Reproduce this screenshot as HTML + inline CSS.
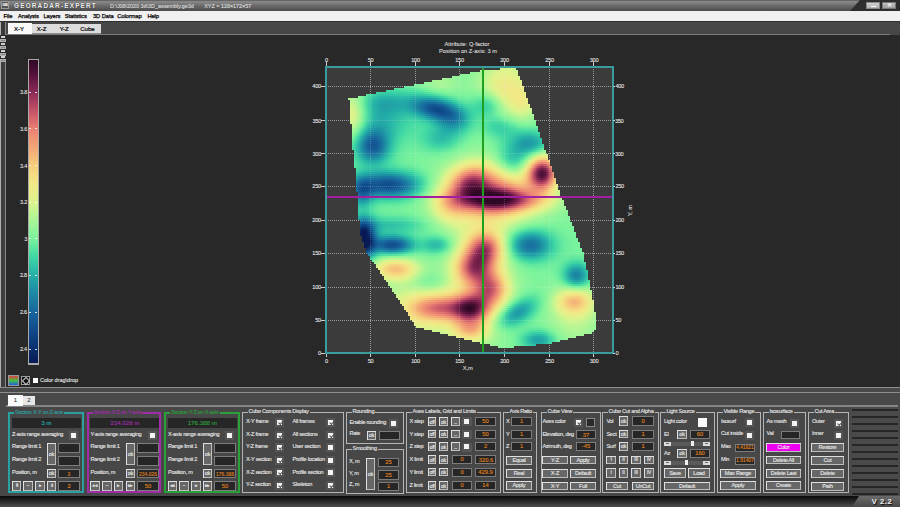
<!DOCTYPE html><html><head><meta charset="utf-8"><style>
html,body{margin:0;padding:0;width:900px;height:507px;overflow:hidden;background:#282828}
body div{position:absolute;box-sizing:content-box}
.t{font-family:"Liberation Sans", sans-serif;white-space:nowrap;-webkit-text-stroke:0.12px currentColor}
</style></head><body>
<div style="left:0px;top:0px;width:900px;height:11px;background:linear-gradient(#555 0,#8a8a8a 15%,#6c6c6c 50%,#4a4a4a)"></div><div style="left:850px;top:0;width:50px;height:11px;background:#2e2e2e;clip-path:polygon(10px 0,50px 0,50px 11px,0 11px)"></div><div style="left:866px;top:2px;width:14px;height:7px;background:linear-gradient(#d8d8d8,#a8a8a8);box-shadow:inset 0 0 0 1px #888"></div><div style="left:871px;top:6px;width:5px;height:1px;background:#fff"></div><div style="left:882px;top:2px;width:14px;height:7px;background:linear-gradient(#c8c8c8,#989898);box-shadow:inset 0 0 0 1px #777"></div><div class="t" style="left:789px;width:200px;text-align:center;top:1.70px;font-size:6px;line-height:7.20px;color:#fff;letter-spacing:0.00px;font-weight:400;">&#x2715;</div><div style="left:1px;top:1px;width:8px;height:8px;background:#555;box-shadow:inset 0 0 0 1px #999"></div><div class="t" style="left:-95px;width:200px;text-align:center;top:2.60px;font-size:4px;line-height:4.80px;color:#fff;letter-spacing:-0.30px;font-weight:700;">GE</div><div class="t" style="left:14px;top:1.76px;font-size:6.4px;line-height:7.68px;color:#f0f0f0;letter-spacing:1.20px;font-weight:700;text-shadow:0 0 1px #222;-webkit-text-stroke:0;">GEORADAR-EXPERT</div><div class="t" style="left:110px;transform-origin:0 50%;top:1.78px;font-size:6.2px;line-height:7.44px;color:#dcdcdc;letter-spacing:0.00px;font-weight:400;transform:scaleX(0.871);">D:\J08\2020 3d\3D_assembly.ge3d&nbsp;&nbsp;&nbsp;&nbsp;&nbsp;&nbsp;&nbsp;XYZ = 128×172×57</div><div style="left:0px;top:11px;width:900px;height:10px;background:#f0f0f0"></div><div class="t" style="left:3.4px;top:12.72px;font-size:5.8px;line-height:6.96px;color:#000;letter-spacing:-0.10px;font-weight:400;-webkit-text-stroke:0.25px #000;">File</div><div class="t" style="left:18px;top:12.72px;font-size:5.8px;line-height:6.96px;color:#000;letter-spacing:-0.10px;font-weight:400;-webkit-text-stroke:0.25px #000;">Analysis</div><div class="t" style="left:43.5px;top:12.72px;font-size:5.8px;line-height:6.96px;color:#000;letter-spacing:-0.10px;font-weight:400;-webkit-text-stroke:0.25px #000;">Layers</div><div class="t" style="left:64.7px;top:12.72px;font-size:5.8px;line-height:6.96px;color:#000;letter-spacing:-0.10px;font-weight:400;-webkit-text-stroke:0.25px #000;">Statistics</div><div class="t" style="left:92.6px;transform-origin:0 50%;top:12.48px;font-size:6.2px;line-height:7.44px;color:#000;letter-spacing:-0.11px;font-weight:400;transform:scaleX(0.935);-webkit-text-stroke:0.25px #000;">3D Data</div><div class="t" style="left:117.2px;top:12.72px;font-size:5.8px;line-height:6.96px;color:#000;letter-spacing:-0.10px;font-weight:400;-webkit-text-stroke:0.25px #000;">Colormap</div><div class="t" style="left:147.4px;top:12.72px;font-size:5.8px;line-height:6.96px;color:#000;letter-spacing:-0.10px;font-weight:400;-webkit-text-stroke:0.25px #000;">Help</div><div style="left:0px;top:21px;width:900px;height:14px;background:#474747;box-shadow:inset 0 1px 0 #303030"></div><div style="left:8px;top:23px;width:24px;height:12px;background:#fafafa"></div><div style="left:32px;top:24px;width:69px;height:9px;background:#dcdcdc"></div><div style="left:32px;top:33px;width:69px;height:2px;background:#8c8c8c"></div><div class="t" style="left:-81px;width:200px;text-align:center;top:25.70px;font-size:6px;line-height:7.20px;color:#000;letter-spacing:0.00px;font-weight:400;-webkit-text-stroke:0.2px #000;">X-Y</div><div class="t" style="left:-58.4px;width:200px;text-align:center;top:25.70px;font-size:6px;line-height:7.20px;color:#000;letter-spacing:0.00px;font-weight:400;-webkit-text-stroke:0.2px #000;">X-Z</div><div class="t" style="left:-35.8px;width:200px;text-align:center;top:25.70px;font-size:6px;line-height:7.20px;color:#000;letter-spacing:0.00px;font-weight:400;-webkit-text-stroke:0.2px #000;">Y-Z</div><div class="t" style="left:-12.599999999999994px;width:200px;text-align:center;top:25.70px;font-size:6px;line-height:7.20px;color:#000;letter-spacing:0.00px;font-weight:400;-webkit-text-stroke:0.2px #000;">Cube</div><div style="left:0px;top:35px;width:900px;height:352px;background:#282828"></div><div style="left:6px;top:34px;width:884px;height:1px;background:#7a7a7a"></div><div style="left:0px;top:22px;width:6px;height:468px;background:#3e3e3e;box-shadow:inset 1px 0 0 #b0b0b0,inset -1px 0 0 #8a8a8a"></div><div style="left:1px;top:22px;width:4px;height:13px;background:#3a3a3a"></div><div style="left:0px;top:35px;width:6px;height:26px;background:#2e2e2e"></div><div style="left:1px;top:36px;width:4px;height:2px;background:#d0d0d0"></div><div style="left:0px;top:39px;width:6px;height:3px;background:#8a8a8a;box-shadow:inset 0 0 0 1px #b0b0b0"></div><div style="left:1px;top:43px;width:4px;height:2px;background:#d0d0d0"></div><div style="left:0px;top:46px;width:6px;height:3px;background:#8a8a8a;box-shadow:inset 0 0 0 1px #b0b0b0"></div><div style="left:1px;top:50px;width:4px;height:2px;background:#d0d0d0"></div><div style="left:0px;top:53px;width:6px;height:3px;background:#8a8a8a;box-shadow:inset 0 0 0 1px #b0b0b0"></div><div style="left:1px;top:56px;width:4px;height:2px;background:#d0d0d0"></div><div style="left:0px;top:59px;width:6px;height:3px;background:#8a8a8a;box-shadow:inset 0 0 0 1px #b0b0b0"></div><div style="left:28px;top:59px;width:11px;height:306px;background:#aaa"></div><div style="left:29px;top:60px;width:9px;height:303px;background:linear-gradient(180deg,#2f0825 0.0%,#430d30 2.5%,#57133b 5.0%,#6e1d47 7.5%,#852753 10.0%,#9d365b 12.5%,#b44763 15.0%,#c95869 17.5%,#d96b6d 20.0%,#e97e72 22.5%,#ee8e74 25.0%,#f29d75 27.5%,#f4ad77 30.0%,#f5be7a 32.5%,#f6cf7c 35.0%,#f4da81 37.5%,#f3e585 40.0%,#eceb88 42.5%,#e4f08a 45.0%,#d8f48d 47.5%,#c3f591 50.0%,#aef696 52.5%,#9af598 55.0%,#86f49b 57.5%,#70ee9e 60.0%,#57e3a1 62.5%,#3fd7a4 65.0%,#34c6a6 67.5%,#28b6a7 70.0%,#22a5a7 72.5%,#1e96a5 75.0%,#1c86a3 77.5%,#1a78a1 80.0%,#186a9e 82.5%,#155e98 85.0%,#125290 87.5%,#0f4787 90.0%,#0c3c7b 92.5%,#0a316f 95.0%,#092662 97.5%,#081a54 100.0%)"></div><div class="t" style="left:-173.2px;width:200px;text-align:right;transform-origin:100% 50%;top:88.28px;font-size:6.2px;line-height:7.44px;color:#e4e4e4;letter-spacing:-0.33px;font-weight:400;transform:scaleX(0.903);-webkit-text-stroke:0.1px currentColor;">3.8</div><div style="left:29px;top:92px;width:2px;height:1px;background:rgba(255,255,255,.8)"></div><div style="left:35px;top:92px;width:2px;height:1px;background:rgba(255,255,255,.8)"></div><div class="t" style="left:-173.2px;width:200px;text-align:right;transform-origin:100% 50%;top:124.98px;font-size:6.2px;line-height:7.44px;color:#e4e4e4;letter-spacing:-0.33px;font-weight:400;transform:scaleX(0.903);-webkit-text-stroke:0.1px currentColor;">3.6</div><div style="left:29px;top:128px;width:2px;height:1px;background:rgba(255,255,255,.8)"></div><div style="left:35px;top:128px;width:2px;height:1px;background:rgba(255,255,255,.8)"></div><div class="t" style="left:-173.2px;width:200px;text-align:right;transform-origin:100% 50%;top:161.68px;font-size:6.2px;line-height:7.44px;color:#e4e4e4;letter-spacing:-0.33px;font-weight:400;transform:scaleX(0.903);-webkit-text-stroke:0.1px currentColor;">3.4</div><div style="left:29px;top:165px;width:2px;height:1px;background:rgba(255,255,255,.8)"></div><div style="left:35px;top:165px;width:2px;height:1px;background:rgba(255,255,255,.8)"></div><div class="t" style="left:-173.2px;width:200px;text-align:right;transform-origin:100% 50%;top:198.38px;font-size:6.2px;line-height:7.44px;color:#e4e4e4;letter-spacing:-0.33px;font-weight:400;transform:scaleX(0.903);-webkit-text-stroke:0.1px currentColor;">3.2</div><div style="left:29px;top:202px;width:2px;height:1px;background:rgba(255,255,255,.8)"></div><div style="left:35px;top:202px;width:2px;height:1px;background:rgba(255,255,255,.8)"></div><div class="t" style="left:-173.2px;width:200px;text-align:right;transform-origin:100% 50%;top:235.08px;font-size:6.2px;line-height:7.44px;color:#e4e4e4;letter-spacing:-0.33px;font-weight:400;transform:scaleX(0.903);-webkit-text-stroke:0.1px currentColor;">3</div><div style="left:29px;top:238px;width:2px;height:1px;background:rgba(255,255,255,.8)"></div><div style="left:35px;top:238px;width:2px;height:1px;background:rgba(255,255,255,.8)"></div><div class="t" style="left:-173.2px;width:200px;text-align:right;top:272.14px;font-size:5.6px;line-height:6.72px;color:#e4e4e4;letter-spacing:-0.30px;font-weight:400;-webkit-text-stroke:0.1px currentColor;">2.8</div><div style="left:29px;top:275px;width:2px;height:1px;background:rgba(255,255,255,.8)"></div><div style="left:35px;top:275px;width:2px;height:1px;background:rgba(255,255,255,.8)"></div><div class="t" style="left:-173.2px;width:200px;text-align:right;top:308.84px;font-size:5.6px;line-height:6.72px;color:#e4e4e4;letter-spacing:-0.30px;font-weight:400;-webkit-text-stroke:0.1px currentColor;">2.6</div><div style="left:29px;top:312px;width:2px;height:1px;background:rgba(255,255,255,.8)"></div><div style="left:35px;top:312px;width:2px;height:1px;background:rgba(255,255,255,.8)"></div><div class="t" style="left:-173.2px;width:200px;text-align:right;top:345.54px;font-size:5.6px;line-height:6.72px;color:#e4e4e4;letter-spacing:-0.30px;font-weight:400;-webkit-text-stroke:0.1px currentColor;">2.4</div><div style="left:29px;top:349px;width:2px;height:1px;background:rgba(255,255,255,.8)"></div><div style="left:35px;top:349px;width:2px;height:1px;background:rgba(255,255,255,.8)"></div><div style="left:9px;top:376px;width:9px;height:9px;background:linear-gradient(#e04040,#40c040 50%,#2060e0);box-shadow:0 0 0 1px #999"></div><div style="left:21px;top:376px;width:9px;height:9px;background:#111;box-shadow:inset 0 0 0 1px #999"></div><div style="left:23px;top:378px;width:4px;height:4px;border:1px solid #ccc;transform:rotate(45deg)"></div><div style="left:33px;top:378px;width:5px;height:5px;background:#fff"></div><div class="t" style="left:40px;top:377.14px;font-size:5.6px;line-height:6.72px;color:#e0e0e0;letter-spacing:-0.05px;font-weight:400;">Color drag\drop</div><div style="left:326px;top:67px;width:287px;height:287px;background:#3b3b3b"></div><div style="left:370px;top:67px;width:0;height:287px;border-left:1px dotted rgba(220,220,220,.45)"></div><div style="left:415px;top:67px;width:0;height:287px;border-left:1px dotted rgba(220,220,220,.45)"></div><div style="left:459px;top:67px;width:0;height:287px;border-left:1px dotted rgba(220,220,220,.45)"></div><div style="left:504px;top:67px;width:0;height:287px;border-left:1px dotted rgba(220,220,220,.45)"></div><div style="left:549px;top:67px;width:0;height:287px;border-left:1px dotted rgba(220,220,220,.45)"></div><div style="left:593px;top:67px;width:0;height:287px;border-left:1px dotted rgba(220,220,220,.45)"></div><div style="left:326px;top:320px;width:287px;height:0;border-top:1px dotted rgba(220,220,220,.45)"></div><div style="left:326px;top:287px;width:287px;height:0;border-top:1px dotted rgba(220,220,220,.45)"></div><div style="left:326px;top:253px;width:287px;height:0;border-top:1px dotted rgba(220,220,220,.45)"></div><div style="left:326px;top:220px;width:287px;height:0;border-top:1px dotted rgba(220,220,220,.45)"></div><div style="left:326px;top:186px;width:287px;height:0;border-top:1px dotted rgba(220,220,220,.45)"></div><div style="left:326px;top:153px;width:287px;height:0;border-top:1px dotted rgba(220,220,220,.45)"></div><div style="left:326px;top:120px;width:287px;height:0;border-top:1px dotted rgba(220,220,220,.45)"></div><div style="left:326px;top:86px;width:287px;height:0;border-top:1px dotted rgba(220,220,220,.45)"></div><div style="left:500px;top:68px;width:16px;height:2px;background:linear-gradient(90deg,#7ff49c 0px,#7ff49c 4px,#7ff49c 8px,#7ff49c 12px,#7ef49c 16px,#7df49c 20px,#7cf49c 24px,#7cf49c 28px,#7cf49c 32px,#7bf49c 36px,#7bf49c 40px,#7bf49c 44px,#7bf49c 48px,#7cf49c 52px,#7cf49c 56px,#7cf49c 60px,#7cf49c 64px,#7df49c 68px,#7ef49c 72px,#7ff49c 76px,#81f49b 80px,#83f49b 84px,#84f49b 88px,#85f49b 92px,#86f49b 96px,#85f49b 100px,#84f49b 104px,#83f49b 108px,#83f49b 112px,#84f49b 116px,#87f49b 120px,#8bf59a 124px,#92f599 128px,#9bf598 132px,#a6f697 136px,#b2f695 140px,#bef592 144px,#caf590 148px,#d3f48e 152px,#d8f48d 156px,#d9f48d 160px,#d5f48e 164px,#cef58f 168px,#c4f591 172px,#b8f694 176px,#abf696 180px,#a0f598 184px,#95f599 188px,#8df59a 192px,#87f49b 196px,#83f49b 200px,#80f49c 204px,#7ef49c 208px,#7df49c 212px,#7df49c 216px,#7cf49c 220px,#7cf49c 224px,#7cf49c 228px,#7cf49c 232px,#7cf49c 236px,#7cf49c 240px,#7cf49c 244px,#7cf49c 248px,#7cf49c 252px) -154px 0/252px 2px no-repeat"></div><div style="left:480px;top:70px;width:38px;height:2px;background:linear-gradient(90deg,#80f49c 0px,#80f49b 4px,#80f49b 8px,#80f49c 12px,#7ff49c 16px,#7df49c 20px,#7df49c 24px,#7cf49c 28px,#7bf49c 32px,#7bf49c 36px,#7bf49c 40px,#7bf49c 44px,#7bf49c 48px,#7bf49c 52px,#7bf49c 56px,#7cf49c 60px,#7cf49c 64px,#7df49c 68px,#7ff49c 72px,#81f49b 76px,#84f49b 80px,#86f49b 84px,#89f59a 88px,#8af59a 92px,#8bf59a 96px,#8af59a 100px,#88f59a 104px,#86f49b 108px,#85f49b 112px,#86f49b 116px,#88f59a 120px,#8df59a 124px,#94f599 128px,#9df598 132px,#a9f696 136px,#b6f694 140px,#c4f591 144px,#d0f58f 148px,#daf48d 152px,#def48c 156px,#dff38c 160px,#ddf48c 164px,#d5f48e 168px,#caf590 172px,#bef592 176px,#b0f695 180px,#a3f697 184px,#98f599 188px,#8ff59a 192px,#88f49b 196px,#83f49b 200px,#80f49b 204px,#7ef49c 208px,#7df49c 212px,#7df49c 216px,#7cf49c 220px,#7cf49c 224px,#7cf49c 228px,#7cf49c 232px,#7cf49c 236px,#7cf49c 240px,#7cf49c 244px,#7cf49c 248px,#7cf49c 252px) -134px 0/252px 2px no-repeat"></div><div style="left:470px;top:72px;width:48px;height:2px;background:linear-gradient(90deg,#81f49b 0px,#82f49b 4px,#82f49b 8px,#81f49b 12px,#7ff49c 16px,#7ef49c 20px,#7df49c 24px,#7bf49c 28px,#7bf39c 32px,#7bf39c 36px,#7af39c 40px,#7af39c 44px,#7bf39c 48px,#7bf39c 52px,#7bf49c 56px,#7cf49c 60px,#7df49c 64px,#7ef49c 68px,#80f49b 72px,#83f49b 76px,#87f49b 80px,#8bf59a 84px,#8ef59a 88px,#91f599 92px,#91f599 96px,#90f59a 100px,#8df59a 104px,#8af59a 108px,#88f59a 112px,#88f49b 116px,#8af59a 120px,#8ef59a 124px,#96f599 128px,#a0f598 132px,#acf696 136px,#baf593 140px,#c9f590 144px,#d6f48e 148px,#dff38c 152px,#e1f28b 156px,#e2f28b 160px,#e0f38b 164px,#dcf48c 168px,#d1f58f 172px,#c4f591 176px,#b6f694 180px,#a7f697 184px,#9bf598 188px,#91f599 192px,#89f59a 196px,#84f49b 200px,#80f49b 204px,#7ef49c 208px,#7df49c 212px,#7df49c 216px,#7cf49c 220px,#7cf49c 224px,#7cf49c 228px,#7cf49c 232px,#7cf49c 236px,#7cf49c 240px,#7cf49c 244px,#7cf49c 248px,#7cf49c 252px) -124px 0/252px 2px no-repeat"></div><div style="left:460px;top:74px;width:58px;height:2px;background:linear-gradient(90deg,#83f49b 0px,#84f49b 4px,#84f49b 8px,#82f49b 12px,#80f49b 16px,#7ef49c 20px,#7cf49c 24px,#7bf39c 28px,#7af39c 32px,#7af39c 36px,#79f39c 40px,#79f39c 44px,#7af39c 48px,#7af39c 52px,#7af39c 56px,#7bf49c 60px,#7df49c 64px,#7ef49c 68px,#81f49b 72px,#86f49b 76px,#8bf59a 80px,#90f599 84px,#95f599 88px,#98f599 92px,#98f598 96px,#96f599 100px,#93f599 104px,#8ff59a 108px,#8bf59a 112px,#8af59a 116px,#8bf59a 120px,#90f59a 124px,#97f599 128px,#a2f697 132px,#aff695 136px,#bef592 140px,#cef58f 144px,#dcf48c 148px,#e1f28b 152px,#e4f08a 156px,#e5f08a 160px,#e3f18a 164px,#e0f38b 168px,#d8f48d 172px,#cbf590 176px,#bbf593 180px,#acf696 184px,#9ef598 188px,#93f599 192px,#8af59a 196px,#84f49b 200px,#81f49b 204px,#7ff49c 208px,#7df49c 212px,#7df49c 216px,#7cf49c 220px,#7cf49c 224px,#7cf49c 228px,#7cf49c 232px,#7cf49c 236px,#7cf49c 240px,#7cf49c 244px,#7cf49c 248px,#7cf49c 252px) -114px 0/252px 2px no-repeat"></div><div style="left:452px;top:76px;width:68px;height:2px;background:linear-gradient(90deg,#85f49b 0px,#86f49b 4px,#86f49b 8px,#84f49b 12px,#81f49b 16px,#7ef49c 20px,#7cf49c 24px,#7af39c 28px,#79f29c 32px,#78f29d 36px,#78f29d 40px,#78f29d 44px,#78f29d 48px,#79f29c 52px,#79f39c 56px,#7af39c 60px,#7cf49c 64px,#7ff49c 68px,#83f49b 72px,#88f49b 76px,#8ef59a 80px,#95f599 84px,#9bf598 88px,#9ff598 92px,#9ff598 96px,#9df598 100px,#98f598 104px,#93f599 108px,#8ff59a 112px,#8cf59a 116px,#8df59a 120px,#91f599 124px,#99f598 128px,#a4f697 132px,#b2f695 136px,#c2f592 140px,#d2f48e 144px,#dff38c 148px,#e4f18a 152px,#e7ef89 156px,#e7ee89 160px,#e6ef8a 164px,#e3f18a 168px,#dff48c 172px,#d2f48e 176px,#c2f592 180px,#b1f695 184px,#a1f697 188px,#95f599 192px,#8bf59a 196px,#85f49b 200px,#81f49b 204px,#7ff49c 208px,#7df49c 212px,#7df49c 216px,#7cf49c 220px,#7cf49c 224px,#7cf49c 228px,#7cf49c 232px,#7cf49c 236px,#7cf49c 240px,#7cf49c 244px,#7cf49c 248px,#7cf49c 252px) -106px 0/252px 2px no-repeat"></div><div style="left:442px;top:78px;width:78px;height:2px;background:linear-gradient(90deg,#87f49b 0px,#89f59a 4px,#89f59a 8px,#86f49b 12px,#82f49b 16px,#7ff49c 20px,#7bf49c 24px,#78f29d 28px,#76f19d 32px,#76f19d 36px,#75f19d 40px,#75f19d 44px,#76f19d 48px,#76f19d 52px,#77f29d 56px,#79f39c 60px,#7bf49c 64px,#7ef49c 68px,#83f49b 72px,#89f59a 76px,#91f599 80px,#99f598 84px,#a0f697 88px,#a5f697 92px,#a6f697 96px,#a3f697 100px,#9df598 104px,#97f599 108px,#91f599 112px,#8ef59a 116px,#8ef59a 120px,#92f599 124px,#9af598 128px,#a5f697 132px,#b4f694 136px,#c4f591 140px,#d5f48e 144px,#e1f28b 148px,#e6ef8a 152px,#e9ed89 156px,#eaed88 160px,#e9ee89 164px,#e6ef8a 168px,#e2f28b 172px,#d9f48d 176px,#c8f590 180px,#b6f694 184px,#a5f697 188px,#97f599 192px,#8cf59a 196px,#86f49b 200px,#81f49b 204px,#7ff49c 208px,#7ef49c 212px,#7df49c 216px,#7cf49c 220px,#7cf49c 224px,#7cf49c 228px,#7cf49c 232px,#7cf49c 236px,#7cf49c 240px,#7cf49c 244px,#7cf49c 248px,#7cf49c 252px) -96px 0/252px 2px no-repeat"></div><div style="left:432px;top:80px;width:90px;height:2px;background:linear-gradient(90deg,#8af59a 0px,#8cf59a 4px,#8bf59a 8px,#88f59a 12px,#83f49b 16px,#7ef49c 20px,#79f39c 24px,#75f19d 28px,#73f09d 32px,#72ef9d 36px,#72ef9d 40px,#72ef9d 44px,#72ef9d 48px,#73f09d 52px,#74f09d 56px,#76f19d 60px,#79f39c 64px,#7df49c 68px,#83f49b 72px,#8af59a 76px,#92f599 80px,#9bf598 84px,#a3f697 88px,#a9f696 92px,#aaf696 96px,#a6f697 100px,#a0f697 104px,#99f598 108px,#93f599 112px,#8ff59a 116px,#8ff59a 120px,#93f599 124px,#9bf598 128px,#a6f697 132px,#b5f694 136px,#c6f591 140px,#d7f48d 144px,#e2f28b 148px,#e7ee89 152px,#ebec88 156px,#ecec88 160px,#ebec88 164px,#e9ee89 168px,#e5f08a 172px,#dff38c 176px,#cff58f 180px,#bcf593 184px,#a9f696 188px,#99f598 192px,#8ef59a 196px,#86f49b 200px,#82f49b 204px,#7ff49c 208px,#7ef49c 212px,#7df49c 216px,#7cf49c 220px,#7cf49c 224px,#7cf49c 228px,#7cf49c 232px,#7cf49c 236px,#7cf49c 240px,#7cf49c 244px,#7cf49c 248px,#7cf49c 252px) -86px 0/252px 2px no-repeat"></div><div style="left:424px;top:82px;width:98px;height:2px;background:linear-gradient(90deg,#8df59a 0px,#8ff59a 4px,#8ff59a 8px,#8bf59a 12px,#84f49b 16px,#7df49c 20px,#76f19d 24px,#71ef9d 28px,#6eee9e 32px,#6ded9e 36px,#6ced9e 40px,#6ced9e 44px,#6ded9e 48px,#6eee9e 52px,#70ee9e 56px,#72ef9d 60px,#76f19d 64px,#7bf39c 68px,#81f49b 72px,#88f59a 76px,#91f599 80px,#9bf598 84px,#a4f697 88px,#a9f696 92px,#aaf696 96px,#a7f697 100px,#a1f697 104px,#9af598 108px,#94f599 112px,#90f59a 116px,#8ff59a 120px,#93f599 124px,#9bf598 128px,#a6f697 132px,#b4f694 136px,#c6f591 140px,#d8f48d 144px,#e2f18b 148px,#e8ee89 152px,#ecec88 156px,#eeeb87 160px,#edeb87 164px,#ebec88 168px,#e7ee89 172px,#e2f18b 176px,#d7f48d 180px,#c2f592 184px,#adf696 188px,#9cf598 192px,#8ff59a 196px,#87f49b 200px,#82f49b 204px,#7ff49c 208px,#7ef49c 212px,#7df49c 216px,#7cf49c 220px,#7cf49c 224px,#7cf49c 228px,#7cf49c 232px,#7cf49c 236px,#7cf49c 240px,#7cf49c 244px,#7cf49c 248px,#7cf49c 252px) -78px 0/252px 2px no-repeat"></div><div style="left:414px;top:84px;width:108px;height:2px;background:linear-gradient(90deg,#90f599 0px,#93f599 4px,#92f599 8px,#8df59a 12px,#84f49b 16px,#7bf49c 20px,#72ef9d 24px,#6bec9e 28px,#67ea9f 32px,#65e99f 36px,#65e99f 40px,#65e99f 44px,#66ea9f 48px,#68ea9f 52px,#6aeb9e 56px,#6ced9e 60px,#70ee9e 64px,#75f19d 68px,#7cf49c 72px,#84f49b 76px,#8ef59a 80px,#98f599 84px,#a0f697 88px,#a6f697 92px,#a8f697 96px,#a5f697 100px,#a0f598 104px,#99f598 108px,#93f599 112px,#8ff59a 116px,#8ff59a 120px,#92f599 124px,#99f598 128px,#a4f697 132px,#b2f695 136px,#c4f591 140px,#d6f48e 144px,#e2f28b 148px,#e8ee89 152px,#edeb88 156px,#efea87 160px,#efea87 164px,#edeb87 168px,#eaed88 172px,#e5f08a 176px,#def48c 180px,#c8f590 184px,#b1f695 188px,#9ef598 192px,#90f599 196px,#87f49b 200px,#82f49b 204px,#7ff49c 208px,#7ef49c 212px,#7df49c 216px,#7cf49c 220px,#7cf49c 224px,#7cf49c 228px,#7cf49c 232px,#7cf49c 236px,#7cf49c 240px,#7cf49c 244px,#7cf49c 248px,#7cf49c 252px) -68px 0/252px 2px no-repeat"></div><div style="left:404px;top:86px;width:120px;height:2px;background:linear-gradient(90deg,#94f599 0px,#98f599 4px,#96f599 8px,#8ff59a 12px,#84f49b 16px,#78f29d 20px,#6ced9e 24px,#64e99f 28px,#5ee6a0 32px,#5ce5a0 36px,#5be5a0 40px,#5be5a0 44px,#5de5a0 48px,#5ee6a0 52px,#61e7a0 56px,#64e99f 60px,#68eb9f 64px,#6ded9e 68px,#74f09d 72px,#7df49c 76px,#86f49b 80px,#90f599 84px,#99f598 88px,#9ff598 92px,#a1f697 96px,#a0f598 100px,#9bf598 104px,#95f599 108px,#90f599 112px,#8df59a 116px,#8df59a 120px,#91f599 124px,#97f599 128px,#a1f697 132px,#aef696 136px,#bff592 140px,#d2f48e 144px,#e1f28b 148px,#e7ee89 152px,#eceb88 156px,#efea87 160px,#f0e987 164px,#efea87 168px,#edeb88 172px,#e8ee89 176px,#e1f28b 180px,#cff58f 184px,#b6f694 188px,#a1f697 192px,#92f599 196px,#88f59a 200px,#82f49b 204px,#7ff49c 208px,#7ef49c 212px,#7df49c 216px,#7cf49c 220px,#7cf49c 224px,#7cf49c 228px,#7cf49c 232px,#7cf49c 236px,#7cf49c 240px,#7cf49c 244px,#7cf49c 248px,#7cf49c 252px) -58px 0/252px 2px no-repeat"></div><div style="left:394px;top:88px;width:130px;height:2px;background:linear-gradient(90deg,#98f598 0px,#9cf598 4px,#9af598 8px,#91f599 12px,#83f49b 16px,#74f09d 20px,#65e99f 24px,#5ae4a1 28px,#53e1a1 32px,#50dfa2 36px,#4edfa2 40px,#4fdfa2 44px,#51e0a2 48px,#53e1a1 52px,#56e2a1 56px,#59e4a1 60px,#5ce5a0 64px,#61e8a0 68px,#68eb9f 72px,#70ef9e 76px,#7bf49c 80px,#85f49b 84px,#8df59a 88px,#94f599 92px,#97f599 96px,#97f599 100px,#94f599 104px,#90f599 108px,#8df59a 112px,#8bf59a 116px,#8bf59a 120px,#8ef59a 124px,#93f599 128px,#9bf598 132px,#a7f697 136px,#b7f694 140px,#caf590 144px,#def48c 148px,#e5f08a 152px,#ebec88 156px,#efea87 160px,#f1e986 164px,#f1e986 168px,#efea87 172px,#ebec88 176px,#e4f08a 180px,#d5f48e 184px,#baf593 188px,#a3f697 192px,#93f599 196px,#89f59a 200px,#83f49b 204px,#7ff49c 208px,#7ef49c 212px,#7df49c 216px,#7cf49c 220px,#7cf49c 224px,#7cf49c 228px,#7cf49c 232px,#7cf49c 236px,#7cf49c 240px,#7cf49c 244px,#7cf49c 248px,#7cf49c 252px) -48px 0/252px 2px no-repeat"></div><div style="left:386px;top:90px;width:138px;height:2px;background:linear-gradient(90deg,#9df598 0px,#a1f697 4px,#9ef598 8px,#92f599 12px,#82f49b 16px,#6eed9e 20px,#5be5a0 24px,#4edfa2 28px,#46dba3 32px,#41d9a4 36px,#40d8a4 40px,#40d8a4 44px,#42d9a4 48px,#45daa3 52px,#48dca3 56px,#4bdda3 60px,#4edfa2 64px,#52e0a2 68px,#57e3a1 72px,#5ee6a0 76px,#68eb9f 80px,#72f09d 84px,#7df49c 88px,#84f49b 92px,#89f59a 96px,#8bf59a 100px,#8bf59a 104px,#8af59a 108px,#88f49b 112px,#87f49b 116px,#88f49b 120px,#8af59a 124px,#8ef59a 128px,#94f599 132px,#9ef598 136px,#acf696 140px,#bff592 144px,#d4f48e 148px,#e2f18b 152px,#e9ed89 156px,#eeeb87 160px,#f1e986 164px,#f2e886 168px,#f1e886 172px,#eeea87 176px,#e7ef89 180px,#dbf48d 184px,#bef592 188px,#a5f697 192px,#94f599 196px,#89f59a 200px,#83f49b 204px,#7ff49c 208px,#7ef49c 212px,#7df49c 216px,#7cf49c 220px,#7cf49c 224px,#7cf49c 228px,#7cf49c 232px,#7cf49c 236px,#7cf49c 240px,#7cf49c 244px,#7cf49c 248px,#7cf49c 252px) -40px 0/252px 2px no-repeat"></div><div style="left:376px;top:92px;width:150px;height:2px;background:linear-gradient(90deg,#a1f697 0px,#a6f697 4px,#a2f697 8px,#94f599 12px,#80f49b 16px,#68ea9f 20px,#51e0a2 24px,#41d8a4 28px,#3cd2a5 32px,#39cea5 36px,#38cda5 40px,#39cda5 44px,#3acfa5 48px,#3bd1a5 52px,#3cd3a5 56px,#3dd4a4 60px,#3ed6a4 64px,#3fd7a4 68px,#42d9a4 72px,#47dba3 76px,#4edfa2 80px,#58e3a1 84px,#63e89f 88px,#6eed9e 92px,#77f29d 96px,#7df49c 100px,#80f49c 104px,#81f49b 108px,#82f49b 112px,#83f49b 116px,#84f49b 120px,#85f49b 124px,#87f49b 128px,#8bf59a 132px,#92f599 136px,#9ff598 140px,#b1f695 144px,#c7f591 148px,#def48c 152px,#e6ef8a 156px,#ecec88 160px,#f0e987 164px,#f2e886 168px,#f2e786 172px,#f0e987 176px,#e9ed89 180px,#dff48c 184px,#c2f592 188px,#a7f697 192px,#95f599 196px,#89f59a 200px,#83f49b 204px,#80f49c 208px,#7ef49c 212px,#7df49c 216px,#7cf49c 220px,#7cf49c 224px,#7cf49c 228px,#7cf49c 232px,#7cf49c 236px,#7cf49c 240px,#7cf49c 244px,#7cf49c 248px,#7cf49c 252px) -30px 0/252px 2px no-repeat"></div><div style="left:366px;top:94px;width:160px;height:2px;background:linear-gradient(90deg,#a7f697 0px,#acf696 4px,#a6f697 8px,#96f599 12px,#7ff49c 16px,#61e7a0 20px,#46dba3 24px,#3acfa5 28px,#34c7a6 32px,#31c3a6 36px,#30c2a6 40px,#31c2a6 44px,#32c4a6 48px,#33c6a6 52px,#35c8a6 56px,#35c9a6 60px,#35c9a6 64px,#35c8a6 68px,#35c8a6 72px,#36c9a5 76px,#38cda5 80px,#3cd2a5 84px,#42d9a4 88px,#4fdfa2 92px,#5be5a0 96px,#66ea9f 100px,#6fee9e 104px,#75f19d 108px,#7af39c 112px,#7df49c 116px,#7ef49c 120px,#7ff49c 124px,#7ff49c 128px,#80f49c 132px,#84f49b 136px,#8ff59a 140px,#a0f697 144px,#b7f694 148px,#d1f58f 152px,#e2f28b 156px,#e9ed89 160px,#eeea87 164px,#f2e886 168px,#f2e685 172px,#f2e886 176px,#ebec88 180px,#e0f38b 184px,#c5f591 188px,#a9f696 192px,#96f599 196px,#8af59a 200px,#83f49b 204px,#80f49c 208px,#7ef49c 212px,#7df49c 216px,#7cf49c 220px,#7cf49c 224px,#7cf49c 228px,#7cf49c 232px,#7cf49c 236px,#7cf49c 240px,#7cf49c 244px,#7cf49c 248px,#7cf49c 252px) -20px 0/252px 2px no-repeat"></div><div style="left:358px;top:96px;width:168px;height:2px;background:linear-gradient(90deg,#acf696 0px,#b2f695 4px,#abf696 8px,#98f598 12px,#7ef49c 16px,#5be4a0 20px,#3ed5a4 24px,#34c7a6 28px,#2dbda7 32px,#2ab8a7 36px,#29b7a7 40px,#29b7a7 44px,#2bb9a7 48px,#2cbba7 52px,#2dbda7 56px,#2dbda7 60px,#2cbba7 64px,#2ab8a7 68px,#28b5a7 72px,#27b4a8 76px,#27b4a8 80px,#2ab8a7 84px,#2fc0a6 88px,#36c9a5 92px,#3dd4a4 96px,#4adda3 100px,#59e3a1 104px,#65e99f 108px,#6eed9e 112px,#74f09d 116px,#77f29d 120px,#77f29d 124px,#74f09d 128px,#72ef9d 132px,#74f09d 136px,#7ef49c 140px,#8ef59a 144px,#a6f697 148px,#c2f592 152px,#dcf48c 156px,#e6ef8a 160px,#eceb88 164px,#f1e986 168px,#f2e685 172px,#f2e886 176px,#ecec88 180px,#e1f28b 184px,#c6f591 188px,#aaf696 192px,#96f599 196px,#8af59a 200px,#83f49b 204px,#7ff49c 208px,#7ef49c 212px,#7df49c 216px,#7cf49c 220px,#7cf49c 224px,#7cf49c 228px,#7cf49c 232px,#7cf49c 236px,#7cf49c 240px,#7cf49c 244px,#7cf49c 248px,#7cf49c 252px) -12px 0/252px 2px no-repeat"></div><div style="left:348px;top:98px;width:180px;height:2px;background:linear-gradient(90deg,#b2f695 0px,#b8f694 4px,#b1f695 8px,#9bf598 12px,#7df49c 16px,#56e2a1 20px,#3ad0a5 24px,#2ebfa7 28px,#27b4a8 32px,#24afa8 36px,#23ada8 40px,#24aea8 44px,#24b0a8 48px,#26b2a8 52px,#26b3a8 56px,#26b2a8 60px,#24afa8 64px,#23a9a7 68px,#21a3a7 72px,#209ea6 76px,#209ba6 80px,#209da6 84px,#21a3a7 88px,#23ada8 92px,#2bbaa7 96px,#35c8a6 100px,#3fd6a4 104px,#50dfa2 108px,#5ee6a0 112px,#69eb9f 116px,#6eed9e 120px,#6ded9e 124px,#69eb9f 128px,#63e89f 132px,#61e7a0 136px,#69eb9f 140px,#7df49c 144px,#96f599 148px,#b3f695 152px,#d0f58f 156px,#e2f28b 160px,#eaed88 164px,#efea87 168px,#f2e786 172px,#f2e886 176px,#eceb88 180px,#e2f28b 184px,#c7f591 188px,#aaf696 192px,#96f599 196px,#8af59a 200px,#83f49b 204px,#7ff49c 208px,#7ef49c 212px,#7df49c 216px,#7cf49c 220px,#7cf49c 224px,#7cf49c 228px,#7cf49c 232px,#7cf49c 236px,#7cf49c 240px,#7cf49c 244px,#7cf49c 248px,#7cf49c 252px) -2px 0/252px 2px no-repeat"></div><div style="left:350px;top:100px;width:178px;height:2px;background:linear-gradient(90deg,#b8f694 0px,#bff592 4px,#b7f694 8px,#9ff598 12px,#7ef49c 16px,#53e1a2 20px,#37cba5 24px,#2ab9a7 28px,#23aea8 32px,#22a8a7 36px,#22a6a7 40px,#22a7a7 44px,#23aaa7 48px,#23aca8 52px,#23aca8 56px,#23aaa7 60px,#22a5a7 64px,#209da6 68px,#1e93a5 72px,#1c89a4 76px,#1b83a3 80px,#1b82a3 84px,#1b85a3 88px,#1d8fa5 92px,#209da6 96px,#24aea8 100px,#2fc0a6 104px,#3bd1a5 108px,#4bdda3 112px,#5ae4a1 116px,#62e89f 120px,#63e89f 124px,#5de6a0 128px,#55e2a1 132px,#51e0a2 136px,#56e2a1 140px,#69eb9f 144px,#86f49b 148px,#a5f697 152px,#c4f591 156px,#def48c 160px,#e7ef89 164px,#edeb87 168px,#f1e886 172px,#f1e886 176px,#ecec88 180px,#e1f28b 184px,#c7f591 188px,#aaf696 192px,#96f599 196px,#89f59a 200px,#83f49b 204px,#7ff49c 208px,#7ef49c 212px,#7df49c 216px,#7cf49c 220px,#7cf49c 224px,#7cf49c 228px,#7cf49c 232px,#7cf49c 236px,#7cf49c 240px,#7cf49c 244px,#7cf49c 248px,#7cf49c 252px) -4px 0/252px 2px no-repeat"></div><div style="left:350px;top:102px;width:178px;height:2px;background:linear-gradient(90deg,#bff592 0px,#c7f591 4px,#bef592 8px,#a4f697 12px,#80f49c 16px,#51e0a2 20px,#35c9a6 24px,#27b5a8 28px,#23a9a7 32px,#21a3a7 36px,#21a2a7 40px,#21a3a7 44px,#22a6a7 48px,#22a8a7 52px,#22a8a7 56px,#22a5a7 60px,#209fa6 64px,#1e94a5 68px,#1c87a3 72px,#1a7aa1 76px,#19709f 80px,#186b9e 84px,#186c9f 88px,#1974a0 92px,#1b81a2 96px,#1e93a5 100px,#22a8a7 104px,#2dbda7 108px,#3ad0a5 112px,#49dca3 116px,#55e2a1 120px,#59e3a1 124px,#53e1a1 128px,#4adda3 132px,#44daa3 136px,#47dba3 140px,#59e4a1 144px,#79f39c 148px,#99f598 152px,#b9f593 156px,#d5f48e 160px,#e3f18a 164px,#eaed88 168px,#efea87 172px,#efea87 176px,#eaed88 180px,#e0f38b 184px,#c5f591 188px,#a9f696 192px,#95f599 196px,#89f59a 200px,#82f49b 204px,#7ff49c 208px,#7ef49c 212px,#7df49c 216px,#7cf49c 220px,#7cf49c 224px,#7cf49c 228px,#7cf49c 232px,#7cf49c 236px,#7cf49c 240px,#7cf49c 244px,#7cf49c 248px,#7cf49c 252px) -4px 0/252px 2px no-repeat"></div><div style="left:350px;top:104px;width:180px;height:2px;background:linear-gradient(90deg,#c5f591 0px,#cef58f 4px,#c5f591 8px,#a9f696 12px,#83f49b 16px,#52e1a2 20px,#35c8a6 24px,#26b3a8 28px,#22a7a7 32px,#21a1a6 36px,#21a0a6 40px,#21a1a6 44px,#22a4a7 48px,#22a7a7 52px,#22a7a7 56px,#22a4a7 60px,#209ca6 64px,#1d90a5 68px,#1b81a2 72px,#1971a0 76px,#17639b 80px,#145c96 84px,#145a95 88px,#155e98 92px,#18689e 96px,#1a7aa1 100px,#1d90a5 104px,#22a7a7 108px,#2ebea7 112px,#3bd1a5 116px,#47dba3 120px,#4edfa2 124px,#4bdda3 128px,#43d9a4 132px,#3ed5a4 136px,#3fd7a4 140px,#4fdfa2 144px,#6eed9e 148px,#8ff59a 152px,#aff695 156px,#cbf590 160px,#e0f38c 164px,#e7ef89 168px,#ecec88 172px,#edeb88 176px,#e8ee89 180px,#dff48c 184px,#c2f592 188px,#a7f697 192px,#94f599 196px,#88f59a 200px,#82f49b 204px,#7ff49c 208px,#7ef49c 212px,#7df49c 216px,#7cf49c 220px,#7cf49c 224px,#7cf49c 228px,#7cf49c 232px,#7cf49c 236px,#7cf49c 240px,#7cf49c 244px,#7cf49c 248px,#7cf49c 252px) -4px 0/252px 2px no-repeat"></div><div style="left:350px;top:106px;width:180px;height:2px;background:linear-gradient(90deg,#cbf590 0px,#d5f48e 4px,#ccf590 8px,#aff695 12px,#87f49b 16px,#55e2a1 20px,#35c8a6 24px,#26b3a8 28px,#22a7a7 32px,#21a1a6 36px,#21a0a6 40px,#21a2a7 44px,#22a5a7 48px,#22a8a7 52px,#23a9a7 56px,#22a6a7 60px,#209fa6 64px,#1e91a5 68px,#1b80a2 72px,#196e9f 76px,#155f98 80px,#125391 84px,#114e8d 88px,#114f8e 92px,#135793 96px,#17659c 100px,#1a7aa1 104px,#1e92a5 108px,#23aca8 112px,#31c2a6 116px,#3cd2a5 120px,#44daa3 124px,#45daa3 128px,#3fd7a4 132px,#3dd3a4 136px,#3dd4a4 140px,#4adda3 144px,#67ea9f 148px,#89f59a 152px,#a6f697 156px,#c2f592 160px,#d8f48d 164px,#e3f18b 168px,#e8ee89 172px,#e9ed89 176px,#e5f08a 180px,#d9f48d 184px,#bdf593 188px,#a4f697 192px,#92f599 196px,#88f49b 200px,#82f49b 204px,#7ff49c 208px,#7df49c 212px,#7df49c 216px,#7cf49c 220px,#7cf49c 224px,#7cf49c 228px,#7cf49c 232px,#7cf49c 236px,#7cf49c 240px,#7cf49c 244px,#7cf49c 248px,#7cf49c 252px) -4px 0/252px 2px no-repeat"></div><div style="left:350px;top:108px;width:182px;height:2px;background:linear-gradient(90deg,#d0f58f 0px,#dbf48d 4px,#d2f48e 8px,#b4f694 12px,#8bf59a 16px,#58e3a1 20px,#36caa5 24px,#27b4a8 28px,#22a8a7 32px,#21a3a7 36px,#21a2a7 40px,#21a4a7 44px,#22a8a7 48px,#23aba8 52px,#23ada8 56px,#23aba8 60px,#22a4a7 64px,#1f98a5 68px,#1c86a3 72px,#1973a0 76px,#166199 80px,#125390 84px,#104a8a 88px,#0f4888 92px,#104d8c 96px,#135894 100px,#18689e 104px,#1b80a2 108px,#1f9aa6 112px,#27b4a8 116px,#35c8a6 120px,#3dd4a4 124px,#41d8a4 128px,#3fd7a4 132px,#3dd4a4 136px,#3ed5a4 140px,#4adda3 144px,#64e99f 148px,#84f49b 152px,#9ff598 156px,#b8f694 160px,#cdf58f 164px,#def48c 168px,#e3f18a 172px,#e5f08a 176px,#e1f28b 180px,#d1f58f 184px,#b8f694 188px,#a1f697 192px,#91f599 196px,#87f49b 200px,#81f49b 204px,#7ff49c 208px,#7df49c 212px,#7df49c 216px,#7cf49c 220px,#7cf49c 224px,#7cf49c 228px,#7cf49c 232px,#7cf49c 236px,#7cf49c 240px,#7cf49c 244px,#7cf49c 248px,#7cf49c 252px) -4px 0/252px 2px no-repeat"></div><div style="left:350px;top:110px;width:182px;height:2px;background:linear-gradient(90deg,#d4f48e 0px,#dff48c 4px,#d7f48d 8px,#b9f593 12px,#8ef59a 16px,#5ce5a0 20px,#37cca5 24px,#28b6a7 28px,#23aaa7 32px,#22a5a7 36px,#22a5a7 40px,#22a7a7 44px,#23aca8 48px,#24b0a8 52px,#26b3a8 56px,#25b2a8 60px,#23ada8 64px,#21a1a6 68px,#1d91a5 72px,#1b7da2 76px,#18699e 80px,#145a95 84px,#114e8d 88px,#0f4888 92px,#0f4989 96px,#11508f 100px,#155e98 104px,#1972a0 108px,#1c8ca4 112px,#22a7a7 116px,#2ebfa7 120px,#3acfa5 124px,#3fd7a4 128px,#40d8a4 132px,#3fd7a4 136px,#41d9a4 140px,#4ddea2 144px,#64e99f 148px,#80f49c 152px,#98f598 156px,#aef696 160px,#c2f592 164px,#d2f48e 168px,#def48c 172px,#dff38c 176px,#daf48d 180px,#c9f590 184px,#b2f695 188px,#9df598 192px,#8ff59a 196px,#86f49b 200px,#81f49b 204px,#7ef49c 208px,#7df49c 212px,#7df49c 216px,#7cf49c 220px,#7cf49c 224px,#7cf49c 228px,#7cf49c 232px,#7cf49c 236px,#7cf49c 240px,#7cf49c 244px,#7cf49c 248px,#7cf49c 252px) -4px 0/252px 2px no-repeat"></div><div style="left:350px;top:112px;width:182px;height:2px;background:linear-gradient(90deg,#d6f48e 0px,#e0f38b 4px,#daf48d 8px,#bcf593 12px,#91f599 16px,#5ee6a0 20px,#38cda5 24px,#29b8a7 28px,#23aca8 32px,#22a7a7 36px,#22a8a7 40px,#23aba7 44px,#24b0a8 48px,#27b5a8 52px,#2ab9a7 56px,#2bbaa7 60px,#28b6a7 64px,#23ada8 68px,#209fa6 72px,#1d8da4 76px,#1a79a1 80px,#18669d 84px,#145994 88px,#114f8e 92px,#104c8c 96px,#114f8e 100px,#145994 104px,#18699e 108px,#1b82a3 112px,#209da6 116px,#29b7a7 120px,#37cba5 124px,#3fd7a4 128px,#44daa3 132px,#45daa3 136px,#48dca3 140px,#51e0a2 144px,#63e89f 148px,#7bf49c 152px,#90f599 156px,#a4f697 160px,#b5f694 164px,#c4f591 168px,#d0f58f 172px,#d4f48e 176px,#cef58f 180px,#bff592 184px,#abf696 188px,#99f598 192px,#8cf59a 196px,#85f49b 200px,#80f49b 204px,#7ef49c 208px,#7df49c 212px,#7df49c 216px,#7cf49c 220px,#7cf49c 224px,#7cf49c 228px,#7cf49c 232px,#7cf49c 236px,#7cf49c 240px,#7cf49c 244px,#7cf49c 248px,#7cf49c 252px) -4px 0/252px 2px no-repeat"></div><div style="left:350px;top:114px;width:184px;height:2px;background:linear-gradient(90deg,#d7f48d 0px,#e0f38b 4px,#dbf48d 8px,#bdf593 12px,#91f599 16px,#5fe6a0 20px,#39cea5 24px,#2ab9a7 28px,#23ada8 32px,#23a9a7 36px,#23aaa7 40px,#24aea8 44px,#26b3a8 48px,#2bb9a7 52px,#2ebea7 56px,#30c1a6 60px,#2fc0a6 64px,#2bbaa7 68px,#24afa8 72px,#209fa6 76px,#1c8ca4 80px,#1a7aa1 84px,#18689e 88px,#155d97 92px,#135592 96px,#125491 100px,#145a95 104px,#17669d 108px,#1a7ca2 112px,#1f97a5 116px,#25b2a8 120px,#35c9a6 124px,#3fd7a4 128px,#49dca3 132px,#4cdda2 136px,#4edea2 140px,#54e1a1 144px,#61e8a0 148px,#74f09d 152px,#87f49b 156px,#97f599 160px,#a7f697 164px,#b5f694 168px,#c0f592 172px,#c5f591 176px,#c1f592 180px,#b5f694 184px,#a4f697 188px,#95f599 192px,#8af59a 196px,#83f49b 200px,#80f49c 204px,#7ef49c 208px,#7df49c 212px,#7cf49c 216px,#7cf49c 220px,#7cf49c 224px,#7cf49c 228px,#7cf49c 232px,#7cf49c 236px,#7cf49c 240px,#7cf49c 244px,#7cf49c 248px,#7cf49c 252px) -4px 0/252px 2px no-repeat"></div><div style="left:350px;top:116px;width:184px;height:2px;background:linear-gradient(90deg,#d6f48e 0px,#e0f38b 4px,#daf48d 8px,#bbf593 12px,#90f599 16px,#5de6a0 20px,#38cda5 24px,#2ab8a7 28px,#24aea8 32px,#23aaa7 36px,#23aca8 40px,#24b0a8 44px,#29b7a7 48px,#2dbda7 52px,#31c3a6 56px,#34c7a6 60px,#35c8a6 64px,#33c5a6 68px,#2ebea7 72px,#25b1a8 76px,#21a2a6 80px,#1d8fa5 84px,#1b7ea2 88px,#196e9f 92px,#16629a 96px,#155d97 100px,#155f98 104px,#18689e 108px,#1a7ba1 112px,#1e94a5 116px,#24b0a8 120px,#35c8a6 124px,#41d8a4 128px,#4ddea2 132px,#51e0a2 136px,#52e0a2 140px,#55e2a1 144px,#5de5a0 148px,#6aec9e 152px,#7bf39c 156px,#8af59a 160px,#98f598 164px,#a6f697 168px,#b0f695 172px,#b6f694 176px,#b4f694 180px,#aaf696 184px,#9df598 188px,#90f599 192px,#87f49b 196px,#82f49b 200px,#7ff49c 204px,#7df49c 208px,#7df49c 212px,#7cf49c 216px,#7cf49c 220px,#7cf49c 224px,#7cf49c 228px,#7cf49c 232px,#7cf49c 236px,#7cf49c 240px,#7cf49c 244px,#7cf49c 248px,#7cf49c 252px) -4px 0/252px 2px no-repeat"></div><div style="left:350px;top:118px;width:184px;height:2px;background:linear-gradient(90deg,#d3f48e 0px,#def48c 4px,#d6f48e 8px,#b8f694 12px,#8df59a 16px,#59e4a1 20px,#37cba5 24px,#29b7a7 28px,#23ada8 32px,#23aba7 36px,#23ada8 40px,#26b2a8 44px,#2bb9a7 48px,#30c1a6 52px,#34c7a6 56px,#38cca5 60px,#3acfa5 64px,#3acfa5 68px,#36caa5 72px,#30c2a6 76px,#27b5a8 80px,#22a5a7 84px,#1e93a5 88px,#1b82a3 92px,#1973a0 96px,#18699e 100px,#18679d 104px,#196e9f 108px,#1b7ea2 112px,#1e96a5 116px,#24b0a8 120px,#36c9a5 124px,#43daa4 128px,#51e0a2 132px,#55e2a1 136px,#54e1a1 140px,#53e1a2 144px,#55e2a1 148px,#5de6a0 152px,#6aec9e 156px,#7af39c 160px,#88f59a 164px,#96f599 168px,#a1f697 172px,#a7f697 176px,#a6f697 180px,#9ff598 184px,#95f599 188px,#8bf59a 192px,#84f49b 196px,#80f49b 200px,#7ef49c 204px,#7df49c 208px,#7df49c 212px,#7cf49c 216px,#7cf49c 220px,#7cf49c 224px,#7cf49c 228px,#7cf49c 232px,#7cf49c 236px,#7cf49c 240px,#7cf49c 244px,#7cf49c 248px,#7cf49c 252px) -4px 0/252px 2px no-repeat"></div><div style="left:350px;top:120px;width:186px;height:2px;background:linear-gradient(90deg,#cff58f 0px,#daf48d 4px,#d0f58f 8px,#b1f695 12px,#87f49b 16px,#53e1a2 20px,#34c7a6 24px,#26b3a8 28px,#23aba7 32px,#23a9a7 36px,#23ada8 40px,#26b3a8 44px,#2cbba7 48px,#31c3a6 52px,#36caa5 56px,#3bd0a5 60px,#3ed5a4 64px,#3fd6a4 68px,#3dd4a4 72px,#39cea5 76px,#33c5a6 80px,#29b7a7 84px,#22a7a7 88px,#1e95a5 92px,#1b84a3 96px,#1a78a1 100px,#1973a0 104px,#1a77a1 108px,#1b85a3 112px,#1f9ba6 116px,#27b4a8 120px,#37cca5 124px,#47dba3 128px,#55e2a1 132px,#58e3a1 136px,#54e1a1 140px,#4fdfa2 144px,#4cdea2 148px,#50dfa2 152px,#59e4a1 156px,#68eb9f 160px,#78f29c 164px,#86f49b 168px,#92f599 172px,#98f598 176px,#99f598 180px,#94f599 184px,#8df59a 188px,#86f49b 192px,#81f49b 196px,#7ef49c 200px,#7df49c 204px,#7cf49c 208px,#7cf49c 212px,#7cf49c 216px,#7cf49c 220px,#7cf49c 224px,#7cf49c 228px,#7cf49c 232px,#7cf49c 236px,#7cf49c 240px,#7cf49c 244px,#7cf49c 248px,#7cf49c 252px) -4px 0/252px 2px no-repeat"></div><div style="left:350px;top:122px;width:186px;height:2px;background:linear-gradient(90deg,#caf590 0px,#d3f48e 4px,#c8f590 8px,#a9f696 12px,#7ff49c 16px,#49dca3 20px,#30c1a6 24px,#24afa8 28px,#22a7a7 32px,#22a7a7 36px,#23aca8 40px,#27b4a8 44px,#2dbda7 48px,#33c5a6 52px,#38cda5 56px,#3dd4a4 60px,#41d8a4 64px,#45daa3 68px,#44daa3 72px,#40d7a4 76px,#3ad0a5 80px,#33c5a6 84px,#28b6a7 88px,#22a5a7 92px,#1e94a5 96px,#1c87a3 100px,#1b80a2 104px,#1b82a3 108px,#1d8ea4 112px,#21a2a7 116px,#2bbaa7 120px,#3ad0a5 124px,#4cdea2 128px,#58e3a1 132px,#59e4a1 136px,#53e1a1 140px,#4adda3 144px,#44daa4 148px,#43daa4 152px,#4adda3 156px,#57e3a1 160px,#66ea9f 164px,#77f19d 168px,#83f49b 172px,#8af59a 176px,#8cf59a 180px,#89f59a 184px,#84f49b 188px,#80f49c 192px,#7df49c 196px,#7bf49c 200px,#7bf39c 204px,#7bf49c 208px,#7cf49c 212px,#7cf49c 216px,#7cf49c 220px,#7cf49c 224px,#7cf49c 228px,#7cf49c 232px,#7cf49c 236px,#7cf49c 240px,#7cf49c 244px,#7cf49c 248px,#7cf49c 252px) -4px 0/252px 2px no-repeat"></div><div style="left:352px;top:124px;width:184px;height:2px;background:linear-gradient(90deg,#c3f591 0px,#caf590 4px,#bef592 8px,#9ff598 12px,#73f09d 16px,#3fd6a4 20px,#2bb9a7 24px,#22a8a7 28px,#21a2a7 32px,#21a4a7 36px,#23aba7 40px,#27b4a8 44px,#2ebea7 48px,#34c7a6 52px,#3acfa5 56px,#3fd6a4 60px,#45daa3 64px,#4adda3 68px,#4bdda3 72px,#47dba3 76px,#3fd7a4 80px,#39cda5 84px,#2fc0a6 88px,#24b1a8 92px,#21a1a6 96px,#1e94a5 100px,#1d8da4 104px,#1d8ea4 108px,#1f99a6 112px,#23aba7 116px,#30c1a6 120px,#3ed5a4 124px,#52e0a2 128px,#5ce5a0 132px,#5be5a0 136px,#53e1a2 140px,#47dba3 144px,#3fd6a4 148px,#3dd4a4 152px,#3fd7a4 156px,#48dca3 160px,#57e3a1 164px,#66ea9f 168px,#73f09d 172px,#7bf49c 176px,#7ef49c 180px,#7df49c 184px,#7af39c 188px,#77f29d 192px,#76f19d 196px,#77f29d 200px,#78f29d 204px,#7af39c 208px,#7bf39c 212px,#7bf49c 216px,#7cf49c 220px,#7cf49c 224px,#7cf49c 228px,#7cf49c 232px,#7cf49c 236px,#7cf49c 240px,#7cf49c 244px,#7cf49c 248px,#7cf49c 252px) -6px 0/252px 2px no-repeat"></div><div style="left:352px;top:126px;width:186px;height:2px;background:linear-gradient(90deg,#bbf593 0px,#c1f592 4px,#b3f695 8px,#94f599 12px,#64e99f 16px,#38cca5 20px,#24b0a8 24px,#21a0a6 28px,#209ca6 32px,#21a0a6 36px,#22a8a7 40px,#26b3a8 44px,#2ebfa7 48px,#35c9a6 52px,#3bd1a5 56px,#41d8a4 60px,#49dca3 64px,#4ddea2 68px,#4fdfa2 72px,#4cdda2 76px,#43daa4 80px,#3cd2a5 84px,#33c6a6 88px,#2ab8a7 92px,#23aaa7 96px,#209fa6 100px,#1f99a6 104px,#209ba6 108px,#22a5a7 112px,#28b6a7 116px,#36c9a5 120px,#45daa3 124px,#58e3a1 128px,#60e7a0 132px,#5ee6a0 136px,#54e1a1 140px,#47dba3 144px,#3ed5a4 148px,#3bd1a5 152px,#3bd2a5 156px,#3fd7a4 160px,#4bdda3 164px,#57e3a1 168px,#62e89f 172px,#69eb9f 176px,#6ced9e 180px,#6ced9e 184px,#6bec9e 188px,#6cec9e 192px,#6eed9e 196px,#71ef9d 200px,#74f09d 204px,#77f29d 208px,#79f39c 212px,#7bf39c 216px,#7bf49c 220px,#7cf49c 224px,#7cf49c 228px,#7cf49c 232px,#7cf49c 236px,#7cf49c 240px,#7cf49c 244px,#7cf49c 248px,#7cf49c 252px) -6px 0/252px 2px no-repeat"></div><div style="left:352px;top:128px;width:186px;height:2px;background:linear-gradient(90deg,#b3f695 0px,#b6f694 4px,#a7f697 8px,#87f49b 12px,#53e1a1 16px,#30c1a6 20px,#22a5a7 24px,#1f97a5 28px,#1e94a5 32px,#1f9aa6 36px,#22a6a7 40px,#26b3a8 44px,#2fbfa6 48px,#37caa5 52px,#3dd3a4 56px,#44daa3 60px,#4cdda2 64px,#50dfa2 68px,#51e0a2 72px,#4ddea2 76px,#45daa3 80px,#3cd3a5 84px,#35c8a6 88px,#2cbba7 92px,#24afa8 96px,#22a7a7 100px,#21a3a7 104px,#22a6a7 108px,#24b0a8 112px,#2fc0a6 116px,#3cd2a5 120px,#4edfa2 124px,#5fe6a0 128px,#65e99f 132px,#62e89f 136px,#58e3a1 140px,#4adca3 144px,#3ed6a4 148px,#3bd1a5 152px,#3ad0a5 156px,#3dd3a4 160px,#42d9a4 164px,#4bdda3 168px,#52e1a2 172px,#57e3a1 176px,#59e4a1 180px,#5ae4a1 184px,#5be5a0 188px,#5ee6a0 192px,#64e99f 196px,#6aec9e 200px,#70ee9e 204px,#75f19d 208px,#78f29d 212px,#7af39c 216px,#7bf49c 220px,#7cf49c 224px,#7cf49c 228px,#7cf49c 232px,#7cf49c 236px,#7cf49c 240px,#7cf49c 244px,#7cf49c 248px,#7cf49c 252px) -6px 0/252px 2px no-repeat"></div><div style="left:352px;top:130px;width:186px;height:2px;background:linear-gradient(90deg,#abf696 0px,#abf696 4px,#9af598 8px,#78f29d 12px,#41d8a4 16px,#27b4a8 20px,#1f99a6 24px,#1c8ca4 28px,#1c8ba4 32px,#1e94a5 36px,#21a2a7 40px,#25b2a8 44px,#2fc0a6 48px,#38cca5 52px,#3ed6a4 56px,#47dba3 60px,#4edfa2 64px,#52e0a2 68px,#52e0a2 72px,#4ddea2 76px,#44daa4 80px,#3bd1a5 84px,#34c7a6 88px,#2cbca7 92px,#26b3a8 96px,#23ada8 100px,#23aca8 104px,#24b1a8 108px,#2cbca7 112px,#36caa5 116px,#43d9a4 120px,#58e3a1 124px,#65e99f 128px,#6aec9e 132px,#67ea9f 136px,#5de6a0 140px,#50dfa2 144px,#43d9a4 148px,#3dd4a4 152px,#3bd1a5 156px,#3cd2a5 160px,#3ed5a4 164px,#40d8a4 168px,#43d9a4 172px,#44daa3 176px,#44daa3 180px,#45daa3 184px,#49dca3 188px,#4fdfa2 192px,#58e3a1 196px,#61e8a0 200px,#6aec9e 204px,#71ef9d 208px,#76f19d 212px,#79f39c 216px,#7bf39c 220px,#7bf49c 224px,#7cf49c 228px,#7cf49c 232px,#7cf49c 236px,#7cf49c 240px,#7cf49c 244px,#7cf49c 248px,#7cf49c 252px) -6px 0/252px 2px no-repeat"></div><div style="left:352px;top:132px;width:188px;height:2px;background:linear-gradient(90deg,#a2f697 0px,#a0f598 4px,#8df59a 8px,#66ea9f 12px,#37cba5 16px,#22a7a7 20px,#1c8ca4 24px,#1b81a2 28px,#1b82a3 32px,#1d8da4 36px,#209fa6 40px,#25b1a8 44px,#30c1a6 48px,#39cea5 52px,#40d8a4 56px,#4bdda3 60px,#51e0a2 64px,#54e1a1 68px,#52e1a2 72px,#4cdea2 76px,#42d9a4 80px,#3ad0a5 84px,#33c5a6 88px,#2cbca7 92px,#27b4a8 96px,#25b1a8 100px,#26b3a8 104px,#2bbaa7 108px,#33c6a6 112px,#3dd4a4 116px,#4fdfa2 120px,#60e7a0 124px,#6cec9e 128px,#70ee9e 132px,#6ded9e 136px,#64e99f 140px,#58e3a1 144px,#4bdda3 148px,#41d8a4 152px,#3dd4a4 156px,#3cd3a5 160px,#3cd2a5 164px,#3bd1a5 168px,#3ad0a5 172px,#39cea5 176px,#38cda5 180px,#38cda5 184px,#3bd0a5 188px,#3fd6a4 192px,#4adda3 196px,#58e3a1 200px,#64e99f 204px,#6ded9e 208px,#74f09d 212px,#78f29d 216px,#7af39c 220px,#7bf49c 224px,#7cf49c 228px,#7cf49c 232px,#7cf49c 236px,#7cf49c 240px,#7cf49c 244px,#7cf49c 248px,#7cf49c 252px) -6px 0/252px 2px no-repeat"></div><div style="left:352px;top:134px;width:188px;height:2px;background:linear-gradient(90deg,#9af598 0px,#95f599 4px,#80f49b 8px,#53e1a1 12px,#2ebea7 16px,#1f99a6 20px,#1b80a2 24px,#1a76a0 28px,#1a79a1 32px,#1c87a3 36px,#209ba6 40px,#24b0a8 44px,#31c2a6 48px,#3bd1a5 52px,#44daa3 56px,#4edfa2 60px,#54e2a1 64px,#56e2a1 68px,#53e1a1 72px,#4cdda2 76px,#40d8a4 80px,#39cea5 84px,#32c4a6 88px,#2cbba7 92px,#28b6a7 96px,#28b5a7 100px,#2bb9a7 104px,#31c2a6 108px,#39cea5 112px,#46dba3 116px,#59e4a1 120px,#68eb9f 124px,#72ef9d 128px,#76f19d 132px,#73f09d 136px,#6cec9e 140px,#61e7a0 144px,#55e2a1 148px,#4adda3 152px,#41d8a4 156px,#3dd4a4 160px,#3ad0a5 164px,#37cba5 168px,#34c6a6 172px,#30c2a6 176px,#2ebea7 180px,#2ebea7 184px,#31c2a6 188px,#37cba5 192px,#3ed6a4 196px,#4edea2 200px,#5ee6a0 204px,#6aeb9e 208px,#72ef9d 212px,#77f29d 216px,#7af39c 220px,#7bf49c 224px,#7cf49c 228px,#7cf49c 232px,#7cf49c 236px,#7cf49c 240px,#7cf49c 244px,#7cf49c 248px,#7cf49c 252px) -6px 0/252px 2px no-repeat"></div><div style="left:352px;top:136px;width:188px;height:2px;background:linear-gradient(90deg,#93f599 0px,#8bf59a 4px,#72ef9d 8px,#41d9a4 12px,#25b1a8 16px,#1c8ca4 20px,#1974a0 24px,#186b9e 28px,#19709f 32px,#1b81a2 36px,#1f97a5 40px,#24afa8 44px,#32c4a6 48px,#3dd3a4 52px,#48dca3 56px,#52e1a2 60px,#58e3a1 64px,#59e3a1 68px,#55e2a1 72px,#4cdea2 76px,#40d8a4 80px,#39cda5 84px,#31c3a6 88px,#2cbba7 92px,#29b8a7 96px,#2ab9a7 100px,#2fc0a6 104px,#36caa5 108px,#3fd6a4 112px,#50e0a2 116px,#62e8a0 120px,#6fee9e 124px,#78f29d 128px,#7bf49c 132px,#79f39c 136px,#73f09d 140px,#6aec9e 144px,#5ee6a0 148px,#53e1a2 152px,#47dba3 156px,#3ed5a4 160px,#39cea5 164px,#33c5a6 168px,#2dbda7 172px,#28b6a7 176px,#24b1a8 180px,#24b0a8 184px,#28b5a7 188px,#2fc0a6 192px,#38cda5 196px,#45daa3 200px,#58e3a1 204px,#66ea9f 208px,#70ef9e 212px,#76f19d 216px,#79f39c 220px,#7bf49c 224px,#7cf49c 228px,#7cf49c 232px,#7cf49c 236px,#7cf49c 240px,#7cf49c 244px,#7cf49c 248px,#7cf49c 252px) -6px 0/252px 2px no-repeat"></div><div style="left:352px;top:138px;width:190px;height:2px;background:linear-gradient(90deg,#8cf59a 0px,#82f49b 4px,#64e99f 8px,#39cea5 12px,#22a5a7 16px,#1b81a2 20px,#18699e 24px,#16629a 28px,#18689e 32px,#1a7ba1 36px,#1e94a5 40px,#24afa8 44px,#33c5a6 48px,#3ed6a4 52px,#4ddea2 56px,#56e2a1 60px,#5be5a0 64px,#5ce5a0 68px,#57e3a1 72px,#4edfa2 76px,#41d8a4 80px,#39cea5 84px,#32c4a6 88px,#2ebea7 92px,#2cbba7 96px,#2ebea7 100px,#33c6a6 104px,#3bd1a5 108px,#48dca3 112px,#5ae4a1 116px,#69eb9e 120px,#75f19d 124px,#7df49c 128px,#7ff49c 132px,#7ef49c 136px,#7af39c 140px,#72ef9d 144px,#67ea9f 148px,#5ae4a1 152px,#4cdea2 156px,#3fd6a4 160px,#37cba5 164px,#2fc0a6 168px,#27b5a8 172px,#23aba8 176px,#22a6a7 180px,#22a5a7 184px,#23aba7 188px,#29b7a7 192px,#34c7a6 196px,#3fd7a4 200px,#54e1a1 204px,#64e99f 208px,#6fee9e 212px,#76f19d 216px,#79f39c 220px,#7bf49c 224px,#7cf49c 228px,#7cf49c 232px,#7cf49c 236px,#7cf49c 240px,#7cf49c 244px,#7cf49c 248px,#7cf49c 252px) -6px 0/252px 2px no-repeat"></div><div style="left:352px;top:140px;width:190px;height:2px;background:linear-gradient(90deg,#85f49b 0px,#79f29c 4px,#57e3a1 8px,#32c5a6 12px,#209ca6 16px,#1a78a1 20px,#16619a 24px,#145b96 28px,#16639b 32px,#1a77a1 36px,#1e92a5 40px,#24afa8 44px,#34c7a6 48px,#40d8a4 52px,#51e0a2 56px,#5ae4a0 60px,#5fe6a0 64px,#5fe6a0 68px,#5ae4a0 72px,#51e0a2 76px,#44daa3 80px,#3bd1a5 84px,#35c8a6 88px,#30c2a6 92px,#30c0a6 96px,#32c4a6 100px,#38cda5 104px,#40d8a4 108px,#52e0a2 112px,#63e89f 116px,#71ef9e 120px,#7bf49c 124px,#81f49b 128px,#83f49b 132px,#83f49b 136px,#7ff49c 140px,#78f29c 144px,#6ded9e 148px,#60e7a0 152px,#50dfa2 156px,#3fd6a4 160px,#36c9a5 164px,#2cbca7 168px,#24afa8 172px,#21a4a7 176px,#209da6 180px,#209da6 184px,#22a4a7 188px,#25b2a8 192px,#32c4a6 196px,#3ed5a4 200px,#53e1a1 204px,#64e99f 208px,#6fee9e 212px,#76f19d 216px,#79f39c 220px,#7bf49c 224px,#7cf49c 228px,#7cf49c 232px,#7cf49c 236px,#7cf49c 240px,#7cf49c 244px,#7cf49c 248px,#7cf49c 252px) -6px 0/252px 2px no-repeat"></div><div style="left:352px;top:142px;width:190px;height:2px;background:linear-gradient(90deg,#80f49c 0px,#70ee9e 4px,#4ddea2 8px,#2dbda7 12px,#1e94a5 16px,#1971a0 20px,#155c96 24px,#135693 28px,#155f98 32px,#1974a0 36px,#1e92a5 40px,#24b0a8 44px,#36c9a5 48px,#44daa3 52px,#55e2a1 56px,#5fe6a0 60px,#63e89f 64px,#63e89f 68px,#5ee6a0 72px,#56e2a1 76px,#4adca3 80px,#3ed5a4 84px,#38cda5 88px,#35c8a6 92px,#34c8a6 96px,#38cca5 100px,#3dd4a4 104px,#4bdda3 108px,#5ce5a0 112px,#6bec9e 116px,#78f29d 120px,#80f49c 124px,#85f49b 128px,#87f49b 132px,#87f49b 136px,#84f49b 140px,#7ef49c 144px,#73f09d 148px,#64e99f 152px,#52e0a2 156px,#3fd6a4 160px,#34c7a6 164px,#2ab8a7 168px,#23aaa7 172px,#219fa6 176px,#1f99a6 180px,#1f9aa6 184px,#21a3a7 188px,#25b2a8 192px,#33c5a6 196px,#40d8a4 200px,#56e2a1 204px,#67ea9f 208px,#71ef9d 212px,#77f29d 216px,#7af39c 220px,#7bf49c 224px,#7cf49c 228px,#7cf49c 232px,#7cf49c 236px,#7cf49c 240px,#7cf49c 244px,#7cf49c 248px,#7cf49c 252px) -6px 0/252px 2px no-repeat"></div><div style="left:352px;top:144px;width:192px;height:2px;background:linear-gradient(90deg,#7bf49c 0px,#69eb9f 4px,#45dba3 8px,#2ab8a7 12px,#1d90a5 16px,#196d9f 20px,#145995 24px,#125491 28px,#155e98 32px,#1974a0 36px,#1e93a5 40px,#25b2a8 44px,#38cca5 48px,#49dca3 52px,#59e4a1 56px,#62e89f 60px,#66ea9f 64px,#66ea9f 68px,#63e89f 72px,#5be5a0 76px,#50e0a2 80px,#45daa3 84px,#3dd4a4 88px,#3bd0a5 92px,#3bd0a5 96px,#3ed5a4 100px,#47dba3 104px,#56e2a1 108px,#66ea9f 112px,#74f09d 116px,#7ef49c 120px,#85f49b 124px,#89f59a 128px,#8bf59a 132px,#8bf59a 136px,#88f49b 140px,#82f49b 144px,#77f29d 148px,#67ea9f 152px,#53e1a1 156px,#3ed5a4 160px,#33c6a6 164px,#28b6a7 168px,#22a8a7 172px,#209ea6 176px,#1f9aa6 180px,#209da6 184px,#22a7a7 188px,#2ab8a7 192px,#38cca5 196px,#49dca3 200px,#5ee6a0 204px,#6ced9e 208px,#75f19d 212px,#79f29c 216px,#7bf39c 220px,#7cf49c 224px,#7cf49c 228px,#7cf49c 232px,#7cf49c 236px,#7cf49c 240px,#7cf49c 244px,#7cf49c 248px,#7cf49c 252px) -6px 0/252px 2px no-repeat"></div><div style="left:352px;top:146px;width:192px;height:2px;background:linear-gradient(90deg,#77f29d 0px,#64e99f 4px,#41d8a4 8px,#28b6a7 12px,#1d8ea4 16px,#196d9f 20px,#145a95 24px,#135592 28px,#165f98 32px,#1a76a1 36px,#1e96a5 40px,#28b5a7 44px,#3acfa5 48px,#4ddea2 52px,#5de6a0 56px,#66ea9f 60px,#6aec9e 64px,#6aec9e 68px,#67ea9f 72px,#61e7a0 76px,#58e3a1 80px,#4fdfa2 84px,#46dba3 88px,#42d9a4 92px,#43d9a4 96px,#49dca3 100px,#54e1a1 104px,#62e8a0 108px,#70ee9e 112px,#7cf49c 116px,#84f49b 120px,#8af59a 124px,#8ef59a 128px,#90f599 132px,#90f59a 136px,#8cf59a 140px,#86f49b 144px,#7bf49c 148px,#69eb9e 152px,#54e1a1 156px,#3ed5a4 160px,#32c4a6 164px,#27b5a8 168px,#22a9a7 172px,#21a1a6 176px,#209fa6 180px,#22a5a7 184px,#26b2a8 188px,#33c5a6 192px,#42d9a4 196px,#5be5a0 200px,#6ded9e 204px,#76f19d 208px,#7af39c 212px,#7cf49c 216px,#7cf49c 220px,#7cf49c 224px,#7cf49c 228px,#7cf49c 232px,#7cf49c 236px,#7cf49c 240px,#7cf49c 244px,#7cf49c 248px,#7cf49c 252px) -6px 0/252px 2px no-repeat"></div><div style="left:352px;top:148px;width:192px;height:2px;background:linear-gradient(90deg,#74f09d 0px,#61e7a0 4px,#3fd7a4 8px,#28b6a7 12px,#1d90a5 16px,#19709f 20px,#155d97 24px,#145a95 28px,#17649b 32px,#1a7ba1 36px,#1f9aa6 40px,#2bbaa7 44px,#3cd3a5 48px,#52e0a2 52px,#61e8a0 56px,#6aeb9e 60px,#6eed9e 64px,#6eed9e 68px,#6cec9e 72px,#67ea9f 76px,#60e7a0 80px,#59e4a1 84px,#53e1a1 88px,#50dfa2 92px,#51e0a2 96px,#57e3a1 100px,#62e8a0 104px,#6eed9e 108px,#7af39c 112px,#84f49b 116px,#8bf59a 120px,#91f599 124px,#95f599 128px,#96f599 132px,#96f599 136px,#92f599 140px,#8bf59a 144px,#7ff49c 148px,#6ced9e 152px,#54e1a1 156px,#3dd4a4 160px,#32c3a6 164px,#28b5a7 168px,#23aba7 172px,#22a7a7 176px,#22a9a7 180px,#26b3a8 184px,#32c4a6 188px,#42d9a4 192px,#5fe7a0 196px,#75f19d 200px,#80f49c 204px,#83f49b 208px,#82f49b 212px,#80f49c 216px,#7ef49c 220px,#7df49c 224px,#7df49c 228px,#7cf49c 232px,#7cf49c 236px,#7cf49c 240px,#7cf49c 244px,#7cf49c 248px,#7cf49c 252px) -6px 0/252px 2px no-repeat"></div><div style="left:354px;top:150px;width:192px;height:2px;background:linear-gradient(90deg,#72f09d 0px,#60e7a0 4px,#40d7a4 8px,#2ab8a7 12px,#1e95a5 16px,#1a76a1 20px,#17649b 24px,#166199 28px,#186b9f 32px,#1b83a3 36px,#21a1a6 40px,#2fbfa6 44px,#3fd7a4 48px,#57e3a1 52px,#65e99f 56px,#6ded9e 60px,#71ef9e 64px,#71ef9d 68px,#70ee9e 72px,#6ded9e 76px,#68eb9f 80px,#63e89f 84px,#5fe6a0 88px,#5de6a0 92px,#60e7a0 96px,#66ea9f 100px,#6fee9e 104px,#7af39c 108px,#84f49b 112px,#8cf59a 116px,#93f599 120px,#99f598 124px,#9df598 128px,#9ef598 132px,#9df598 136px,#99f598 140px,#90f599 144px,#84f49b 148px,#70ee9e 152px,#56e2a1 156px,#3dd4a4 160px,#32c3a6 164px,#29b6a7 168px,#24afa8 172px,#24afa8 176px,#29b7a7 180px,#34c6a6 184px,#46dba3 188px,#69eb9f 192px,#84f49b 196px,#92f599 200px,#95f599 204px,#91f599 208px,#8af59a 212px,#84f49b 216px,#80f49b 220px,#7ef49c 224px,#7df49c 228px,#7df49c 232px,#7cf49c 236px,#7cf49c 240px,#7cf49c 244px,#7cf49c 248px,#7cf49c 252px) -8px 0/252px 2px no-repeat"></div><div style="left:354px;top:152px;width:192px;height:2px;background:linear-gradient(90deg,#71ef9d 0px,#60e7a0 4px,#42d9a4 8px,#2dbca7 12px,#209ca6 16px,#1b7fa2 20px,#196e9f 24px,#186b9e 28px,#1a76a0 32px,#1c8ca4 36px,#23a9a7 40px,#33c5a6 44px,#45daa3 48px,#5be5a0 52px,#68eb9f 56px,#70ee9e 60px,#73f09d 64px,#74f09d 68px,#74f09d 72px,#72ef9d 76px,#6fee9e 80px,#6ced9e 84px,#6aec9e 88px,#6aec9e 92px,#6ded9e 96px,#73f09d 100px,#7cf49c 104px,#84f49b 108px,#8df59a 112px,#95f599 116px,#9df598 120px,#a2f697 124px,#a6f697 128px,#a8f697 132px,#a6f697 136px,#a1f697 140px,#98f599 144px,#89f59a 148px,#74f09d 152px,#58e3a1 156px,#3ed5a4 160px,#32c4a6 164px,#2ab9a7 168px,#28b5a7 172px,#2bbaa7 176px,#34c7a6 180px,#48dca3 184px,#71ef9e 188px,#93f599 192px,#aaf696 196px,#b3f695 200px,#aff695 204px,#a3f697 208px,#95f599 212px,#8af59a 216px,#83f49b 220px,#7ff49c 224px,#7df49c 228px,#7df49c 232px,#7cf49c 236px,#7cf49c 240px,#7cf49c 244px,#7cf49c 248px,#7cf49c 252px) -8px 0/252px 2px no-repeat"></div><div style="left:354px;top:154px;width:194px;height:2px;background:linear-gradient(90deg,#71ef9d 0px,#61e8a0 4px,#46dba3 8px,#31c2a6 12px,#22a5a7 16px,#1c8ba4 20px,#1a7ba1 24px,#1a78a1 28px,#1b82a3 32px,#1f98a5 36px,#25b2a8 40px,#37cca5 44px,#4bdda2 48px,#5fe7a0 52px,#6bec9e 56px,#72ef9d 60px,#75f19d 64px,#77f19d 68px,#77f29d 72px,#76f19d 76px,#75f19d 80px,#74f09d 84px,#73f09d 88px,#75f19d 92px,#79f29c 96px,#7ef49c 100px,#85f49b 104px,#8ef59a 108px,#97f599 112px,#a0f598 116px,#a8f697 120px,#aef696 124px,#b2f695 128px,#b4f694 132px,#b2f695 136px,#acf696 140px,#a1f697 144px,#91f599 148px,#7bf49c 152px,#5ce5a0 156px,#3fd7a4 160px,#33c6a6 164px,#2dbda7 168px,#2dbca7 172px,#34c6a6 176px,#44daa4 180px,#6fee9e 184px,#9af598 188px,#bff592 192px,#d7f48d 196px,#dbf48d 200px,#cff58f 204px,#b8f694 208px,#a2f697 212px,#91f599 216px,#86f49b 220px,#81f49b 224px,#7ef49c 228px,#7df49c 232px,#7df49c 236px,#7cf49c 240px,#7cf49c 244px,#7cf49c 248px,#7cf49c 252px) -8px 0/252px 2px no-repeat"></div><div style="left:354px;top:156px;width:194px;height:2px;background:linear-gradient(90deg,#72ef9d 0px,#64e99f 4px,#4cdda2 8px,#36c9a5 12px,#24afa8 16px,#1f98a6 20px,#1c89a4 24px,#1c87a3 28px,#1d91a5 32px,#22a4a7 36px,#2cbca7 40px,#3cd2a5 44px,#51e0a2 48px,#63e89f 52px,#6ded9e 56px,#73f09d 60px,#76f19d 64px,#78f29d 68px,#79f39c 72px,#79f39c 76px,#7af39c 80px,#7af39c 84px,#7bf49c 88px,#7ef49c 92px,#82f49b 96px,#87f49b 100px,#8ff59a 104px,#98f598 108px,#a2f697 112px,#acf696 116px,#b6f694 120px,#bdf593 124px,#c2f592 128px,#c3f591 132px,#c0f592 136px,#b9f593 140px,#acf696 144px,#9af598 148px,#83f49b 152px,#63e89f 156px,#43daa4 160px,#36caa5 164px,#30c2a6 168px,#32c5a6 172px,#3dd4a4 176px,#62e89f 180px,#93f599 184px,#c4f591 188px,#e5f08a 192px,#efea87 196px,#efea87 200px,#e6ef8a 204px,#d1f58f 208px,#b0f695 212px,#98f598 216px,#8af59a 220px,#82f49b 224px,#7ff49c 228px,#7df49c 232px,#7df49c 236px,#7cf49c 240px,#7cf49c 244px,#7cf49c 248px,#7cf49c 252px) -8px 0/252px 2px no-repeat"></div><div style="left:354px;top:158px;width:194px;height:2px;background:linear-gradient(90deg,#72ef9d 0px,#66ea9f 4px,#51e0a2 8px,#3ad0a5 12px,#2bbaa7 16px,#22a6a7 20px,#1f99a6 24px,#1f97a5 28px,#21a0a6 32px,#24b0a8 36px,#32c5a6 40px,#40d8a4 44px,#56e2a1 48px,#65e99f 52px,#6eed9e 56px,#73f09d 60px,#77f19d 64px,#79f29c 68px,#7af39c 72px,#7cf49c 76px,#7df49c 80px,#7ef49c 84px,#81f49b 88px,#84f49b 92px,#89f59a 96px,#90f59a 100px,#99f598 104px,#a3f697 108px,#aff695 112px,#bbf593 116px,#c6f591 120px,#cff58f 124px,#d4f48e 128px,#d5f48e 132px,#d2f48e 136px,#c9f590 140px,#baf593 144px,#a6f697 148px,#8df59a 152px,#6ded9e 156px,#4cdea2 160px,#3acfa5 164px,#35c9a6 168px,#39cfa5 172px,#50dfa2 176px,#80f49b 180px,#b6f694 184px,#e6ef8a 188px,#f4de82 192px,#f6d17d 196px,#f5d37e 200px,#f3e484 204px,#e3f18a 208px,#c0f592 212px,#a1f697 216px,#8ef59a 220px,#84f49b 224px,#7ff49c 228px,#7ef49c 232px,#7df49c 236px,#7cf49c 240px,#7cf49c 244px,#7cf49c 248px,#7cf49c 252px) -8px 0/252px 2px no-repeat"></div><div style="left:354px;top:160px;width:196px;height:2px;background:linear-gradient(90deg,#73f09d 0px,#68eb9f 4px,#56e2a1 8px,#3fd6a4 12px,#32c4a6 16px,#26b3a8 20px,#22a8a7 24px,#22a6a7 28px,#23ada8 32px,#2cbba7 36px,#38cca5 40px,#46dba3 44px,#58e3a1 48px,#65e99f 52px,#6ded9e 56px,#72ef9d 60px,#75f19d 64px,#78f29d 68px,#7bf39c 72px,#7df49c 76px,#7ff49c 80px,#81f49b 84px,#85f49b 88px,#89f59a 92px,#90f59a 96px,#98f599 100px,#a2f697 104px,#aff695 108px,#bef592 112px,#ccf590 116px,#daf48d 120px,#e0f38b 124px,#e3f18b 128px,#e3f18a 132px,#e1f28b 136px,#dcf48c 140px,#cbf590 144px,#b5f694 148px,#99f598 152px,#7bf49c 156px,#59e4a1 160px,#40d8a4 164px,#3cd2a5 168px,#43d9a4 172px,#67ea9f 176px,#9af598 180px,#daf48d 184px,#f3e083 188px,#f5bc79 192px,#f4a576 196px,#f4ae77 200px,#f6d07d 204px,#eeea87 208px,#d1f58f 212px,#a9f696 216px,#92f599 220px,#86f49b 224px,#80f49b 228px,#7ef49c 232px,#7df49c 236px,#7df49c 240px,#7cf49c 244px,#7cf49c 248px,#7cf49c 252px) -8px 0/252px 2px no-repeat"></div><div style="left:354px;top:162px;width:196px;height:2px;background:linear-gradient(90deg,#73f09d 0px,#69eb9f 4px,#5ae4a1 8px,#45daa3 12px,#37cba5 16px,#2dbda7 20px,#27b4a8 24px,#26b3a8 28px,#2ab8a7 32px,#32c3a6 36px,#3bd1a5 40px,#48dca3 44px,#57e3a1 48px,#62e89f 52px,#69eb9e 56px,#6eee9e 60px,#72f09d 64px,#76f19d 68px,#79f39c 72px,#7df49c 76px,#80f49b 80px,#84f49b 84px,#88f59a 88px,#8ef59a 92px,#96f599 96px,#a0f697 100px,#adf696 104px,#bdf593 108px,#cff58f 112px,#dff38c 116px,#e5f08a 120px,#eaed88 124px,#edeb88 128px,#edeb87 132px,#ebec88 136px,#e6ef8a 140px,#def48c 144px,#c6f591 148px,#a9f696 152px,#8af59a 156px,#6aec9e 160px,#51e0a2 164px,#49dca3 168px,#57e3a1 172px,#7ff49c 176px,#b4f694 180px,#eaed88 184px,#f6c77b 188px,#f09474 192px,#e97f72 196px,#ed8a73 200px,#f5b078 204px,#f3df83 208px,#dff38c 212px,#b2f695 216px,#96f599 220px,#87f49b 224px,#81f49b 228px,#7ef49c 232px,#7df49c 236px,#7df49c 240px,#7cf49c 244px,#7cf49c 248px,#7cf49c 252px) -8px 0/252px 2px no-repeat"></div><div style="left:354px;top:164px;width:196px;height:2px;background:linear-gradient(90deg,#72ef9d 0px,#69eb9f 4px,#5be4a0 8px,#48dca3 12px,#3bd0a5 16px,#32c5a6 20px,#2dbda7 24px,#2cbca7 28px,#2fc0a6 32px,#35c8a6 36px,#3cd2a5 40px,#46dba3 44px,#52e0a2 48px,#5be5a0 52px,#62e89f 56px,#68eb9f 60px,#6ded9e 64px,#72ef9d 68px,#77f19d 72px,#7cf49c 76px,#80f49b 80px,#85f49b 84px,#8bf59a 88px,#93f599 92px,#9cf598 96px,#a9f696 100px,#b9f593 104px,#ccf590 108px,#dff38c 112px,#e8ee89 116px,#f0e987 120px,#f3e384 124px,#f3e083 128px,#f3e083 132px,#f3e484 136px,#efea87 140px,#e7ef89 144px,#dbf48d 148px,#bcf593 152px,#9cf598 156px,#7ff49c 160px,#67ea9f 164px,#5fe6a0 168px,#6fee9e 172px,#94f599 176px,#cff58f 180px,#f3e183 184px,#f4a476 188px,#db6e6e 192px,#c35168 196px,#d2636c 200px,#f09474 204px,#f5d27d 208px,#e6ef8a 212px,#baf593 216px,#9af598 220px,#89f59a 224px,#82f49b 228px,#7ff49c 232px,#7df49c 236px,#7df49c 240px,#7cf49c 244px,#7cf49c 248px,#7cf49c 252px) -8px 0/252px 2px no-repeat"></div><div style="left:354px;top:166px;width:198px;height:2px;background:linear-gradient(90deg,#70ee9e 0px,#67ea9f 4px,#59e4a1 8px,#47dba3 12px,#3bd1a5 16px,#34c7a6 20px,#30c1a6 24px,#2fbfa6 28px,#30c2a6 32px,#34c7a6 36px,#39cfa5 40px,#3fd6a4 44px,#47dba3 48px,#50dfa2 52px,#57e3a1 56px,#5ee6a0 60px,#64e99f 64px,#6bec9e 68px,#72ef9d 72px,#79f29c 76px,#7ff49c 80px,#86f49b 84px,#8df59a 88px,#97f599 92px,#a3f697 96px,#b2f695 100px,#c6f591 104px,#ddf48c 108px,#e8ee89 112px,#f2e886 116px,#f4dc81 120px,#f5d37e 124px,#f6cf7d 128px,#f6d07d 132px,#f5d57f 136px,#f4de82 140px,#f1e986 144px,#e6ef8a 148px,#d2f48e 152px,#b1f695 156px,#94f599 160px,#80f49c 164px,#79f39c 168px,#86f49b 172px,#aaf696 176px,#e2f18b 180px,#f6d17d 184px,#ed8973 188px,#b74964 192px,#932f58 196px,#ac4160 200px,#e87d71 204px,#f5c17a 208px,#ebec88 212px,#c2f592 216px,#9df598 220px,#8bf59a 224px,#82f49b 228px,#7ff49c 232px,#7ef49c 236px,#7df49c 240px,#7df49c 244px,#7cf49c 248px,#7cf49c 252px) -8px 0/252px 2px no-repeat"></div><div style="left:356px;top:168px;width:196px;height:2px;background:linear-gradient(90deg,#6ded9e 0px,#62e89f 4px,#53e1a1 8px,#41d9a4 12px,#39cda5 16px,#32c5a6 20px,#2fbfa6 24px,#2dbda7 28px,#2ebea7 32px,#30c1a6 36px,#33c6a6 40px,#37cca5 44px,#3bd1a5 48px,#3fd7a4 52px,#46dba3 56px,#4fdfa2 60px,#58e3a1 64px,#61e7a0 68px,#6aec9e 72px,#73f09d 76px,#7df49c 80px,#86f49b 84px,#8ff59a 88px,#9bf598 92px,#a9f696 96px,#bcf593 100px,#d4f48e 104px,#e5f08a 108px,#f1e886 112px,#f4d980 116px,#f6ca7b 120px,#f5bb79 124px,#f5b478 128px,#f5b679 132px,#f5c07a 136px,#f6cf7d 140px,#f4dc81 144px,#efea87 148px,#e3f18b 152px,#c9f590 156px,#acf696 160px,#98f599 164px,#91f599 168px,#9df598 172px,#c1f592 176px,#ecec88 180px,#f5bc79 184px,#dd706e 188px,#912e58 192px,#6c1c46 196px,#892955 200px,#d4666c 204px,#f5b278 208px,#efea87 212px,#c8f590 216px,#a0f697 220px,#8cf59a 224px,#83f49b 228px,#7ff49c 232px,#7ef49c 236px,#7df49c 240px,#7df49c 244px,#7cf49c 248px,#7cf49c 252px) -10px 0/252px 2px no-repeat"></div><div style="left:356px;top:170px;width:196px;height:2px;background:linear-gradient(90deg,#68eb9f 0px,#5be5a0 4px,#49dca3 8px,#3bd1a5 12px,#32c5a6 16px,#2dbca7 20px,#29b8a7 24px,#28b5a7 28px,#27b5a8 32px,#28b6a7 36px,#2ab8a7 40px,#2cbca7 44px,#30c1a6 48px,#34c7a6 52px,#39cda5 56px,#3ed5a4 60px,#47dba3 64px,#53e1a1 68px,#60e7a0 72px,#6ced9e 76px,#79f39c 80px,#85f49b 84px,#90f599 88px,#9ff598 92px,#b0f695 96px,#c7f591 100px,#e0f38b 104px,#edeb88 108px,#f4dc81 112px,#f6c87b 116px,#f5af78 120px,#f39f75 124px,#f19975 128px,#f29c75 132px,#f4a676 136px,#f5b879 140px,#f6ce7c 144px,#f4de82 148px,#edeb88 152px,#e0f38b 156px,#c7f591 160px,#b2f695 164px,#aaf696 168px,#b5f694 172px,#d8f48d 176px,#f2e585 180px,#f4a977 184px,#cb5b6a 188px,#76214b 192px,#521239 196px,#711f49 200px,#c75669 204px,#f4a877 208px,#f2e786 212px,#ccf590 216px,#a2f697 220px,#8df59a 224px,#84f49b 228px,#80f49c 232px,#7ef49c 236px,#7df49c 240px,#7df49c 244px,#7cf49c 248px,#7cf49c 252px) -10px 0/252px 2px no-repeat"></div><div style="left:356px;top:172px;width:198px;height:2px;background:linear-gradient(90deg,#62e89f 0px,#52e0a2 4px,#3ed5a4 8px,#32c5a6 12px,#29b7a7 16px,#24afa8 20px,#23aba7 24px,#22a8a7 28px,#22a6a7 32px,#22a5a7 36px,#22a6a7 40px,#22a8a7 44px,#23ada8 48px,#26b3a8 52px,#2cbba7 56px,#33c5a6 60px,#3acfa5 64px,#43d9a4 68px,#53e1a1 72px,#64e99f 76px,#74f09d 80px,#83f49b 84px,#92f599 88px,#a2f697 92px,#b8f694 96px,#d2f48e 100px,#e6ef8a 104px,#f3e484 108px,#f6cf7c 112px,#f5af78 116px,#f09674 120px,#ec8673 124px,#ea8072 128px,#eb8472 132px,#ee9074 136px,#f3a176 140px,#f5b879 144px,#f6d17d 148px,#f3e183 152px,#ebec88 156px,#e0f38b 160px,#cef58f 164px,#c5f591 168px,#cef58f 172px,#e4f08a 176px,#f4db81 180px,#f29d75 184px,#be4e66 188px,#671a44 192px,#470f32 196px,#661a43 200px,#c04f67 204px,#f4a476 208px,#f2e585 212px,#cef58f 216px,#a4f697 220px,#8ef59a 224px,#84f49b 228px,#80f49c 232px,#7ef49c 236px,#7df49c 240px,#7df49c 244px,#7df49c 248px,#7cf49c 252px) -10px 0/252px 2px no-repeat"></div><div style="left:356px;top:174px;width:198px;height:2px;background:linear-gradient(90deg,#5be4a0 0px,#46dba3 4px,#36c9a5 8px,#27b5a8 12px,#22a5a7 16px,#209da6 20px,#1f99a6 24px,#1f97a5 28px,#1e94a5 32px,#1d91a5 36px,#1d90a5 40px,#1e92a5 44px,#1f96a5 48px,#209da6 52px,#22a7a7 56px,#26b2a8 60px,#2fc0a6 64px,#39cda5 68px,#45daa3 72px,#59e4a1 76px,#6ded9e 80px,#81f49b 84px,#92f599 88px,#a6f697 92px,#bff592 96px,#def48c 100px,#edeb88 104px,#f4d980 108px,#f5bb79 112px,#f19975 116px,#e97f72 120px,#d86a6d 124px,#d2626c 128px,#d7696d 132px,#e57971 136px,#ee8d73 140px,#f4a376 144px,#f5bd7a 148px,#f5d37e 152px,#f3e384 156px,#ebec88 160px,#e3f18a 164px,#dff38c 168px,#e1f28b 172px,#eceb88 176px,#f5d37e 180px,#f09674 184px,#b84a64 188px,#651943 192px,#480f33 196px,#681a44 200px,#c25167 204px,#f4a476 208px,#f2e685 212px,#cff58f 216px,#a4f697 220px,#8ef59a 224px,#84f49b 228px,#80f49b 232px,#7ef49c 236px,#7df49c 240px,#7df49c 244px,#7df49c 248px,#7cf49c 252px) -10px 0/252px 2px no-repeat"></div><div style="left:356px;top:176px;width:198px;height:2px;background:linear-gradient(90deg,#52e1a2 0px,#3cd3a5 4px,#2cbba7 8px,#21a3a7 12px,#1d91a5 16px,#1c88a4 20px,#1b85a3 24px,#1b83a3 28px,#1b80a2 32px,#1a7ca2 36px,#1a7aa1 40px,#1a7ba1 44px,#1b80a2 48px,#1c87a4 52px,#1e92a5 56px,#21a0a6 60px,#24b0a8 64px,#2fc0a6 68px,#3bd1a5 72px,#4fdfa2 76px,#67ea9f 80px,#7ff49c 84px,#94f599 88px,#abf696 92px,#c7f591 96px,#e3f18b 100px,#f2e786 104px,#f6cf7c 108px,#f4a676 112px,#eb8573 116px,#d3646c 120px,#bf4e66 124px,#b64864 128px,#bf4f66 132px,#d0606b 136px,#e57a71 140px,#ef9174 144px,#f4a877 148px,#f5c17a 152px,#f5d57f 156px,#f3e284 160px,#eeea87 164px,#eaed88 168px,#ebec88 172px,#f2e685 176px,#f6cc7c 180px,#ef9274 184px,#bb4c65 188px,#6f1e48 192px,#531239 196px,#76214b 200px,#cb5a6a 204px,#f4aa77 208px,#f2e886 212px,#cdf58f 216px,#a4f697 220px,#8ff59a 224px,#85f49b 228px,#80f49b 232px,#7ff49c 236px,#7ef49c 240px,#7df49c 244px,#7df49c 248px,#7cf49c 252px) -10px 0/252px 2px no-repeat"></div><div style="left:356px;top:178px;width:200px;height:2px;background:linear-gradient(90deg,#4adda3 0px,#36caa5 4px,#23ada8 8px,#1d90a5 12px,#1a7ca2 16px,#1974a0 20px,#1972a0 24px,#1971a0 28px,#196e9f 32px,#18699e 36px,#18679d 40px,#18679d 44px,#186b9f 48px,#1974a0 52px,#1b80a2 56px,#1d8fa5 60px,#21a1a6 64px,#27b4a8 68px,#35c8a6 72px,#45daa3 76px,#61e7a0 80px,#7df49c 84px,#95f599 88px,#b0f695 92px,#d0f58f 96px,#e8ee89 100px,#f3de82 104px,#f5bf7a 108px,#f09674 112px,#dc6f6e 116px,#bc4c65 120px,#a1395d 124px,#99335a 128px,#a33a5d 132px,#ba4b65 136px,#d2636c 140px,#ea7f72 144px,#f09574 148px,#f4ab77 152px,#f5c27a 156px,#f5d37e 160px,#f4de82 164px,#f2e585 168px,#f2e685 172px,#f4dd82 176px,#f6c57b 180px,#ef9274 184px,#c55468 188px,#832651 192px,#6b1c46 196px,#8e2c57 200px,#d86b6d 204px,#f5b578 208px,#efea87 212px,#caf590 216px,#a3f697 220px,#8ff59a 224px,#85f49b 228px,#81f49b 232px,#7ff49c 236px,#7ef49c 240px,#7df49c 244px,#7df49c 248px,#7cf49c 252px) -10px 0/252px 2px no-repeat"></div><div style="left:356px;top:180px;width:200px;height:2px;background:linear-gradient(90deg,#43d9a4 0px,#30c1a6 4px,#209fa6 8px,#1b7fa2 12px,#18699e 16px,#16629a 20px,#16629a 24px,#16639a 28px,#166099 32px,#145c96 36px,#145994 40px,#145994 44px,#155d97 48px,#17659c 52px,#1972a0 56px,#1b82a3 60px,#1e95a5 64px,#23aaa7 68px,#2fc0a6 72px,#3fd6a4 76px,#5de6a0 80px,#7df49c 84px,#98f599 88px,#b6f694 92px,#d9f48d 96px,#edeb88 100px,#f5d67f 104px,#f5af78 108px,#ec8773 112px,#cb5b6a 116px,#a33a5d 120px,#882854 124px,#802550 128px,#8a2955 132px,#a1395d 136px,#c04f67 140px,#d86a6d 144px,#eb8472 148px,#f19775 152px,#f4ab77 156px,#f5bf7a 160px,#f6d07d 164px,#f5d780 168px,#f4da81 172px,#f5d57f 176px,#f5be7a 180px,#f09574 184px,#d0616b 188px,#9d365c 192px,#8c2a56 196px,#ae4361 200px,#ea8072 204px,#f5c27a 208px,#ecec88 212px,#c6f591 216px,#a1f697 220px,#8ff59a 224px,#85f49b 228px,#81f49b 232px,#7ff49c 236px,#7ef49c 240px,#7df49c 244px,#7df49c 248px,#7df49c 252px) -10px 0/252px 2px no-repeat"></div><div style="left:356px;top:182px;width:200px;height:2px;background:linear-gradient(90deg,#3ed6a4 0px,#2ab9a7 4px,#1e93a5 8px,#19709f 12px,#145b96 16px,#135592 20px,#135793 24px,#145994 28px,#135793 32px,#125390 36px,#11508e 40px,#11508e 44px,#125491 48px,#155c97 52px,#18689e 56px,#1a7aa1 60px,#1d8ea4 64px,#22a4a7 68px,#2cbca7 72px,#3dd3a4 76px,#5ce5a0 80px,#7ef49c 84px,#9cf598 88px,#bdf593 92px,#e0f38b 96px,#f2e886 100px,#f6ce7c 104px,#f3a176 108px,#e37870 112px,#ba4b65 116px,#8e2b57 120px,#731f49 124px,#6b1c45 128px,#74204a 132px,#8a2955 136px,#a83e5f 140px,#c65469 144px,#db6d6e 148px,#eb8472 152px,#f09574 156px,#f4a676 160px,#f5b879 164px,#f6c67b 168px,#f6ce7c 172px,#f6ca7b 176px,#f5b879 180px,#f19775 184px,#dd706f 188px,#bc4c65 192px,#b14462 196px,#ce5e6b 200px,#ef9374 204px,#f6d07d 208px,#e8ee89 212px,#c1f592 216px,#a0f697 220px,#8ff59a 224px,#86f49b 228px,#82f49b 232px,#80f49c 236px,#7ef49c 240px,#7ef49c 244px,#7df49c 248px,#7df49c 252px) -10px 0/252px 2px no-repeat"></div><div style="left:356px;top:184px;width:202px;height:2px;background:linear-gradient(90deg,#3dd3a4 0px,#27b4a8 4px,#1c8aa4 8px,#17659c 12px,#11518f 16px,#104b8b 20px,#11508e 24px,#125491 28px,#125391 32px,#11508e 36px,#104c8c 40px,#104d8c 44px,#11518f 48px,#145a95 52px,#17669c 56px,#1a77a1 60px,#1c8ba4 64px,#21a3a7 68px,#2cbba7 72px,#3dd3a4 76px,#5ee6a0 80px,#82f49b 84px,#a2f697 88px,#c6f591 92px,#e5f08a 96px,#f3e183 100px,#f5c27a 104px,#f09674 108px,#d7696d 112px,#a83e5f 116px,#7d234e 120px,#621841 124px,#59143c 128px,#611840 132px,#75204a 136px,#8f2c57 140px,#ab4060 144px,#c65468 148px,#d7696d 152px,#e97e72 156px,#ee8f74 160px,#f29e75 164px,#f4ad77 168px,#f5b979 172px,#f5bb79 176px,#f5b078 180px,#f19975 184px,#e97f72 188px,#d3646c 192px,#d0616b 196px,#e77c71 200px,#f4a776 204px,#f4da81 208px,#e4f18a 212px,#bdf593 216px,#9ff598 220px,#8ff59a 224px,#87f49b 228px,#83f49b 232px,#80f49b 236px,#7ff49c 240px,#7ef49c 244px,#7df49c 248px,#7df49c 252px) -10px 0/252px 2px no-repeat"></div><div style="left:356px;top:186px;width:202px;height:2px;background:linear-gradient(90deg,#3cd2a5 0px,#25b1a8 4px,#1b86a3 8px,#165f98 12px,#104b8a 16px,#0f4787 20px,#114e8d 24px,#135592 28px,#135692 32px,#125390 36px,#11508e 40px,#11508f 44px,#125491 48px,#155d97 52px,#18699e 56px,#1a7aa1 60px,#1d8ea4 64px,#22a6a7 68px,#2ebea7 72px,#3fd7a4 76px,#63e99f 80px,#88f49b 84px,#a9f696 88px,#d0f58f 92px,#eaed89 96px,#f4da81 100px,#f5b578 104px,#ed8b73 108px,#cc5c6a 112px,#9a345a 116px,#6f1d47 120px,#54123a 124px,#4b1035 128px,#501137 132px,#5f173f 136px,#75204a 140px,#8c2a56 144px,#a43b5e 148px,#bc4c65 152px,#ce5e6b 156px,#df726f 160px,#eb8573 164px,#f09574 168px,#f3a176 172px,#f4a877 176px,#f4a576 180px,#f19975 184px,#ec8873 188px,#e57a71 192px,#e77d71 196px,#ef9374 200px,#f5bc79 204px,#f3e384 208px,#e0f38b 212px,#b9f593 216px,#9ff598 220px,#90f599 224px,#88f59a 228px,#84f49b 232px,#81f49b 236px,#7ff49c 240px,#7ef49c 244px,#7df49c 248px,#7df49c 252px) -10px 0/252px 2px no-repeat"></div><div style="left:356px;top:188px;width:202px;height:2px;background:linear-gradient(90deg,#3dd3a4 0px,#25b1a8 4px,#1b85a3 8px,#155e98 12px,#0f4a89 16px,#0f4888 20px,#125290 24px,#145b96 28px,#155e97 32px,#155c96 36px,#145995 40px,#145a95 44px,#155e97 48px,#17659c 52px,#1972a0 56px,#1b83a3 60px,#1f97a5 64px,#23ada8 68px,#32c4a6 72px,#47dba3 76px,#6ced9e 80px,#8ff59a 84px,#b2f695 88px,#dbf48d 92px,#efea87 96px,#f5d27e 100px,#f4a977 104px,#ea8172 108px,#c25167 112px,#8d2b56 116px,#641942 120px,#4a0f34 124px,#400d2e 128px,#410d2f 132px,#4a0f34 136px,#59143c 140px,#6b1c46 144px,#7f244f 148px,#932f58 152px,#a83e5f 156px,#c04f67 160px,#d3646c 164px,#e47971 168px,#ed8a73 172px,#f09574 176px,#f19975 180px,#f09574 184px,#ee8e74 188px,#ed8973 192px,#ee9074 196px,#f4a676 200px,#f6ce7c 204px,#f1e986 208px,#dcf48c 212px,#b7f694 216px,#a0f598 220px,#92f599 224px,#8af59a 228px,#85f49b 232px,#82f49b 236px,#80f49b 240px,#7ff49c 244px,#7ef49c 248px,#7df49c 252px) -10px 0/252px 2px no-repeat"></div><div style="left:356px;top:190px;width:204px;height:2px;background:linear-gradient(90deg,#3fd6a4 0px,#27b4a8 4px,#1c87a4 8px,#166199 12px,#104d8d 16px,#114e8d 20px,#145a95 24px,#17669d 28px,#186b9f 32px,#186a9e 36px,#18689e 40px,#18689e 44px,#196c9f 48px,#1a75a0 52px,#1b81a2 56px,#1d91a5 60px,#21a4a7 64px,#2ab8a7 68px,#39cea5 72px,#53e1a1 76px,#78f29d 80px,#99f598 84px,#bdf593 88px,#e2f28b 92px,#f2e585 96px,#f6c97b 100px,#f29e75 104px,#e17570 108px,#b64863 112px,#832652 116px,#5b153d 120px,#420d30 124px,#360a28 128px,#330927 132px,#370a29 136px,#3f0d2e 140px,#4a0f34 144px,#57133c 148px,#681b44 152px,#7b234e 156px,#922f58 160px,#ad4160 164px,#c75669 168px,#da6d6e 172px,#ea8072 176px,#ed8b73 180px,#ee8f74 184px,#ee9074 188px,#ef9374 192px,#f29e75 196px,#f5b779 200px,#f5d77f 204px,#eceb88 208px,#d7f48d 212px,#b7f694 216px,#a1f697 220px,#94f599 224px,#8cf59a 228px,#87f49b 232px,#83f49b 236px,#81f49b 240px,#7ff49c 244px,#7ef49c 248px,#7df49c 252px) -10px 0/252px 2px no-repeat"></div><div style="left:358px;top:192px;width:202px;height:2px;background:linear-gradient(90deg,#43d9a4 0px,#2bbaa7 4px,#1d8ea4 8px,#18679e 12px,#135692 16px,#135894 20px,#18679d 24px,#1a77a1 28px,#1b7ea2 32px,#1b7ea2 36px,#1a7da2 40px,#1b7da2 44px,#1b81a2 48px,#1c88a4 52px,#1e94a5 56px,#21a2a7 60px,#26b3a8 64px,#33c5a6 68px,#42d9a4 72px,#62e89f 76px,#83f49b 80px,#a3f697 84px,#c8f590 88px,#e6ef89 92px,#f3de82 96px,#f5be7a 100px,#f09574 104px,#d96b6d 108px,#ac4160 112px,#7d234e 116px,#55133b 120px,#3d0c2d 124px,#2e0824 128px,#2e0824 132px,#2e0824 136px,#2e0824 140px,#2e0824 144px,#360a29 148px,#410d2f 152px,#501138 156px,#661a43 160px,#812550 164px,#9f385c 168px,#bf4e66 172px,#d5666c 176px,#e57a71 180px,#ec8773 184px,#ee8f74 188px,#f19975 192px,#f4a977 196px,#f6c47b 200px,#f4dd82 204px,#e9ed89 208px,#d4f48e 212px,#b7f694 216px,#a3f697 220px,#96f599 224px,#8ef59a 228px,#88f59a 232px,#84f49b 236px,#82f49b 240px,#80f49c 244px,#7ff49c 248px,#7ef49c 252px) -12px 0/252px 2px no-repeat"></div><div style="left:358px;top:194px;width:202px;height:2px;background:linear-gradient(90deg,#4adda3 0px,#30c1a6 4px,#1f98a5 8px,#1973a0 12px,#16629a 16px,#17669c 20px,#1a78a1 24px,#1c8aa4 28px,#1e94a5 32px,#1e95a5 36px,#1e94a5 40px,#1e95a5 44px,#1f99a6 48px,#209fa6 52px,#23a9a7 56px,#28b5a7 60px,#32c4a6 64px,#3dd4a4 68px,#54e1a1 72px,#71ef9d 76px,#8ef59a 80px,#adf696 84px,#d3f48e 88px,#ebec88 92px,#f4d880 96px,#f5b478 100px,#ee8d73 104px,#d3646c 108px,#a73d5f 112px,#7a224d 116px,#54123a 120px,#3b0c2c 124px,#2e0824 128px,#2e0824 132px,#2e0824 136px,#2e0824 140px,#2e0824 144px,#2e0824 148px,#2e0824 152px,#300925 156px,#420d30 160px,#5b153d 164px,#7b234d 168px,#9e375c 172px,#c04f67 176px,#d7696d 180px,#e97f72 184px,#ee8e74 188px,#f29d75 192px,#f5b278 196px,#f6ce7c 200px,#f3e284 204px,#e7ef89 208px,#d2f48e 212px,#b7f694 216px,#a5f697 220px,#98f598 224px,#90f59a 228px,#8af59a 232px,#85f49b 236px,#82f49b 240px,#80f49b 244px,#7ff49c 248px,#7ef49c 252px) -12px 0/252px 2px no-repeat"></div><div style="left:358px;top:196px;width:204px;height:2px;background:linear-gradient(90deg,#52e0a2 0px,#36c9a5 4px,#21a4a7 8px,#1b81a2 12px,#1971a0 16px,#1a77a1 20px,#1c8ba4 24px,#209fa6 28px,#23aaa7 32px,#23ada8 36px,#23ada8 40px,#23ada8 44px,#24b0a8 48px,#28b6a7 52px,#2ebea7 56px,#35c8a6 60px,#3dd4a4 64px,#4edea2 68px,#64e99f 72px,#7ef49c 76px,#97f599 80px,#b6f694 84px,#dcf48c 88px,#efea87 92px,#f5d37e 96px,#f4ad77 100px,#ec8873 104px,#cf606b 108px,#a63c5e 112px,#7c234e 116px,#59143d 120px,#400d2e 124px,#2e0824 128px,#2e0824 132px,#2e0824 136px,#2e0824 140px,#2e0824 144px,#2e0824 148px,#2e0824 152px,#2e0824 156px,#2e0824 160px,#430e30 164px,#611841 168px,#862853 172px,#ac4160 176px,#cd5d6a 180px,#e47870 184px,#ee8e74 188px,#f3a276 192px,#f5bb79 196px,#f5d47e 200px,#f2e785 204px,#e5f08a 208px,#d0f58f 212px,#b8f694 216px,#a6f697 220px,#9af598 224px,#91f599 228px,#8bf59a 232px,#86f49b 236px,#83f49b 240px,#81f49b 244px,#7ff49c 248px,#7ef49c 252px) -12px 0/252px 2px no-repeat"></div><div style="left:358px;top:198px;width:204px;height:2px;background:linear-gradient(90deg,#59e4a1 0px,#3cd2a5 4px,#24b0a8 8px,#1e91a5 12px,#1b83a3 16px,#1c8aa4 20px,#209fa6 24px,#26b3a8 28px,#2ebfa7 32px,#31c2a6 36px,#31c3a6 40px,#32c4a6 44px,#33c6a6 48px,#36caa5 52px,#3bd1a5 56px,#41d8a4 60px,#4fdfa2 64px,#5fe7a0 68px,#73f09d 72px,#87f49b 76px,#9ff598 80px,#bdf593 84px,#e0f38b 88px,#f1e886 92px,#f6d07d 96px,#f4a977 100px,#ec8673 104px,#d0616b 108px,#ab4060 112px,#862753 116px,#651943 120px,#4b1035 124px,#360a29 128px,#2e0824 132px,#2e0824 136px,#2e0824 140px,#2e0824 144px,#2e0824 148px,#2e0824 152px,#2e0824 156px,#2e0824 160px,#3a0b2b 164px,#57133c 168px,#7d244f 172px,#a53c5e 176px,#ca5a6a 180px,#e47970 184px,#ef9174 188px,#f4a977 192px,#f6c47b 196px,#f4d980 200px,#f0e987 204px,#e3f18b 208px,#cdf58f 212px,#b7f694 216px,#a6f697 220px,#9af598 224px,#91f599 228px,#8bf59a 232px,#87f49b 236px,#83f49b 240px,#81f49b 244px,#7ff49c 248px,#7ef49c 252px) -12px 0/252px 2px no-repeat"></div><div style="left:358px;top:200px;width:206px;height:2px;background:linear-gradient(90deg,#60e7a0 0px,#43d9a4 4px,#2dbda7 8px,#21a2a7 12px,#1f96a5 16px,#209da6 20px,#25b1a8 24px,#33c5a6 28px,#3bd0a5 32px,#3ed5a4 36px,#3ed5a4 40px,#3fd6a4 44px,#40d8a4 48px,#45daa3 52px,#4cdea2 56px,#55e2a1 60px,#60e7a0 64px,#6ded9e 68px,#7ef49c 72px,#8ff59a 76px,#a5f697 80px,#c2f592 84px,#e2f28b 88px,#f2e786 92px,#f6cf7c 96px,#f4a877 100px,#ec8873 104px,#d5676c 108px,#b74964 112px,#973259 116px,#7a224d 120px,#601740 124px,#490f34 128px,#370a29 132px,#2e0824 136px,#2e0824 140px,#2e0824 144px,#2e0824 148px,#2e0824 152px,#2e0824 156px,#2e0824 160px,#410d2f 164px,#5f173f 168px,#852752 172px,#ad4261 176px,#d0616b 180px,#ea8172 184px,#f19a75 188px,#f5b478 192px,#f6cf7c 196px,#f3e083 200px,#ebec88 204px,#e0f38c 208px,#c9f590 212px,#b4f694 216px,#a5f697 220px,#99f598 224px,#91f599 228px,#8bf59a 232px,#86f49b 236px,#83f49b 240px,#81f49b 244px,#7ff49c 248px,#7ef49c 252px) -12px 0/252px 2px no-repeat"></div><div style="left:358px;top:202px;width:206px;height:2px;background:linear-gradient(90deg,#66ea9f 0px,#4edea2 4px,#36c9a5 8px,#25b2a8 12px,#22a7a7 16px,#24afa8 20px,#30c1a6 24px,#3dd3a4 28px,#49dca3 32px,#50dfa2 36px,#52e0a2 40px,#53e1a2 44px,#55e2a1 48px,#58e3a1 52px,#5de6a0 56px,#64e99f 60px,#6ded9e 64px,#78f29d 68px,#84f49b 72px,#93f599 76px,#a8f696 80px,#c4f591 84px,#e2f28b 88px,#f2e786 92px,#f6d07d 96px,#f4ac77 100px,#ee8e74 104px,#de726f 108px,#c85769 112px,#af4361 116px,#963159 120px,#7f244f 124px,#681b44 128px,#531239 132px,#420d30 136px,#350a28 140px,#2e0824 144px,#2e0824 148px,#2e0824 152px,#330927 156px,#420d30 160px,#58143c 164px,#78224c 168px,#9d365b 172px,#c45268 176px,#df736f 180px,#ee8f74 184px,#f4a877 188px,#f6c47b 192px,#f4d880 196px,#f2e886 200px,#e6ef8a 204px,#d8f48d 208px,#c2f592 212px,#b0f695 216px,#a2f697 220px,#98f599 224px,#90f59a 228px,#8af59a 232px,#86f49b 236px,#83f49b 240px,#81f49b 244px,#7ff49c 248px,#7ef49c 252px) -12px 0/252px 2px no-repeat"></div><div style="left:358px;top:204px;width:206px;height:2px;background:linear-gradient(90deg,#6bec9e 0px,#57e3a1 4px,#3dd3a4 8px,#2fbfa6 12px,#28b6a7 16px,#2dbda7 20px,#39cea5 24px,#49dca3 28px,#58e3a1 32px,#5fe6a0 36px,#61e7a0 40px,#62e89f 44px,#63e99f 48px,#66ea9f 52px,#6aec9e 56px,#6fee9e 60px,#76f19d 64px,#7ef49c 68px,#88f59a 72px,#96f599 76px,#a9f696 80px,#c4f591 84px,#e1f28b 88px,#f1e886 92px,#f5d37e 96px,#f5b378 100px,#f09775 104px,#ea8172 108px,#d96b6e 112px,#ca596a 116px,#b94a64 120px,#a53c5e 124px,#912d58 128px,#7d234e 132px,#6a1c45 136px,#5b153e 140px,#511138 144px,#4d1036 148px,#501137 152px,#59143c 156px,#6a1c45 160px,#822651 164px,#a0385c 168px,#c25167 172px,#dc6f6e 176px,#ed8b73 180px,#f4a376 184px,#f5be7a 188px,#f5d47e 192px,#f3e384 196px,#ebec88 200px,#e0f38b 204px,#cdf58f 208px,#baf593 212px,#aaf696 216px,#9ef598 220px,#95f599 224px,#8ef59a 228px,#89f59a 232px,#85f49b 236px,#82f49b 240px,#80f49b 244px,#7ff49c 248px,#7ef49c 252px) -12px 0/252px 2px no-repeat"></div><div style="left:358px;top:206px;width:208px;height:2px;background:linear-gradient(90deg,#6fee9e 0px,#5ee6a0 4px,#44daa3 8px,#36c9a5 12px,#30c1a6 16px,#34c7a6 20px,#3ed6a4 24px,#53e1a1 28px,#62e89f 32px,#69eb9f 36px,#6bec9e 40px,#6cec9e 44px,#6ded9e 48px,#6fee9e 52px,#72ef9d 56px,#76f19d 60px,#7bf49c 64px,#81f49b 68px,#8af59a 72px,#97f599 76px,#a9f696 80px,#c2f592 84px,#e0f38c 88px,#efea87 92px,#f5d880 96px,#f5be7a 100px,#f4a376 104px,#ee9074 108px,#eb8272 112px,#e17570 116px,#d6686d 120px,#cc5b6a 124px,#be4e66 128px,#ad4161 132px,#9c365b 136px,#8f2c57 140px,#862753 144px,#822651 148px,#852753 152px,#8f2c57 156px,#a0385c 160px,#b64864 164px,#cd5d6a 168px,#e27770 172px,#ee8e74 176px,#f4a476 180px,#f5be7a 184px,#f5d37e 188px,#f3e284 192px,#edeb88 196px,#e3f18b 200px,#d4f48e 204px,#c1f592 208px,#b0f695 212px,#a3f697 216px,#99f598 220px,#91f599 224px,#8bf59a 228px,#87f49b 232px,#84f49b 236px,#81f49b 240px,#80f49c 244px,#7ef49c 248px,#7ef49c 252px) -12px 0/252px 2px no-repeat"></div><div style="left:358px;top:208px;width:208px;height:2px;background:linear-gradient(90deg,#71ef9e 0px,#62e89f 4px,#4bdda3 8px,#3acfa5 12px,#34c7a6 16px,#37cba5 20px,#42d9a4 24px,#58e3a1 28px,#67ea9f 32px,#6eed9e 36px,#70ee9e 40px,#71ef9d 44px,#72ef9d 48px,#73f09d 52px,#76f19d 56px,#79f39c 60px,#7df49c 64px,#82f49b 68px,#8af59a 72px,#96f599 76px,#a6f697 80px,#bef592 84px,#dcf48c 88px,#ebec88 92px,#f4de82 96px,#f6cb7c 100px,#f5b378 104px,#f3a176 108px,#f09674 112px,#ee8e74 116px,#ec8773 120px,#e97f72 124px,#e0736f 128px,#d6676d 132px,#cc5c6a 136px,#c45368 140px,#bd4d66 144px,#bc4c65 148px,#c04f67 152px,#c85769 156px,#d2636c 160px,#e0746f 164px,#ec8773 168px,#f19975 172px,#f4ad77 176px,#f6c47b 180px,#f5d67f 184px,#f3e384 188px,#eceb88 192px,#e3f18a 196px,#d7f48d 200px,#c4f591 204px,#b4f694 208px,#a7f697 212px,#9cf598 216px,#94f599 220px,#8ef59a 224px,#89f59a 228px,#85f49b 232px,#82f49b 236px,#80f49b 240px,#7ff49c 244px,#7ef49c 248px,#7df49c 252px) -12px 0/252px 2px no-repeat"></div><div style="left:358px;top:210px;width:210px;height:2px;background:linear-gradient(90deg,#71ef9d 0px,#63e89f 4px,#4ddea2 8px,#3ad0a5 12px,#34c7a6 16px,#37caa5 20px,#40d8a4 24px,#57e3a1 28px,#66ea9f 32px,#6eed9e 36px,#71ef9e 40px,#72ef9d 44px,#73f09d 48px,#74f09d 52px,#76f19d 56px,#79f29c 60px,#7df49c 64px,#81f49b 68px,#88f59a 72px,#93f599 76px,#a2f697 80px,#b8f694 84px,#d4f48e 88px,#e7ef89 92px,#f2e585 96px,#f5d57f 100px,#f6c47b 104px,#f5b578 108px,#f4ab77 112px,#f4a476 116px,#f39f75 120px,#f19975 124px,#ef9274 128px,#ed8b73 132px,#eb8372 136px,#e77d71 140px,#e47970 144px,#e47970 148px,#e77d71 152px,#eb8472 156px,#ee8d73 160px,#f19a75 164px,#f4a977 168px,#f5bb79 172px,#f6cf7c 176px,#f4db81 180px,#f2e785 184px,#eaed88 188px,#e2f28b 192px,#d5f48e 196px,#c5f591 200px,#b6f694 204px,#a9f696 208px,#9ef598 212px,#96f599 216px,#8ff59a 220px,#8af59a 224px,#86f49b 228px,#83f49b 232px,#81f49b 236px,#7ff49c 240px,#7ef49c 244px,#7ef49c 248px,#7df49c 252px) -12px 0/252px 2px no-repeat"></div><div style="left:358px;top:212px;width:210px;height:2px;background:linear-gradient(90deg,#70ef9e 0px,#61e8a0 4px,#49dca3 8px,#37cca5 12px,#30c1a6 16px,#32c3a6 20px,#3cd2a5 24px,#4fdfa2 28px,#61e7a0 32px,#69eb9e 36px,#6ded9e 40px,#6eed9e 44px,#6fee9e 48px,#70ee9e 52px,#72ef9d 56px,#75f19d 60px,#79f39c 64px,#7ef49c 68px,#85f49b 72px,#8ff59a 76px,#9df598 80px,#b1f695 84px,#cbf590 88px,#e2f28b 92px,#eeea87 96px,#f3de82 100px,#f5d37e 104px,#f6c97b 108px,#f5c17a 112px,#f5bc79 116px,#f5b879 120px,#f5b378 124px,#f4ad77 128px,#f4a576 132px,#f39f75 136px,#f29b75 140px,#f19975 144px,#f19a75 148px,#f29e75 152px,#f4a576 156px,#f5af78 160px,#f5bd7a 164px,#f6cc7c 168px,#f5d77f 172px,#f3e183 176px,#efea87 180px,#e7ee89 184px,#e0f38b 188px,#d2f48e 192px,#c2f592 196px,#b5f694 200px,#a9f696 204px,#9ff598 208px,#97f599 212px,#90f599 216px,#8bf59a 220px,#87f49b 224px,#84f49b 228px,#82f49b 232px,#80f49c 236px,#7ff49c 240px,#7ef49c 244px,#7df49c 248px,#7df49c 252px) -12px 0/252px 2px no-repeat"></div><div style="left:358px;top:214px;width:210px;height:2px;background:linear-gradient(90deg,#6eed9e 0px,#5ce5a0 4px,#40d8a4 8px,#31c2a6 12px,#27b4a8 16px,#28b6a7 20px,#33c5a6 24px,#41d8a4 28px,#56e2a1 32px,#60e7a0 36px,#63e99f 40px,#65e99f 44px,#66ea9f 48px,#67ea9f 52px,#6aeb9e 56px,#6ded9e 60px,#72ef9d 64px,#78f29d 68px,#7ff49c 72px,#89f59a 76px,#97f599 80px,#a9f696 84px,#c1f592 88px,#dcf48c 92px,#e8ee89 96px,#f2e886 100px,#f4de82 104px,#f5d77f 108px,#f5d37e 112px,#f6d07d 116px,#f6ce7c 120px,#f6cb7c 124px,#f6c57b 128px,#f5bf7a 132px,#f5ba79 136px,#f5b679 140px,#f5b578 144px,#f5b779 148px,#f5bc79 152px,#f6c57b 156px,#f6cf7c 160px,#f5d67f 164px,#f3df83 168px,#f2e886 172px,#ebec88 176px,#e4f08a 180px,#dcf48c 184px,#cdf58f 188px,#bff592 192px,#b2f695 196px,#a8f697 200px,#9ff598 204px,#97f599 208px,#91f599 212px,#8cf59a 216px,#88f49b 220px,#84f49b 224px,#82f49b 228px,#80f49b 232px,#7ff49c 236px,#7ef49c 240px,#7df49c 244px,#7df49c 248px,#7df49c 252px) -12px 0/252px 2px no-repeat"></div><div style="left:358px;top:216px;width:212px;height:2px;background:linear-gradient(90deg,#69eb9f 0px,#54e1a1 4px,#39cea5 8px,#26b3a8 12px,#21a1a6 16px,#21a2a7 20px,#27b4a8 24px,#37cba5 28px,#45daa3 32px,#51e0a2 36px,#55e2a1 40px,#57e3a1 44px,#58e3a1 48px,#5ae4a1 52px,#5de6a0 56px,#61e8a0 60px,#67ea9f 64px,#6eed9e 68px,#77f29d 72px,#82f49b 76px,#8ff59a 80px,#a0f697 84px,#b6f694 88px,#cef58f 92px,#e2f28b 96px,#ebec88 100px,#f2e886 104px,#f3e284 108px,#f3de82 112px,#f4dc81 116px,#f4da81 120px,#f4d880 124px,#f5d57f 128px,#f5d27d 132px,#f6cf7c 136px,#f6cd7c 140px,#f6cd7c 144px,#f6cf7c 148px,#f5d37e 152px,#f4d880 156px,#f3df82 160px,#f2e685 164px,#edeb87 168px,#e7ef89 172px,#e0f38b 176px,#d5f48e 180px,#c7f591 184px,#baf593 188px,#aff695 192px,#a5f697 196px,#9df598 200px,#96f599 204px,#90f599 208px,#8cf59a 212px,#88f49b 216px,#85f49b 220px,#82f49b 224px,#81f49b 228px,#7ff49c 232px,#7ef49c 236px,#7ef49c 240px,#7df49c 244px,#7df49c 248px,#7cf49c 252px) -12px 0/252px 2px no-repeat"></div><div style="left:358px;top:218px;width:212px;height:2px;background:linear-gradient(90deg,#63e89f 0px,#49dca3 4px,#30c1a6 8px,#21a0a6 12px,#1c8aa4 16px,#1c8aa4 20px,#209ea6 24px,#2ab9a7 28px,#39cda5 32px,#3fd7a4 36px,#44daa4 40px,#45daa3 44px,#47dba3 48px,#49dca3 52px,#4edea2 56px,#53e1a1 60px,#5ae4a1 64px,#62e89f 68px,#6ced9e 72px,#79f39c 76px,#87f49b 80px,#97f599 84px,#abf696 88px,#c1f592 92px,#d8f48d 96px,#e4f18a 100px,#eaed88 104px,#efea87 108px,#f1e886 112px,#f2e685 116px,#f3e485 120px,#f3e183 124px,#f3de82 128px,#f4db81 132px,#f4d880 136px,#f5d780 140px,#f4d880 144px,#f4da81 148px,#f3df82 152px,#f3e585 156px,#efea87 160px,#eaed89 164px,#e4f18a 168px,#ddf48c 172px,#cef58f 176px,#c1f592 180px,#b5f694 184px,#aaf696 188px,#a1f697 192px,#9af598 196px,#94f599 200px,#8ff59a 204px,#8bf59a 208px,#88f49b 212px,#85f49b 216px,#83f49b 220px,#81f49b 224px,#7ff49c 228px,#7ef49c 232px,#7ef49c 236px,#7df49c 240px,#7df49c 244px,#7cf49c 248px,#7cf49c 252px) -12px 0/252px 2px no-repeat"></div><div style="left:360px;top:220px;width:210px;height:2px;background:linear-gradient(90deg,#5de5a0 0px,#3fd6a4 4px,#26b2a8 8px,#1c8aa4 12px,#1971a0 16px,#1971a0 20px,#1c87a3 24px,#22a6a7 28px,#2ebfa7 32px,#37caa5 36px,#39cea5 40px,#3ad0a5 44px,#3bd1a5 48px,#3dd3a4 52px,#3fd7a4 56px,#44daa3 60px,#4ddea2 64px,#56e2a1 68px,#61e8a0 72px,#6fee9e 76px,#7ef49c 80px,#8ef59a 84px,#a0f697 88px,#b4f694 92px,#c9f590 96px,#dcf48c 100px,#e3f18a 104px,#e7ee89 108px,#eaed88 112px,#edeb88 116px,#efea87 120px,#f1e886 124px,#f2e585 128px,#f3e183 132px,#f3df82 136px,#f4de82 140px,#f3df83 144px,#f3e284 148px,#f2e886 152px,#edeb87 156px,#e8ee89 160px,#e2f28b 164px,#d8f48d 168px,#c9f590 172px,#bbf593 176px,#aff695 180px,#a4f697 184px,#9cf598 188px,#95f599 192px,#90f59a 196px,#8cf59a 200px,#89f59a 204px,#86f49b 208px,#84f49b 212px,#82f49b 216px,#81f49b 220px,#80f49c 224px,#7ff49c 228px,#7ef49c 232px,#7df49c 236px,#7df49c 240px,#7df49c 244px,#7cf49c 248px,#7cf49c 252px) -14px 0/252px 2px no-repeat"></div><div style="left:360px;top:222px;width:212px;height:2px;background:linear-gradient(90deg,#57e3a1 0px,#39cea5 4px,#21a4a7 8px,#1a76a0 12px,#145a95 16px,#145a95 20px,#1971a0 24px,#1e95a5 28px,#25b2a8 32px,#2fc0a6 36px,#33c5a6 40px,#34c6a6 44px,#35c8a6 48px,#37caa5 52px,#39cea5 56px,#3dd3a4 60px,#42d9a4 64px,#4ddea2 68px,#59e4a1 72px,#67ea9f 76px,#76f19d 80px,#86f49b 84px,#97f599 88px,#a9f696 92px,#bcf593 96px,#cdf58f 100px,#dbf48d 104px,#e1f28b 108px,#e4f08a 112px,#e7ee89 116px,#eaed88 120px,#eeeb87 124px,#f1e986 128px,#f2e585 132px,#f3e284 136px,#f3e183 140px,#f3e384 144px,#f2e786 148px,#eeeb87 152px,#e8ee89 156px,#e1f28b 160px,#d6f48e 164px,#c6f591 168px,#b7f694 172px,#a9f696 176px,#9ef598 180px,#95f599 184px,#8ef59a 188px,#89f59a 192px,#85f49b 196px,#83f49b 200px,#82f49b 204px,#81f49b 208px,#81f49b 212px,#80f49c 216px,#7ff49c 220px,#7ff49c 224px,#7ef49c 228px,#7df49c 232px,#7df49c 236px,#7df49c 240px,#7cf49c 244px,#7cf49c 248px,#7cf49c 252px) -14px 0/252px 2px no-repeat"></div><div style="left:360px;top:224px;width:212px;height:2px;background:linear-gradient(90deg,#52e1a2 0px,#34c6a6 4px,#1e96a5 8px,#16639b 12px,#0f4685 16px,#0f4685 20px,#166099 24px,#1c88a4 28px,#23a9a7 32px,#2bbba7 36px,#2fc0a6 40px,#31c2a6 44px,#32c3a6 48px,#34c6a6 52px,#37cba5 56px,#3ad0a5 60px,#3fd6a4 64px,#49dca3 68px,#55e2a1 72px,#62e89f 76px,#71ef9d 80px,#81f49b 84px,#90f59a 88px,#a0f598 92px,#b0f695 96px,#c0f592 100px,#cdf58f 104px,#d8f48d 108px,#dff38c 112px,#e3f18a 116px,#e7ef89 120px,#ebec88 124px,#f0e987 128px,#f2e685 132px,#f3e284 136px,#f3e284 140px,#f3e485 144px,#f1e986 148px,#ebec88 152px,#e4f18a 156px,#daf48d 160px,#c7f591 164px,#b6f694 168px,#a6f697 172px,#98f599 176px,#8df59a 180px,#84f49b 184px,#7ef49c 188px,#7bf49c 192px,#7af39c 196px,#7af39c 200px,#7cf49c 204px,#7df49c 208px,#7df49c 212px,#7ef49c 216px,#7ef49c 220px,#7ef49c 224px,#7df49c 228px,#7df49c 232px,#7df49c 236px,#7df49c 240px,#7cf49c 244px,#7cf49c 248px,#7cf49c 252px) -14px 0/252px 2px no-repeat"></div><div style="left:360px;top:226px;width:214px;height:2px;background:linear-gradient(90deg,#50dfa2 0px,#30c1a6 4px,#1c89a4 8px,#125491 12px,#0a3472 16px,#0b3573 20px,#125290 24px,#1b7fa2 28px,#22a6a7 32px,#2bbaa7 36px,#30c1a6 40px,#31c3a6 44px,#32c4a6 48px,#34c7a6 52px,#37cba5 56px,#3bd1a5 60px,#3fd7a4 64px,#49dca3 68px,#55e2a1 72px,#61e7a0 76px,#6eee9e 80px,#7df49c 84px,#8af59a 88px,#98f599 92px,#a6f697 96px,#b5f694 100px,#c2f592 104px,#cdf58f 108px,#d8f48d 112px,#e0f38b 116px,#e5f08a 120px,#eaed88 124px,#f0e987 128px,#f3e485 132px,#f3e083 136px,#f3df83 140px,#f3e384 144px,#f1e986 148px,#e9ed89 152px,#e1f28b 156px,#cff58f 160px,#baf593 164px,#a6f697 168px,#94f599 172px,#85f49b 176px,#79f39c 180px,#6fee9e 184px,#6aec9e 188px,#69eb9f 192px,#6aec9e 196px,#6eed9e 200px,#72ef9d 204px,#76f19d 208px,#79f39c 212px,#7bf49c 216px,#7cf49c 220px,#7df49c 224px,#7df49c 228px,#7df49c 232px,#7df49c 236px,#7cf49c 240px,#7cf49c 244px,#7cf49c 248px,#7cf49c 252px) -14px 0/252px 2px no-repeat"></div><div style="left:360px;top:228px;width:214px;height:2px;background:linear-gradient(90deg,#4fdfa2 0px,#2dbda7 4px,#1b80a2 8px,#0f4786 12px,#09235f 16px,#092560 20px,#0f4887 24px,#1a79a1 28px,#22a5a7 32px,#2dbca7 36px,#32c4a6 40px,#33c6a6 44px,#34c7a6 48px,#36caa5 52px,#39cea5 56px,#3dd4a4 60px,#44daa3 64px,#4edfa2 68px,#59e3a1 72px,#63e89f 76px,#6eed9e 80px,#7af39c 84px,#85f49b 88px,#91f599 92px,#9ef598 96px,#abf696 100px,#b7f694 104px,#c4f591 108px,#d0f58f 112px,#ddf48c 116px,#e4f08a 120px,#ebec88 124px,#f2e886 128px,#f3e083 132px,#f4db81 136px,#f4da81 140px,#f3de82 144px,#f2e786 148px,#eaed88 152px,#dff38c 156px,#c7f591 160px,#adf696 164px,#96f599 168px,#82f49b 172px,#6fee9e 176px,#5fe7a0 180px,#56e2a1 184px,#52e0a2 188px,#53e1a1 192px,#59e3a1 196px,#60e7a0 200px,#68eb9f 204px,#6fee9e 208px,#74f09d 212px,#78f29d 216px,#7af39c 220px,#7cf49c 224px,#7cf49c 228px,#7cf49c 232px,#7cf49c 236px,#7cf49c 240px,#7cf49c 244px,#7cf49c 248px,#7cf49c 252px) -14px 0/252px 2px no-repeat"></div><div style="left:360px;top:230px;width:214px;height:2px;background:linear-gradient(90deg,#50dfa2 0px,#2bbaa7 4px,#1a79a1 8px,#0c3c7b 12px,#081a54 16px,#081a54 20px,#0d3f7e 24px,#1974a0 28px,#22a5a7 32px,#2ebea7 36px,#34c6a6 40px,#35c8a6 44px,#35c9a6 48px,#37cca5 52px,#3bd1a5 56px,#3fd7a4 60px,#49dca3 64px,#53e1a1 68px,#5de5a0 72px,#65e99f 76px,#6eed9e 80px,#76f19d 84px,#7ff49c 88px,#89f59a 92px,#95f599 96px,#a1f697 100px,#aef696 104px,#bcf593 108px,#caf590 112px,#dbf48d 116px,#e4f08a 120px,#edeb87 124px,#f3e384 128px,#f4d980 132px,#f5d37e 136px,#f5d27e 140px,#f5d780 144px,#f3e284 148px,#ebec88 152px,#dff48c 156px,#bff592 160px,#a1f697 164px,#86f49b 168px,#6cec9e 172px,#54e1a1 176px,#43d9a4 180px,#3dd3a4 184px,#3cd2a5 188px,#3ed5a4 192px,#45daa3 196px,#50e0a2 200px,#5ce5a0 204px,#67ea9f 208px,#6fee9e 212px,#75f19d 216px,#78f29c 220px,#7bf39c 224px,#7cf49c 228px,#7cf49c 232px,#7cf49c 236px,#7cf49c 240px,#7cf49c 244px,#7cf49c 248px,#7cf49c 252px) -14px 0/252px 2px no-repeat"></div><div style="left:360px;top:232px;width:216px;height:2px;background:linear-gradient(90deg,#51e0a2 0px,#2ab8a7 4px,#1973a0 8px,#0a3472 12px,#081a54 16px,#081a54 20px,#0b3776 24px,#196f9f 28px,#21a2a6 32px,#2cbba7 36px,#31c2a6 40px,#31c3a6 44px,#32c4a6 48px,#34c7a6 52px,#39cea5 56px,#3ed6a4 60px,#49dca3 64px,#55e2a1 68px,#5ee6a0 72px,#66ea9f 76px,#6bec9e 80px,#70ee9e 84px,#76f19d 88px,#7ff49c 92px,#8af59a 96px,#97f599 100px,#a6f697 104px,#b5f694 108px,#c7f591 112px,#daf48d 116px,#e6ef8a 120px,#f0e986 124px,#f4dc81 128px,#f6d07d 132px,#f6c57b 136px,#f6c47b 140px,#f6ce7c 144px,#f4db81 148px,#eeea87 152px,#dff38c 156px,#baf593 160px,#96f599 164px,#75f19d 168px,#53e1a2 172px,#3cd2a5 176px,#33c6a6 180px,#2fbfa6 184px,#2ebfa7 188px,#32c4a6 192px,#38cda5 196px,#40d8a4 200px,#4fdfa2 204px,#5ee6a0 208px,#69eb9f 212px,#71ef9d 216px,#76f19d 220px,#79f39c 224px,#7bf49c 228px,#7cf49c 232px,#7cf49c 236px,#7cf49c 240px,#7cf49c 244px,#7cf49c 248px,#7cf49c 252px) -14px 0/252px 2px no-repeat"></div><div style="left:360px;top:234px;width:216px;height:2px;background:linear-gradient(90deg,#52e0a2 0px,#29b7a7 4px,#196e9f 8px,#0a2c69 12px,#081a54 16px,#081a54 20px,#0a2f6c 24px,#18669d 28px,#1f99a6 32px,#24b1a8 36px,#28b5a7 40px,#27b4a8 44px,#27b4a8 48px,#2bb9a7 52px,#31c2a6 56px,#38cda5 60px,#41d9a4 64px,#50e0a2 68px,#5be5a0 72px,#62e8a0 76px,#64e99f 80px,#65e99f 84px,#67ea9f 88px,#6fee9e 92px,#7cf49c 96px,#8bf59a 100px,#9cf598 104px,#aff695 108px,#c4f591 112px,#dcf48c 116px,#e8ee89 120px,#f3e484 124px,#f5d37e 128px,#f5bf7a 132px,#f5b178 136px,#f5b078 140px,#f5bc79 144px,#f5d37e 148px,#f2e886 152px,#e0f38b 156px,#b5f694 160px,#8cf59a 164px,#61e8a0 168px,#3dd4a4 172px,#2fbfa6 176px,#25b1a8 180px,#23aaa7 184px,#23aba8 188px,#26b2a8 192px,#2ebea7 196px,#37cca5 200px,#42d9a4 204px,#55e2a1 208px,#63e89f 212px,#6ded9e 216px,#74f09d 220px,#78f29d 224px,#7af39c 228px,#7bf49c 232px,#7cf49c 236px,#7cf49c 240px,#7cf49c 244px,#7cf49c 248px,#7cf49c 252px) -14px 0/252px 2px no-repeat"></div><div style="left:362px;top:236px;width:214px;height:2px;background:linear-gradient(90deg,#52e1a2 0px,#28b6a7 4px,#186b9f 8px,#092763 12px,#081a54 16px,#081a54 20px,#092662 24px,#155d97 28px,#1c8aa4 32px,#209fa6 36px,#219fa6 40px,#209ca6 44px,#209ca6 48px,#21a2a7 52px,#24aea8 56px,#2ebea7 60px,#39cea5 64px,#45daa3 68px,#53e1a1 72px,#59e4a1 76px,#59e4a1 80px,#55e2a1 84px,#54e1a1 88px,#5ae4a1 92px,#68eb9f 96px,#7ef49c 100px,#93f599 104px,#aaf696 108px,#c3f591 112px,#dff48c 116px,#ecec88 120px,#f4dd82 124px,#f6c67b 128px,#f4ab77 132px,#f29c75 136px,#f19b75 140px,#f4a877 144px,#f6c67b 148px,#f3e284 152px,#e2f28b 156px,#b2f695 160px,#83f49b 164px,#4fdfa2 168px,#32c4a6 172px,#23ada8 176px,#209ea6 180px,#1f97a5 184px,#1f99a6 188px,#21a2a7 192px,#24b0a8 196px,#30c0a6 200px,#3bd1a5 204px,#4cdda2 208px,#5de6a0 212px,#6aeb9e 216px,#72ef9d 220px,#77f29d 224px,#7af39c 228px,#7bf49c 232px,#7cf49c 236px,#7cf49c 240px,#7cf49c 244px,#7cf49c 248px,#7cf49c 252px) -16px 0/252px 2px no-repeat"></div><div style="left:362px;top:238px;width:216px;height:2px;background:linear-gradient(90deg,#53e1a1 0px,#28b6a7 4px,#186a9e 8px,#092561 12px,#081a54 16px,#081a54 20px,#081f5a 24px,#125491 28px,#1a7aa1 32px,#1c88a4 36px,#1b84a3 40px,#1b7fa2 44px,#1b7ea2 48px,#1c86a3 52px,#1e96a5 56px,#23aaa7 60px,#2ebfa7 64px,#3bd1a5 68px,#47dba3 72px,#4ddea2 76px,#4bdda3 80px,#43d9a4 84px,#3fd7a4 88px,#42d9a4 92px,#52e1a2 96px,#6ded9e 100px,#89f59a 104px,#a5f697 108px,#c3f591 112px,#e1f28b 116px,#f0e987 120px,#f5d47e 124px,#f5b478 128px,#f19875 132px,#ec8873 136px,#ec8773 140px,#f09674 144px,#f5b679 148px,#f4db81 152px,#e4f08a 156px,#b1f695 160px,#7bf49c 164px,#40d8a4 168px,#28b6a7 172px,#209da6 176px,#1d8da4 180px,#1c87a3 184px,#1c89a4 188px,#1e93a5 192px,#21a3a7 196px,#28b6a7 200px,#36caa5 204px,#44daa3 208px,#58e3a1 212px,#66ea9f 216px,#70ee9e 220px,#76f19d 224px,#79f39c 228px,#7bf39c 232px,#7cf49c 236px,#7cf49c 240px,#7cf49c 244px,#7cf49c 248px,#7cf49c 252px) -16px 0/252px 2px no-repeat"></div><div style="left:362px;top:240px;width:216px;height:2px;background:linear-gradient(90deg,#54e1a1 0px,#29b7a7 4px,#186c9f 8px,#092663 12px,#081a54 16px,#081a54 20px,#081b55 24px,#104c8c 28px,#186b9f 32px,#1973a0 36px,#186c9f 40px,#17649c 44px,#17649b 48px,#196c9f 52px,#1b7ea2 56px,#1f96a5 60px,#24b0a8 64px,#33c6a6 68px,#3dd4a4 72px,#42d9a4 76px,#3ed6a4 80px,#39cea5 84px,#35c9a6 88px,#37cba5 92px,#3fd7a4 96px,#5de6a0 100px,#82f49b 104px,#a2f697 108px,#c5f591 112px,#e3f18a 116px,#f3e485 120px,#f6ca7b 124px,#f3a276 128px,#eb8573 132px,#dd706e 136px,#dc6f6e 140px,#eb8472 144px,#f4a676 148px,#f5d47e 152px,#e6ef89 156px,#b1f695 160px,#75f19d 164px,#3ad0a5 168px,#23aca8 172px,#1d91a5 176px,#1b81a2 180px,#1a7aa1 184px,#1a7da2 188px,#1c88a4 192px,#1f9aa6 196px,#24aea8 200px,#32c4a6 204px,#3fd6a4 208px,#54e1a1 212px,#64e99f 216px,#6fee9e 220px,#75f19d 224px,#79f29c 228px,#7bf39c 232px,#7bf49c 236px,#7cf49c 240px,#7cf49c 244px,#7cf49c 248px,#7cf49c 252px) -16px 0/252px 2px no-repeat"></div><div style="left:364px;top:242px;width:216px;height:2px;background:linear-gradient(90deg,#55e2a1 0px,#2bb9a7 4px,#19709f 8px,#092c69 12px,#081a54 16px,#081a54 20px,#081c56 24px,#0f4888 28px,#16629a 32px,#17659c 36px,#155c96 40px,#125491 44px,#125391 48px,#155c96 52px,#196e9f 56px,#1c88a4 60px,#22a5a7 64px,#2ebea7 68px,#39cea5 72px,#3dd3a4 76px,#3acfa5 80px,#33c6a6 84px,#2ebfa7 88px,#2fc0a6 92px,#39cda5 96px,#52e1a2 100px,#7df49c 104px,#a1f697 108px,#c9f590 112px,#e7ef89 116px,#f4de82 120px,#f5bb79 124px,#ef9274 128px,#dc6f6e 132px,#c85769 136px,#c85769 140px,#dd716f 144px,#f19975 148px,#f6ce7c 152px,#e9ed89 156px,#b2f695 160px,#71ef9d 164px,#37cba5 168px,#22a5a7 172px,#1c89a4 176px,#1a79a1 180px,#1972a0 184px,#1a76a0 188px,#1b81a2 192px,#1e93a5 196px,#23a9a7 200px,#2fc0a6 204px,#3dd4a4 208px,#51e0a2 212px,#62e89f 216px,#6ded9e 220px,#74f09d 224px,#78f29d 228px,#7af39c 232px,#7bf49c 236px,#7cf49c 240px,#7cf49c 244px,#7cf49c 248px,#7cf49c 252px) -18px 0/252px 2px no-repeat"></div><div style="left:364px;top:244px;width:216px;height:2px;background:linear-gradient(90deg,#58e3a1 0px,#2dbda7 4px,#1a77a1 8px,#0b3573 12px,#081a54 16px,#081a54 20px,#09235f 24px,#104a8a 28px,#16619a 32px,#16629a 36px,#135893 40px,#114f8e 44px,#114e8d 48px,#135793 52px,#18699e 56px,#1b84a3 60px,#21a2a6 64px,#2cbba7 68px,#38cca5 72px,#3bd1a5 76px,#38cca5 80px,#31c3a6 84px,#2cbba7 88px,#2dbda7 92px,#36caa5 96px,#4fdfa2 100px,#7df49c 104px,#a4f697 108px,#cff58f 112px,#ebec88 116px,#f5d67f 120px,#f4ab77 124px,#eb8272 128px,#ca5969 132px,#b04461 136px,#b24562 140px,#cf5f6b 144px,#ee8e74 148px,#f6c57b 152px,#ecec88 156px,#b5f694 160px,#71ef9d 164px,#36c9a5 168px,#21a3a7 172px,#1c86a3 176px,#1a76a0 180px,#196f9f 184px,#1973a0 188px,#1b7ea2 192px,#1d91a5 196px,#22a7a7 200px,#2ebea7 204px,#3cd3a5 208px,#50dfa2 212px,#61e8a0 216px,#6ded9e 220px,#74f09d 224px,#78f29d 228px,#7af39c 232px,#7bf49c 236px,#7cf49c 240px,#7cf49c 244px,#7cf49c 248px,#7cf49c 252px) -18px 0/252px 2px no-repeat"></div><div style="left:364px;top:246px;width:216px;height:2px;background:linear-gradient(90deg,#5be4a0 0px,#31c3a6 4px,#1b81a2 8px,#0d4180 12px,#081a54 16px,#081a54 20px,#0a316f 24px,#125491 28px,#18699e 32px,#18699e 36px,#155f98 40px,#135693 44px,#135692 48px,#155f98 52px,#1971a0 56px,#1c8aa4 60px,#22a7a7 64px,#2fc0a6 68px,#3acfa5 72px,#3dd4a4 76px,#3acfa5 80px,#33c6a6 84px,#2ebfa7 88px,#30c1a6 92px,#39cea5 96px,#55e2a1 100px,#82f49b 104px,#aaf696 108px,#d8f48d 112px,#f0e987 116px,#f6ce7c 120px,#f29d75 124px,#dd706f 128px,#b54763 132px,#99345a 136px,#9e375c 140px,#c45268 144px,#ec8673 148px,#f5bf7a 152px,#eeeb87 156px,#b9f593 160px,#75f19d 164px,#37cba5 168px,#22a4a7 172px,#1c88a4 176px,#1a78a1 180px,#1971a0 184px,#1974a0 188px,#1b80a2 192px,#1e92a5 196px,#22a8a7 200px,#2fbfa6 204px,#3dd3a4 208px,#51e0a2 212px,#62e8a0 216px,#6ded9e 220px,#73f09d 224px,#77f29d 228px,#79f39c 232px,#7af39c 236px,#7bf49c 240px,#7cf49c 244px,#7cf49c 248px,#7cf49c 252px) -18px 0/252px 2px no-repeat"></div><div style="left:366px;top:248px;width:216px;height:2px;background:linear-gradient(90deg,#5ee6a0 0px,#35c9a6 4px,#1c8ca4 8px,#11508f 12px,#092b68 16px,#092864 20px,#0e4382 24px,#17649c 28px,#1a7ba1 32px,#1a7ca2 36px,#1973a0 40px,#186a9e 44px,#186a9e 48px,#1973a0 52px,#1b85a3 56px,#209da6 60px,#28b5a7 64px,#36caa5 68px,#40d8a4 72px,#45daa3 76px,#3fd7a4 80px,#3acfa5 84px,#36c9a5 88px,#37cca5 92px,#41d8a4 96px,#63e89f 100px,#8bf59a 104px,#b4f694 108px,#e0f38b 112px,#f3e485 116px,#f5c17a 120px,#ee9074 124px,#cf5f6b 128px,#a1395d 132px,#882854 136px,#902d57 140px,#b94a65 144px,#ea8172 148px,#f5bb79 152px,#efea87 156px,#bdf593 160px,#7bf39c 164px,#3bd0a5 168px,#23aaa7 172px,#1d8fa4 176px,#1b7ea2 180px,#1a78a1 184px,#1a7ba1 188px,#1c86a3 192px,#1f98a5 196px,#23ada8 200px,#31c2a6 204px,#3ed5a4 208px,#53e1a2 212px,#63e89f 216px,#6ded9e 220px,#73f09d 224px,#76f19d 228px,#78f29d 232px,#7af39c 236px,#7bf39c 240px,#7bf49c 244px,#7cf49c 248px,#7cf49c 252px) -20px 0/252px 2px no-repeat"></div><div style="left:366px;top:250px;width:216px;height:2px;background:linear-gradient(90deg,#62e89f 0px,#3ad0a5 4px,#1f9ba6 8px,#16619a 12px,#0d4180 16px,#0d3f7e 20px,#145894 24px,#1a7ca2 28px,#1e95a5 32px,#1f9aa6 36px,#1e93a5 40px,#1d8ca4 44px,#1d8ca4 48px,#1e95a5 52px,#21a4a7 56px,#29b7a7 60px,#36caa5 64px,#43d9a4 68px,#51e0a2 72px,#55e2a1 76px,#4fdfa2 80px,#46dba3 84px,#40d8a4 88px,#44daa3 92px,#56e2a1 96px,#75f19d 100px,#98f599 104px,#c0f592 108px,#e5f08a 112px,#f4dd82 116px,#f5b378 120px,#eb8472 124px,#c15067 128px,#912d58 132px,#7c234e 136px,#882854 140px,#b54763 144px,#e97f72 148px,#f5b979 152px,#f0e986 156px,#c1f592 160px,#81f49b 164px,#40d8a4 168px,#26b3a8 172px,#1f99a6 176px,#1c89a4 180px,#1b83a3 184px,#1b85a3 188px,#1d90a5 192px,#21a1a6 196px,#27b4a8 200px,#35c8a6 204px,#42d9a4 208px,#56e2a1 212px,#64e99f 216px,#6ded9e 220px,#72ef9d 224px,#75f19d 228px,#76f19d 232px,#78f29d 236px,#79f39c 240px,#7bf39c 244px,#7cf49c 248px,#7cf49c 252px) -20px 0/252px 2px no-repeat"></div><div style="left:366px;top:252px;width:218px;height:2px;background:linear-gradient(90deg,#66ea9f 0px,#3fd7a4 4px,#23a9a7 8px,#1a76a0 12px,#135894 16px,#135894 20px,#1972a0 24px,#1f99a6 28px,#27b4a8 32px,#2dbda7 36px,#2bbba7 40px,#29b7a7 44px,#2ab8a7 48px,#2ebfa7 52px,#36c9a5 56px,#3ed6a4 60px,#4fdfa2 64px,#5de6a0 68px,#65e99f 72px,#66ea9f 76px,#61e8a0 80px,#5be4a0 84px,#57e3a1 88px,#5ce5a0 92px,#6ded9e 96px,#86f49b 100px,#a5f697 104px,#cdf58f 108px,#eaed88 112px,#f5d57f 116px,#f4a576 120px,#e17570 124px,#b04462 128px,#842752 132px,#74204a 136px,#852753 140px,#b54863 144px,#ea8172 148px,#f5ba79 152px,#f1e986 156px,#c6f591 160px,#89f59a 164px,#4ddea2 168px,#2fbfa6 172px,#22a7a7 176px,#1f98a5 180px,#1e91a5 184px,#1e94a5 188px,#209da6 192px,#23aca8 196px,#2dbda7 200px,#3acfa5 204px,#49dca3 208px,#5ae4a0 212px,#66ea9f 216px,#6ded9e 220px,#70ee9e 224px,#71ef9d 228px,#73f09d 232px,#75f19d 236px,#77f29d 240px,#7af39c 244px,#7bf49c 248px,#7cf49c 252px) -20px 0/252px 2px no-repeat"></div><div style="left:368px;top:254px;width:216px;height:2px;background:linear-gradient(90deg,#6aec9e 0px,#4adca3 4px,#2ab8a7 8px,#1c8ca4 12px,#1971a0 16px,#1973a0 20px,#1d8fa5 24px,#29b7a7 28px,#3dd3a4 32px,#4ddea2 36px,#51e0a2 40px,#52e1a2 44px,#55e2a1 48px,#5be5a0 52px,#63e99f 56px,#6ced9e 60px,#74f09d 64px,#79f39c 68px,#7af39c 72px,#78f29d 76px,#73f09d 80px,#6eed9e 84px,#6ced9e 88px,#72ef9d 92px,#80f49b 96px,#95f599 100px,#b3f695 104px,#daf48d 108px,#f0e987 112px,#f6cc7c 116px,#f19975 120px,#d5666c 124px,#a1395d 128px,#7a224d 132px,#711e48 136px,#872854 140px,#bb4b65 144px,#eb8573 148px,#f5bd7a 152px,#f1e986 156px,#c9f590 160px,#91f599 164px,#5ce5a0 168px,#38cda5 172px,#28b6a7 176px,#22a8a7 180px,#21a3a7 184px,#22a4a7 188px,#23aca8 192px,#2ab9a7 196px,#35c8a6 200px,#3fd6a4 204px,#50e0a2 208px,#5fe6a0 212px,#68eb9f 216px,#6cec9e 220px,#6ded9e 224px,#6ced9e 228px,#6ded9e 232px,#70ef9e 236px,#74f09d 240px,#78f29d 244px,#7af39c 248px,#7cf49c 252px) -22px 0/252px 2px no-repeat"></div><div style="left:370px;top:256px;width:214px;height:2px;background:linear-gradient(90deg,#6eed9e 0px,#54e1a1 4px,#34c6a6 8px,#21a2a7 12px,#1c8ba4 16px,#1d90a5 20px,#23ada8 24px,#3dd4a4 28px,#66ea9f 32px,#7ef49c 36px,#88f49b 40px,#8df59a 44px,#90f599 48px,#93f599 52px,#95f599 56px,#95f599 60px,#93f599 64px,#90f59a 68px,#8bf59a 72px,#86f49b 76px,#81f49b 80px,#7ef49c 84px,#7df49c 88px,#82f49b 92px,#8ef59a 96px,#a1f697 100px,#bef592 104px,#e1f28b 108px,#f3e384 112px,#f5bf7a 116px,#ee8d73 120px,#c95869 124px,#943059 128px,#731f4a 132px,#701e48 136px,#8c2a56 140px,#c35168 144px,#ed8a73 148px,#f5c27a 152px,#f0e987 156px,#ccf590 160px,#98f598 164px,#6cec9e 168px,#43daa4 172px,#34c7a6 176px,#2bbaa7 180px,#27b4a8 184px,#28b5a7 188px,#2cbca7 192px,#34c6a6 196px,#3cd2a5 200px,#49dca3 204px,#58e3a1 208px,#63e89f 212px,#69eb9f 216px,#69eb9f 220px,#67ea9f 224px,#64e99f 228px,#65e99f 232px,#69eb9f 236px,#6fee9e 240px,#75f19d 244px,#79f39c 248px,#7bf49c 252px) -24px 0/252px 2px no-repeat"></div><div style="left:370px;top:258px;width:214px;height:2px;background:linear-gradient(90deg,#71ef9d 0px,#5de5a0 4px,#3dd3a4 8px,#29b7a7 12px,#22a6a7 16px,#23ada8 20px,#36c9a5 24px,#61e7a0 28px,#8af59a 32px,#a2f697 36px,#b1f695 40px,#bbf593 44px,#c1f592 48px,#c2f592 52px,#bff592 56px,#b8f694 60px,#aff695 64px,#a5f697 68px,#9bf598 72px,#92f599 76px,#8cf59a 80px,#88f49b 84px,#87f49b 88px,#8cf59a 92px,#97f599 96px,#abf696 100px,#c8f590 104px,#e6ef8a 108px,#f4dd82 112px,#f5b378 116px,#eb8272 120px,#bc4c65 124px,#892954 128px,#6f1d47 132px,#721f49 136px,#943059 140px,#ca5a6a 144px,#ef9074 148px,#f6c77b 152px,#efea87 156px,#cff58f 160px,#9ff598 164px,#7af39c 168px,#57e3a1 172px,#3fd6a4 176px,#37cba5 180px,#33c6a6 184px,#34c6a6 188px,#37cba5 192px,#3cd3a5 196px,#46dba3 200px,#54e1a1 204px,#5fe7a0 208px,#67ea9f 212px,#68eb9f 216px,#65e99f 220px,#5ee6a0 224px,#59e4a1 228px,#59e4a1 232px,#5fe6a0 236px,#68eb9f 240px,#71ef9d 244px,#77f29d 248px,#7bf39c 252px) -24px 0/252px 2px no-repeat"></div><div style="left:372px;top:260px;width:212px;height:2px;background:linear-gradient(90deg,#74f09d 0px,#65e99f 4px,#4adda3 8px,#36caa5 12px,#2ebfa7 16px,#34c7a6 20px,#50dfa2 24px,#82f49b 28px,#a7f697 32px,#c3f591 36px,#d8f48d 40px,#e1f28b 44px,#e4f08a 48px,#e4f08a 52px,#e2f28b 56px,#dbf48d 60px,#cbf590 64px,#baf593 68px,#aaf696 72px,#9df598 76px,#94f599 80px,#8ff59a 84px,#8ff59a 88px,#93f599 92px,#9ef598 96px,#b2f695 100px,#d0f58f 104px,#e9ed89 108px,#f5d780 112px,#f4a877 116px,#e27770 120px,#af4361 124px,#802550 128px,#6c1c46 132px,#76214b 136px,#9c365b 140px,#d1626c 144px,#f09775 148px,#f6cc7c 152px,#eeea87 156px,#d1f58f 160px,#a5f697 164px,#85f49b 168px,#68eb9f 172px,#52e0a2 176px,#43daa4 180px,#3ed5a4 184px,#3ed5a4 188px,#41d8a4 192px,#49dca3 196px,#54e1a1 200px,#5ee6a0 204px,#66ea9f 208px,#69eb9f 212px,#66ea9f 216px,#5ee6a0 220px,#52e0a2 224px,#49dca3 228px,#49dca3 232px,#51e0a2 236px,#5fe6a0 240px,#6cec9e 244px,#75f19d 248px,#7af39c 252px) -26px 0/252px 2px no-repeat"></div><div style="left:374px;top:262px;width:212px;height:2px;background:linear-gradient(90deg,#77f19d 0px,#6cec9e 4px,#59e3a1 8px,#43d9a4 12px,#3dd4a4 16px,#49dca3 20px,#70ee9e 24px,#9af598 28px,#c0f592 32px,#dff38c 36px,#e9ed89 40px,#f0e986 44px,#f2e585 48px,#f2e585 52px,#f0e987 56px,#e9ed89 60px,#e0f38b 64px,#cdf58f 68px,#b8f694 72px,#a7f697 76px,#9bf598 80px,#94f599 84px,#93f599 88px,#98f599 92px,#a3f697 96px,#b7f694 100px,#d6f48e 104px,#eceb88 108px,#f5d37e 112px,#f3a076 116px,#db6d6e 120px,#a63c5e 124px,#7b234d 128px,#6c1c46 132px,#7b234d 136px,#a43b5e 140px,#d86a6d 144px,#f29c75 148px,#f6d07d 152px,#edeb87 156px,#d3f48e 160px,#abf696 164px,#8ef59a 168px,#77f29d 172px,#63e89f 176px,#57e3a1 180px,#50dfa2 184px,#4fdfa2 188px,#52e0a2 192px,#58e3a1 196px,#5fe7a0 200px,#66ea9f 204px,#6bec9e 208px,#6bec9e 212px,#63e89f 216px,#54e2a1 220px,#43d9a4 224px,#3bd1a5 228px,#3ad0a5 232px,#40d8a4 236px,#53e1a2 240px,#65e99f 244px,#72ef9d 248px,#79f29c 252px) -28px 0/252px 2px no-repeat"></div><div style="left:376px;top:264px;width:210px;height:2px;background:linear-gradient(90deg,#79f29c 0px,#71ef9d 4px,#65e99f 8px,#57e3a1 12px,#54e1a1 16px,#65e99f 20px,#88f49b 24px,#aef696 28px,#d5f48e 32px,#e8ee89 36px,#f2e585 40px,#f4da81 44px,#f5d47e 48px,#f5d57f 52px,#f4db81 56px,#f2e685 60px,#e9ed89 64px,#ddf48c 68px,#c3f591 72px,#aef696 76px,#a0f697 80px,#98f599 84px,#96f599 88px,#9af598 92px,#a6f697 96px,#baf593 100px,#daf48d 104px,#eeea87 108px,#f6cf7d 112px,#f29b75 116px,#d6686d 120px,#a1395d 124px,#79224c 128px,#6e1d47 132px,#802550 136px,#ac4160 140px,#dd716f 144px,#f3a076 148px,#f5d17d 152px,#edeb87 156px,#d5f48e 160px,#b0f695 164px,#95f599 168px,#81f49b 172px,#71ef9d 176px,#66ea9f 180px,#60e7a0 184px,#5ee6a0 188px,#60e7a0 192px,#64e99f 196px,#69eb9f 200px,#6ded9e 204px,#6fee9e 208px,#6bec9e 212px,#5fe6a0 216px,#49dca3 220px,#39cea5 224px,#30c1a6 228px,#2fc0a6 232px,#36caa5 236px,#45daa3 240px,#5de6a0 244px,#6eee9e 248px,#77f29d 252px) -30px 0/252px 2px no-repeat"></div><div style="left:376px;top:266px;width:210px;height:2px;background:linear-gradient(90deg,#7bf39c 0px,#76f19d 4px,#6eed9e 8px,#67ea9f 12px,#68eb9f 16px,#7bf39c 20px,#97f599 24px,#bcf593 28px,#e0f38b 32px,#efea87 36px,#f4db81 40px,#f6cf7c 44px,#f6c67b 48px,#f6c67b 52px,#f6d07d 56px,#f4dd82 60px,#efea87 64px,#e2f28b 68px,#cbf590 72px,#b3f695 76px,#a3f697 80px,#99f598 84px,#97f599 88px,#9bf598 92px,#a7f697 96px,#bcf593 100px,#dcf48c 104px,#efea87 108px,#f6ce7c 112px,#f19975 116px,#d4666c 120px,#a0395d 124px,#7b234e 128px,#721f49 132px,#862853 136px,#b24562 140px,#e17570 144px,#f4a376 148px,#f5d27d 152px,#eeeb87 156px,#d8f48d 160px,#b5f694 164px,#9bf598 168px,#89f59a 172px,#7cf49c 176px,#72ef9d 180px,#6ced9e 184px,#6aec9e 188px,#6aec9e 192px,#6ded9e 196px,#70ee9e 200px,#72ef9d 204px,#72ef9d 208px,#6bec9e 212px,#59e4a1 216px,#3fd6a4 220px,#2fc0a6 224px,#24b1a8 228px,#24afa8 232px,#2cbca7 236px,#3bd1a5 240px,#55e2a1 244px,#6bec9e 248px,#76f19d 252px) -30px 0/252px 2px no-repeat"></div><div style="left:378px;top:268px;width:208px;height:2px;background:linear-gradient(90deg,#7cf49c 0px,#79f39c 4px,#75f19d 8px,#72ef9d 12px,#77f29d 16px,#87f49b 20px,#a2f697 24px,#c5f591 28px,#e3f18a 32px,#f2e886 36px,#f5d780 40px,#f6c97b 44px,#f5be7a 48px,#f5bf7a 52px,#f6cb7c 56px,#f4d980 60px,#f1e986 64px,#e4f18a 68px,#cdf58f 72px,#b4f694 76px,#a2f697 80px,#98f598 84px,#96f599 88px,#9af598 92px,#a7f697 96px,#bcf593 100px,#ddf48c 104px,#f0e987 108px,#f6cd7c 112px,#f19a75 116px,#d6686d 120px,#a53c5e 124px,#822651 128px,#7a224d 132px,#8d2b56 136px,#b74964 140px,#e27770 144px,#f4a276 148px,#f6d17d 152px,#efea87 156px,#dcf48c 160px,#baf593 164px,#a0f697 168px,#8ff59a 172px,#83f49b 176px,#7bf49c 180px,#75f19d 184px,#73f09d 188px,#72ef9d 192px,#73f09d 196px,#75f19d 200px,#76f19d 204px,#74f09d 208px,#6aeb9e 212px,#54e1a1 216px,#39cea5 220px,#26b3a8 224px,#21a1a6 228px,#209fa6 232px,#23ada8 236px,#34c7a6 240px,#4ddea2 244px,#67ea9f 248px,#75f19d 252px) -32px 0/252px 2px no-repeat"></div><div style="left:380px;top:270px;width:208px;height:2px;background:linear-gradient(90deg,#7df49c 0px,#7cf49c 4px,#7af39c 8px,#7af39c 12px,#80f49b 16px,#8ff59a 20px,#a7f697 24px,#c7f591 28px,#e3f18b 32px,#f1e986 36px,#f4d980 40px,#f6cc7c 44px,#f5c27a 48px,#f5c27a 52px,#f6ce7c 56px,#f4db81 60px,#f0e987 64px,#e2f18b 68px,#caf590 72px,#b1f695 76px,#9ff598 80px,#95f599 84px,#93f599 88px,#98f598 92px,#a5f697 96px,#bbf593 100px,#dcf48c 104px,#efea87 108px,#f6cf7c 112px,#f29e75 116px,#dc6f6e 120px,#b04361 124px,#8d2b56 128px,#842752 132px,#953059 136px,#bb4b65 140px,#e27670 144px,#f3a076 148px,#f6ce7c 152px,#f1e886 156px,#dff38c 160px,#bff592 164px,#a5f697 168px,#93f599 172px,#88f49b 176px,#80f49b 180px,#7cf49c 184px,#79f29c 188px,#78f29d 192px,#78f29d 196px,#79f39c 200px,#79f39c 204px,#75f19d 208px,#69eb9f 212px,#4fdfa2 216px,#34c7a6 220px,#22a9a7 224px,#1e93a5 228px,#1d91a5 232px,#21a2a7 236px,#2ebfa7 240px,#46dba3 244px,#64e99f 248px,#75f19d 252px) -34px 0/252px 2px no-repeat"></div><div style="left:380px;top:272px;width:208px;height:2px;background:linear-gradient(90deg,#7df49c 0px,#7df49c 4px,#7df49c 8px,#7ff49c 12px,#85f49b 16px,#92f599 20px,#a7f697 24px,#c3f591 28px,#e0f38b 32px,#eceb88 36px,#f3e083 40px,#f5d57f 44px,#f6cf7c 48px,#f6cf7c 52px,#f5d67f 56px,#f3e183 60px,#ebec88 64px,#dff48c 68px,#c3f591 72px,#aaf696 76px,#99f598 80px,#90f599 84px,#8ff59a 88px,#95f599 92px,#a3f697 96px,#baf593 100px,#daf48d 104px,#eeeb87 108px,#f5d27e 112px,#f4a476 116px,#e47971 120px,#be4e66 124px,#9c355b 128px,#902d57 132px,#9c355b 136px,#bc4c66 140px,#df736f 144px,#f19b75 148px,#f6c77b 152px,#f2e585 156px,#e2f28b 160px,#c4f591 164px,#a9f696 168px,#97f599 172px,#8bf59a 176px,#84f49b 180px,#7ff49c 184px,#7df49c 188px,#7cf49c 192px,#7bf49c 196px,#7cf49c 200px,#7bf49c 204px,#77f29d 208px,#69eb9f 212px,#4cdea2 216px,#31c3a6 220px,#21a1a6 224px,#1c8aa4 228px,#1c87a4 232px,#1f9aa6 236px,#2bb9a7 240px,#42d9a4 244px,#63e89f 248px,#74f09d 252px) -34px 0/252px 2px no-repeat"></div><div style="left:382px;top:274px;width:206px;height:2px;background:linear-gradient(90deg,#7ef49c 0px,#7ef49c 4px,#7ff49c 8px,#81f49b 12px,#87f49b 16px,#92f599 20px,#a4f697 24px,#bbf593 28px,#d6f48e 32px,#e6ef8a 36px,#f0e987 40px,#f3e183 44px,#f4dc81 48px,#f4dc81 52px,#f3e183 56px,#efea87 60px,#e5f08a 64px,#d3f48e 68px,#b8f694 72px,#a2f697 76px,#93f599 80px,#8bf59a 84px,#8bf59a 88px,#92f599 92px,#a1f697 96px,#b7f694 100px,#d7f48d 104px,#ecec88 108px,#f5d67f 112px,#f4ad77 116px,#eb8573 120px,#cd5c6a 124px,#ad4261 128px,#9e375c 132px,#a33b5e 136px,#bc4c66 140px,#db6d6e 144px,#ef9474 148px,#f5be7a 152px,#f3e083 156px,#e5f08a 160px,#caf590 164px,#adf696 168px,#9af598 172px,#8ef59a 176px,#86f49b 180px,#82f49b 184px,#7ff49c 188px,#7ef49c 192px,#7df49c 196px,#7ef49c 200px,#7df49c 204px,#79f29c 208px,#6bec9e 212px,#4ddea2 216px,#30c2a6 220px,#209fa6 224px,#1c87a3 228px,#1b84a3 232px,#1f97a5 236px,#29b8a7 240px,#41d8a4 244px,#63e89f 248px,#75f19d 252px) -36px 0/252px 2px no-repeat"></div><div style="left:384px;top:276px;width:204px;height:2px;background:linear-gradient(90deg,#7ef49c 0px,#7ff49c 4px,#80f49c 8px,#82f49b 12px,#88f49b 16px,#91f599 20px,#9ff598 24px,#b2f695 28px,#c7f591 32px,#def48c 36px,#e6ef8a 40px,#eceb88 44px,#f0e987 48px,#f0e987 52px,#edeb88 56px,#e6ef8a 60px,#ddf48c 64px,#c5f591 68px,#adf696 72px,#9af598 76px,#8cf59a 80px,#86f49b 84px,#87f49b 88px,#90f59a 92px,#9ff598 96px,#b6f694 100px,#d4f48e 104px,#eaed88 108px,#f4db81 112px,#f5b879 116px,#ef9174 120px,#da6d6e 124px,#c15067 128px,#ac4160 132px,#aa4060 136px,#bb4b65 140px,#d5666c 144px,#ed8b73 148px,#f5b378 152px,#f4da81 156px,#e9ee89 160px,#cff58f 164px,#b1f695 168px,#9df598 172px,#90f59a 176px,#88f49b 180px,#83f49b 184px,#80f49b 188px,#7ff49c 192px,#7ff49c 196px,#7ff49c 200px,#7ff49c 204px,#7bf49c 208px,#6eed9e 212px,#51e0a2 216px,#32c5a6 220px,#21a2a7 224px,#1c8aa4 228px,#1c87a3 232px,#1f9aa6 236px,#2bbaa7 240px,#44daa3 244px,#65e99f 248px,#77f29d 252px) -38px 0/252px 2px no-repeat"></div><div style="left:384px;top:278px;width:204px;height:2px;background:linear-gradient(90deg,#7ef49c 0px,#7ff49c 4px,#80f49b 8px,#83f49b 12px,#87f49b 16px,#8ff59a 20px,#9af598 24px,#a8f696 28px,#b9f593 32px,#caf590 36px,#dbf48d 40px,#e2f28b 44px,#e5f08a 48px,#e5f08a 52px,#e3f18b 56px,#ddf48c 60px,#ccf590 64px,#b8f694 68px,#a4f697 72px,#94f599 76px,#88f59a 80px,#83f49b 84px,#86f49b 88px,#8ff59a 92px,#9ff598 96px,#b5f694 100px,#d2f48e 104px,#e8ee89 108px,#f3df83 112px,#f5c37a 116px,#f29d75 120px,#e87e72 124px,#cf5f6b 128px,#bb4b65 132px,#b14462 136px,#b84a64 140px,#ce5e6b 144px,#eb8272 148px,#f4a877 152px,#f5d47e 156px,#eceb88 160px,#d5f48e 164px,#b4f694 168px,#9ff598 172px,#91f599 176px,#89f59a 180px,#84f49b 184px,#81f49b 188px,#80f49c 192px,#80f49c 196px,#80f49b 200px,#81f49b 204px,#7ef49c 208px,#73f09d 212px,#59e4a1 216px,#38cca5 220px,#23aca8 224px,#1e95a5 228px,#1e92a5 232px,#21a3a7 236px,#31c2a6 240px,#4cdda2 244px,#6aec9e 248px,#7af39c 252px) -38px 0/252px 2px no-repeat"></div><div style="left:386px;top:280px;width:204px;height:2px;background:linear-gradient(90deg,#7ef49c 0px,#7ff49c 4px,#81f49b 8px,#83f49b 12px,#87f49b 16px,#8df59a 20px,#96f599 24px,#a0f697 28px,#adf696 32px,#baf593 36px,#c7f591 40px,#d1f58f 44px,#d7f48d 48px,#d9f48d 52px,#d5f48e 56px,#ccf590 60px,#bff592 64px,#aff695 68px,#9ff598 72px,#91f599 76px,#88f49b 80px,#84f49b 84px,#88f49b 88px,#91f599 92px,#a1f697 96px,#b6f694 100px,#d2f48e 104px,#e6ef8a 108px,#f3e384 112px,#f6cd7c 116px,#f4a977 120px,#ed8b73 124px,#db6e6e 128px,#c65569 132px,#b64864 136px,#b54763 140px,#c75669 144px,#e37770 148px,#f29e75 152px,#f6ce7c 156px,#f0e987 160px,#dbf48d 164px,#b8f694 168px,#a0f697 172px,#92f599 176px,#89f59a 180px,#84f49b 184px,#81f49b 188px,#80f49b 192px,#80f49b 196px,#81f49b 200px,#83f49b 204px,#82f49b 208px,#7bf49c 212px,#66ea9f 216px,#41d9a4 220px,#2dbca7 224px,#22a7a7 228px,#21a4a7 232px,#26b3a8 236px,#39cea5 240px,#58e3a1 244px,#71ef9d 248px,#7df49c 252px) -40px 0/252px 2px no-repeat"></div><div style="left:388px;top:282px;width:202px;height:2px;background:linear-gradient(90deg,#7ff49c 0px,#80f49c 4px,#81f49b 8px,#83f49b 12px,#86f49b 16px,#8bf59a 20px,#92f599 24px,#9af598 28px,#a4f697 32px,#aef696 36px,#b8f694 40px,#c0f592 44px,#c6f591 48px,#c8f590 52px,#c7f591 56px,#c1f592 60px,#b7f694 64px,#abf696 68px,#9ff598 72px,#94f599 76px,#8cf59a 80px,#8af59a 84px,#8ef59a 88px,#98f599 92px,#a7f697 96px,#bbf593 100px,#d4f48e 104px,#e6ef8a 108px,#f2e685 112px,#f5d27e 116px,#f5b378 120px,#f09574 124px,#e57a71 128px,#ce5e6b 132px,#ba4b65 136px,#b24562 140px,#c04f67 144px,#da6d6e 148px,#f09674 152px,#f6c57b 156px,#f2e786 160px,#dff48c 164px,#baf593 168px,#a2f697 172px,#92f599 176px,#89f59a 180px,#84f49b 184px,#81f49b 188px,#80f49c 192px,#81f49b 196px,#83f49b 200px,#85f49b 204px,#87f49b 208px,#84f49b 212px,#76f19d 216px,#5ae4a1 220px,#3cd2a5 224px,#2fc0a6 228px,#2dbda7 232px,#36c9a5 236px,#4adda3 240px,#68eb9f 244px,#7bf49c 248px,#82f49b 252px) -42px 0/252px 2px no-repeat"></div><div style="left:388px;top:284px;width:202px;height:2px;background:linear-gradient(90deg,#7ff49c 0px,#80f49c 4px,#81f49b 8px,#84f49b 12px,#86f49b 16px,#8bf59a 20px,#90f599 24px,#97f599 28px,#9ef598 32px,#a6f697 36px,#aef696 40px,#b5f694 44px,#bbf593 48px,#bef592 52px,#bef592 56px,#bbf593 60px,#b5f694 64px,#adf696 68px,#a4f697 72px,#9cf598 76px,#96f599 80px,#95f599 84px,#9af598 88px,#a3f697 92px,#b1f695 96px,#c3f591 100px,#daf48d 104px,#e7ef89 108px,#f2e685 112px,#f5d57f 116px,#f5ba79 120px,#f29c75 124px,#eb8272 128px,#d3646c 132px,#bd4d66 136px,#b04361 140px,#b84a64 144px,#d4656c 148px,#ee8f74 152px,#f5bf7a 156px,#f3e485 160px,#e0f38b 164px,#bcf593 168px,#a2f697 172px,#92f599 176px,#88f59a 180px,#83f49b 184px,#80f49c 188px,#7ff49c 192px,#81f49b 196px,#84f49b 200px,#88f59a 204px,#8df59a 208px,#8ef59a 212px,#88f49b 216px,#78f29d 220px,#5fe6a0 224px,#4adda3 228px,#45daa3 232px,#51e0a2 236px,#67ea9f 240px,#7bf49c 244px,#84f49b 248px,#87f49b 252px) -42px 0/252px 2px no-repeat"></div><div style="left:390px;top:286px;width:200px;height:2px;background:linear-gradient(90deg,#7ff49c 0px,#80f49b 4px,#82f49b 8px,#84f49b 12px,#87f49b 16px,#8bf59a 20px,#8ff59a 24px,#95f599 28px,#9bf598 32px,#a2f697 36px,#a9f696 40px,#b0f695 44px,#b6f694 48px,#baf593 52px,#bcf593 56px,#bcf593 60px,#b9f593 64px,#b4f694 68px,#aef696 72px,#a9f696 76px,#a6f697 80px,#a6f697 84px,#aaf696 88px,#b3f695 92px,#bff592 96px,#d0f58f 100px,#e0f38b 104px,#eaed88 108px,#f3e485 112px,#f5d47e 116px,#f5bb79 120px,#f39f75 124px,#eb8573 128px,#d6676d 132px,#bf4e66 136px,#ae4261 140px,#b44763 144px,#d0606b 148px,#ed8b73 152px,#f5bb79 156px,#f3e384 160px,#e1f28b 164px,#bdf593 168px,#a2f697 172px,#91f599 176px,#86f49b 180px,#81f49b 184px,#7ef49c 188px,#7ef49c 192px,#80f49b 196px,#85f49b 200px,#8cf59a 204px,#94f599 208px,#9af598 212px,#9af598 216px,#94f599 220px,#88f49b 224px,#7cf49c 228px,#77f29d 232px,#7df49c 236px,#86f49b 240px,#8df59a 244px,#8ff59a 248px,#8df59a 252px) -44px 0/252px 2px no-repeat"></div><div style="left:392px;top:288px;width:198px;height:2px;background:linear-gradient(90deg,#7ff49c 0px,#81f49b 4px,#82f49b 8px,#85f49b 12px,#88f49b 16px,#8bf59a 20px,#90f59a 24px,#95f599 28px,#9bf598 32px,#a1f697 36px,#a8f697 40px,#aef696 44px,#b5f694 48px,#baf593 52px,#bef592 56px,#c1f592 60px,#c1f592 64px,#c0f592 68px,#bdf593 72px,#bbf593 76px,#baf593 80px,#bbf593 84px,#c0f592 88px,#c8f590 92px,#d2f48e 96px,#dff38c 100px,#e6ef8a 104px,#efea87 108px,#f3df83 112px,#f6d07d 116px,#f5b779 120px,#f29d75 124px,#eb8472 128px,#d5676d 132px,#bf4e66 136px,#ae4261 140px,#b34663 144px,#cf5f6b 148px,#ed8a73 152px,#f5ba79 156px,#f3e284 160px,#e1f28b 164px,#bcf593 168px,#a0f598 172px,#8ef59a 176px,#83f49b 180px,#7df49c 184px,#7af39c 188px,#7bf49c 192px,#7ff49c 196px,#86f49b 200px,#90f59a 204px,#9cf598 208px,#a7f697 212px,#aff695 216px,#b1f695 220px,#adf696 224px,#a7f697 228px,#a3f697 232px,#a2f697 236px,#a2f697 240px,#a0f598 244px,#9bf598 248px,#93f599 252px) -46px 0/252px 2px no-repeat"></div><div style="left:392px;top:290px;width:200px;height:2px;background:linear-gradient(90deg,#80f49c 0px,#81f49b 4px,#83f49b 8px,#85f49b 12px,#88f59a 16px,#8cf59a 20px,#91f599 24px,#96f599 28px,#9cf598 32px,#a2f697 36px,#a9f696 40px,#b0f695 44px,#b7f694 48px,#bef592 52px,#c4f591 56px,#c9f590 60px,#ccf590 64px,#cef58f 68px,#d0f58f 72px,#d1f58f 76px,#d2f48e 80px,#d5f48e 84px,#daf48d 88px,#dff38c 92px,#e3f18b 96px,#e8ee89 100px,#eeea87 104px,#f3e384 108px,#f5d77f 112px,#f6c57b 116px,#f4ac77 120px,#f09574 124px,#e87e72 128px,#d1626c 132px,#bc4d66 136px,#ae4361 140px,#b64864 144px,#d1626c 148px,#ee8d73 152px,#f5bd7a 156px,#f3e484 160px,#e0f38b 164px,#b9f593 168px,#9cf598 172px,#8af59a 176px,#7ef49c 180px,#77f29d 184px,#74f09d 188px,#77f29d 192px,#7ef49c 196px,#87f49b 200px,#94f599 204px,#a4f697 208px,#b6f694 212px,#c6f591 216px,#d1f58f 220px,#d5f48e 224px,#d3f48e 228px,#cef58f 232px,#c7f591 236px,#bef592 240px,#b3f695 244px,#a7f697 248px,#9af598 252px) -46px 0/252px 2px no-repeat"></div><div style="left:394px;top:292px;width:198px;height:2px;background:linear-gradient(90deg,#80f49b 0px,#82f49b 4px,#84f49b 8px,#86f49b 12px,#89f59a 16px,#8df59a 20px,#92f599 24px,#97f599 28px,#9df598 32px,#a4f697 36px,#abf696 40px,#b3f695 44px,#bcf593 48px,#c4f591 52px,#ccf590 56px,#d3f48e 60px,#daf48d 64px,#dff48c 68px,#e1f28b 72px,#e2f18b 76px,#e4f08a 80px,#e6ef8a 84px,#e8ee89 88px,#ebec88 92px,#eeea87 96px,#f2e786 100px,#f3e083 104px,#f5d67f 108px,#f6c87b 112px,#f5b278 116px,#f29b75 120px,#ec8773 124px,#dd706f 128px,#ca5a6a 132px,#b84a64 136px,#b04462 140px,#bc4c65 144px,#d7696d 148px,#ef9274 152px,#f5c37a 156px,#f2e786 160px,#ddf48c 164px,#b4f694 168px,#97f599 172px,#83f49b 176px,#76f19d 180px,#6eed9e 184px,#6ced9e 188px,#71ef9d 192px,#7cf49c 196px,#88f59a 200px,#99f598 204px,#adf696 208px,#c5f591 212px,#dcf48c 216px,#e5f08a 220px,#e9ed89 224px,#eaed88 228px,#e8ee89 232px,#e3f18a 236px,#daf48d 240px,#c7f591 244px,#b3f695 248px,#a1f697 252px) -48px 0/252px 2px no-repeat"></div><div style="left:396px;top:294px;width:196px;height:2px;background:linear-gradient(90deg,#81f49b 0px,#82f49b 4px,#84f49b 8px,#87f49b 12px,#8bf59a 16px,#8ff59a 20px,#94f599 24px,#99f598 28px,#a0f598 32px,#a7f697 36px,#aff695 40px,#b8f694 44px,#c1f592 48px,#cbf590 52px,#d5f48e 56px,#def48c 60px,#e2f18b 64px,#e6ef8a 68px,#eaed88 72px,#edeb87 76px,#f0e987 80px,#f2e785 84px,#f3e384 88px,#f3e083 92px,#f4dc81 96px,#f5d780 100px,#f6d07d 104px,#f5c27a 108px,#f5af78 112px,#f19a75 116px,#ec8773 120px,#de716f 124px,#cd5d6a 128px,#be4e66 132px,#b24562 136px,#b34662 140px,#c55368 144px,#df736f 148px,#f19b75 152px,#f6cc7c 156px,#efea87 160px,#d5f48e 164px,#abf696 168px,#8ef59a 172px,#79f29c 176px,#69eb9f 180px,#62e89f 184px,#63e89f 188px,#6bec9e 192px,#79f39c 196px,#89f59a 200px,#9df598 204px,#b6f694 208px,#d3f48e 212px,#e5f08a 216px,#f0e987 220px,#f3e284 224px,#f3df83 228px,#f3e284 232px,#f0e987 236px,#e6ef89 240px,#d8f48d 244px,#bef592 248px,#a8f697 252px) -50px 0/252px 2px no-repeat"></div><div style="left:396px;top:296px;width:196px;height:2px;background:linear-gradient(90deg,#81f49b 0px,#83f49b 4px,#85f49b 8px,#88f49b 12px,#8cf59a 16px,#90f59a 20px,#95f599 24px,#9bf598 28px,#a2f697 32px,#aaf696 36px,#b3f695 40px,#bdf593 44px,#c7f591 48px,#d3f48e 52px,#def48c 56px,#e3f18a 60px,#e9ee89 64px,#eeea87 68px,#f2e685 72px,#f3e083 76px,#f4da81 80px,#f5d57f 84px,#f6d17d 88px,#f6cd7c 92px,#f6c77b 96px,#f5c07a 100px,#f5b578 104px,#f4a676 108px,#f09474 112px,#ea8172 116px,#d6686d 120px,#c55468 124px,#b44763 128px,#aa4060 132px,#aa3f60 136px,#b54863 140px,#cc5c6a 144px,#ea8072 148px,#f4a676 152px,#f5d47e 156px,#eaed88 160px,#caf590 164px,#a0f697 168px,#82f49b 172px,#68eb9f 176px,#59e4a1 180px,#54e1a1 184px,#58e3a1 188px,#64e99f 192px,#77f19d 196px,#8af59a 200px,#a1f697 204px,#bdf593 208px,#def48c 212px,#ecec88 216px,#f3df83 220px,#f5d47e 224px,#f6d07d 228px,#f5d37e 232px,#f4dd82 236px,#eeea87 240px,#e1f28b 244px,#c7f591 248px,#aef696 252px) -50px 0/252px 2px no-repeat"></div><div style="left:398px;top:298px;width:194px;height:2px;background:linear-gradient(90deg,#81f49b 0px,#83f49b 4px,#86f49b 8px,#89f59a 12px,#8cf59a 16px,#91f599 20px,#97f599 24px,#9df598 28px,#a5f697 32px,#adf696 36px,#b7f694 40px,#c1f592 44px,#cdf58f 48px,#daf48d 52px,#e2f18b 56px,#e8ee89 60px,#efea87 64px,#f3e384 68px,#f4da81 72px,#f5d27d 76px,#f6c87b 80px,#f5bd7a 84px,#f5b578 88px,#f5af78 92px,#f4a977 96px,#f3a276 100px,#f19975 104px,#ed8b73 108px,#e27770 112px,#cd5d6a 116px,#b44763 120px,#9e375c 124px,#943059 128px,#953059 132px,#a1395d 136px,#b94a64 140px,#d5676c 144px,#ed8c73 148px,#f5b478 152px,#f4dc81 156px,#e4f08a 160px,#bbf593 164px,#92f599 168px,#6fee9e 172px,#54e1a1 176px,#46dba3 180px,#44daa3 184px,#4ddea2 188px,#5ee6a0 192px,#74f09d 196px,#8bf59a 200px,#a5f697 204px,#c3f591 208px,#e2f28b 212px,#f1e986 216px,#f5d77f 220px,#f6c77b 224px,#f5bf7a 228px,#f6c57b 232px,#f5d47e 236px,#f2e585 240px,#e6ef8a 244px,#cff58f 248px,#b2f695 252px) -52px 0/252px 2px no-repeat"></div><div style="left:400px;top:300px;width:194px;height:2px;background:linear-gradient(90deg,#81f49b 0px,#83f49b 4px,#86f49b 8px,#89f59a 12px,#8df59a 16px,#92f599 20px,#98f598 24px,#9ff598 28px,#a7f697 32px,#b0f695 36px,#baf593 40px,#c6f591 44px,#d3f48e 48px,#dff38c 52px,#e6ef8a 56px,#edeb87 60px,#f3e485 64px,#f4da81 68px,#f6cf7c 72px,#f5bf7a 76px,#f5b078 80px,#f4a376 84px,#f19b75 88px,#f09474 92px,#ee8f74 96px,#ed8973 100px,#e97f72 104px,#da6d6e 108px,#c65469 112px,#a63d5e 116px,#892955 120px,#77214b 124px,#74204a 128px,#802550 132px,#99335a 136px,#bd4d66 140px,#df726f 144px,#f19875 148px,#f6c57b 152px,#f2e685 156px,#dcf48c 160px,#a9f696 164px,#7ff49c 168px,#58e3a1 172px,#3fd6a4 176px,#39cea5 180px,#3ad0a5 184px,#43d9a4 188px,#59e4a1 192px,#73f09d 196px,#8cf59a 200px,#a7f697 204px,#c7f591 208px,#e4f08a 212px,#f2e685 216px,#f5d27e 220px,#f5be7a 224px,#f5b578 228px,#f5bb79 232px,#f6cf7c 236px,#f3e183 240px,#e8ee89 244px,#d3f48e 248px,#b5f694 252px) -54px 0/252px 2px no-repeat"></div><div style="left:400px;top:302px;width:194px;height:2px;background:linear-gradient(90deg,#82f49b 0px,#84f49b 4px,#86f49b 8px,#8af59a 12px,#8ef59a 16px,#93f599 20px,#99f598 24px,#a0f697 28px,#a9f696 32px,#b2f695 36px,#bdf593 40px,#caf590 44px,#d8f48d 48px,#e2f28b 52px,#e9ed89 56px,#f1e986 60px,#f4de82 64px,#f5d27d 68px,#f5c07a 72px,#f4ac77 76px,#f29c75 80px,#ee8f74 84px,#ec8673 88px,#e97f72 92px,#e37870 96px,#dc706e 100px,#d2636c 104px,#c15067 108px,#a1395d 112px,#7f2450 116px,#621841 120px,#53123a 124px,#57133b 128px,#6d1d47 132px,#932f58 136px,#c35268 140px,#e97f72 144px,#f4a676 148px,#f5d37e 152px,#ebec88 156px,#c7f591 160px,#94f599 164px,#65e99f 168px,#3fd6a4 172px,#33c6a6 176px,#30c1a6 180px,#34c7a6 184px,#3ed5a4 188px,#56e2a1 192px,#73f09d 196px,#8df59a 200px,#a8f696 204px,#c9f590 208px,#e4f08a 212px,#f2e585 216px,#f5d27d 220px,#f5bd7a 224px,#f5b478 228px,#f5ba79 232px,#f6ce7c 236px,#f3e083 240px,#e9ee89 244px,#d4f48e 248px,#b6f694 252px) -54px 0/252px 2px no-repeat"></div><div style="left:402px;top:304px;width:192px;height:2px;background:linear-gradient(90deg,#82f49b 0px,#84f49b 4px,#87f49b 8px,#8af59a 12px,#8ff59a 16px,#94f599 20px,#9af598 24px,#a2f697 28px,#aaf696 32px,#b4f694 36px,#c0f592 40px,#cdf58f 44px,#dcf48c 48px,#e4f18a 52px,#ebec88 56px,#f2e585 60px,#f4d980 64px,#f6ca7b 68px,#f5b478 72px,#f39f75 76px,#ee8f74 80px,#ea8172 84px,#e0746f 88px,#d86a6d 92px,#d2636c 96px,#cb5b6a 100px,#be4e66 104px,#a63c5e 108px,#852752 112px,#611841 116px,#470f32 120px,#3c0c2c 124px,#450e31 128px,#611841 132px,#922e58 136px,#ca5969 140px,#ed8a73 144px,#f5b779 148px,#f4de82 152px,#e2f18b 156px,#b0f695 160px,#7df49c 164px,#48dca3 168px,#32c4a6 172px,#28b6a7 176px,#28b6a7 180px,#2fc0a6 184px,#3cd2a5 188px,#55e2a1 192px,#74f09d 196px,#8ef59a 200px,#a9f696 204px,#c8f590 208px,#e3f18a 212px,#f2e786 216px,#f5d57f 220px,#f5c37a 224px,#f5ba79 228px,#f5c07a 232px,#f6d17d 236px,#f3e284 240px,#e7ee89 244px,#d2f48e 248px,#b5f694 252px) -56px 0/252px 2px no-repeat"></div><div style="left:404px;top:306px;width:190px;height:2px;background:linear-gradient(90deg,#82f49b 0px,#84f49b 4px,#87f49b 8px,#8bf59a 12px,#8ff59a 16px,#94f599 20px,#9bf598 24px,#a2f697 28px,#abf696 32px,#b5f694 36px,#c1f592 40px,#cff58f 44px,#def48c 48px,#e5f08a 52px,#edeb88 56px,#f3e384 60px,#f5d67f 64px,#f6c57b 68px,#f4ad77 72px,#f19975 76px,#ec8773 80px,#e27770 84px,#d7696d 88px,#cf5f6b 92px,#c95869 96px,#c04f67 100px,#b04461 104px,#963159 108px,#74204a 112px,#501138 116px,#380b2a 120px,#2f0825 124px,#3c0c2c 128px,#5e163f 132px,#963159 136px,#d2636c 140px,#f09674 144px,#f6c87b 148px,#f1e986 152px,#d1f58f 156px,#98f598 160px,#60e7a0 164px,#36caa5 168px,#26b3a8 172px,#23a9a7 176px,#24aea8 180px,#2dbda7 184px,#3cd2a5 188px,#58e3a1 192px,#77f29d 196px,#8ff59a 200px,#a8f697 204px,#c5f591 208px,#e1f28b 212px,#efea87 216px,#f4db81 220px,#f6ce7c 224px,#f6c67b 228px,#f6cb7c 232px,#f5d780 236px,#f2e786 240px,#e5f08a 244px,#cef58f 248px,#b3f695 252px) -58px 0/252px 2px no-repeat"></div><div style="left:404px;top:308px;width:190px;height:2px;background:linear-gradient(90deg,#82f49b 0px,#84f49b 4px,#87f49b 8px,#8bf59a 12px,#8ff59a 16px,#95f599 20px,#9bf598 24px,#a3f697 28px,#abf696 32px,#b6f694 36px,#c2f592 40px,#cff58f 44px,#def48c 48px,#e5f08a 52px,#edeb87 56px,#f3e284 60px,#f5d57f 64px,#f6c47b 68px,#f4ac77 72px,#f19875 76px,#ec8673 80px,#e17670 84px,#d6686d 88px,#ce5e6b 92px,#c85769 96px,#bf4f66 100px,#ae4261 104px,#943059 108px,#711e49 112px,#4e1036 116px,#360a28 120px,#2e0824 124px,#3d0c2d 128px,#641942 132px,#a23a5d 136px,#de716f 140px,#f4a476 144px,#f5d67f 148px,#e7ee89 152px,#b9f593 156px,#80f49b 160px,#43d9a4 164px,#2ab9a7 168px,#22a5a7 172px,#21a1a6 176px,#23aaa7 180px,#2dbda7 184px,#3ed4a4 188px,#5ce5a0 192px,#7af39c 196px,#90f599 200px,#a6f697 204px,#c0f592 208px,#def48c 212px,#eaed88 216px,#f3e384 220px,#f5d880 224px,#f5d37e 228px,#f5d67f 232px,#f3e083 236px,#edeb87 240px,#e1f28b 244px,#c8f590 248px,#b0f695 252px) -58px 0/252px 2px no-repeat"></div><div style="left:406px;top:310px;width:188px;height:2px;background:linear-gradient(90deg,#82f49b 0px,#84f49b 4px,#87f49b 8px,#8bf59a 12px,#8ff59a 16px,#95f599 20px,#9bf598 24px,#a3f697 28px,#abf696 32px,#b6f694 36px,#c2f592 40px,#cff58f 44px,#def48c 48px,#e5f08a 52px,#edeb88 56px,#f3e484 60px,#f5d77f 64px,#f6c77b 68px,#f5b178 72px,#f29d75 76px,#ed8c73 80px,#e87e72 84px,#dd716f 88px,#d6686d 92px,#d0616b 96px,#c95869 100px,#ba4b65 104px,#9f385c 108px,#7c234e 112px,#58143c 116px,#400d2e 120px,#390b2a 124px,#490f34 128px,#74204a 132px,#b54763 136px,#eb8272 140px,#f5b578 144px,#f3e183 148px,#def48c 152px,#a1f697 156px,#65e99f 160px,#35c9a6 164px,#23aba7 168px,#209da6 172px,#209ea6 176px,#23aca8 180px,#30c2a6 184px,#42d9a4 188px,#63e89f 192px,#7ef49c 196px,#91f599 200px,#a4f697 204px,#bbf593 208px,#d5f48e 212px,#e5f08a 216px,#efea87 220px,#f3e284 224px,#f4de82 228px,#f3e183 232px,#f1e886 236px,#e8ee89 240px,#dcf48c 244px,#c2f592 248px,#acf696 252px) -60px 0/252px 2px no-repeat"></div><div style="left:408px;top:312px;width:188px;height:2px;background:linear-gradient(90deg,#82f49b 0px,#84f49b 4px,#87f49b 8px,#8bf59a 12px,#8ff59a 16px,#94f599 20px,#9bf598 24px,#a2f697 28px,#abf696 32px,#b5f694 36px,#c0f592 40px,#cdf58f 44px,#dcf48c 48px,#e4f18a 52px,#ebec88 56px,#f2e685 60px,#f4db81 64px,#f6ce7c 68px,#f5ba79 72px,#f4a776 76px,#f09775 80px,#ed8b73 84px,#eb8272 88px,#e57a71 92px,#e0746f 96px,#d96b6d 100px,#cd5d6a 104px,#b74864 108px,#943059 112px,#701e48 116px,#55123a 120px,#4e1037 124px,#601740 128px,#8d2b56 132px,#cb5a6a 136px,#ef9274 140px,#f6c87b 144px,#efea87 148px,#c8f590 152px,#8cf59a 156px,#4ddea2 160px,#2cbba7 164px,#21a3a7 168px,#209ba6 172px,#21a1a6 176px,#25b2a8 180px,#36c9a5 184px,#4cdea2 188px,#6aec9e 192px,#81f49b 196px,#91f599 200px,#a2f697 204px,#b5f694 208px,#ccf590 212px,#e0f38b 216px,#e8ee89 220px,#efea87 224px,#f1e986 228px,#f0e987 232px,#eaed88 236px,#e2f18b 240px,#d2f48e 244px,#bbf593 248px,#a8f696 252px) -62px 0/252px 2px no-repeat"></div><div style="left:408px;top:314px;width:188px;height:2px;background:linear-gradient(90deg,#82f49b 0px,#84f49b 4px,#87f49b 8px,#8af59a 12px,#8ff59a 16px,#94f599 20px,#9af598 24px,#a1f697 28px,#aaf696 32px,#b3f695 36px,#bff592 40px,#cbf590 44px,#d9f48d 48px,#e2f28b 52px,#e9ee89 56px,#f0e987 60px,#f3e083 64px,#f5d57f 68px,#f6c87b 72px,#f5b779 76px,#f4a877 80px,#f29d75 84px,#f09574 88px,#ee8f74 92px,#ed8a73 96px,#eb8472 100px,#e27770 104px,#d0616b 108px,#b44763 112px,#912d57 116px,#76214b 120px,#6f1d47 124px,#812550 128px,#ac4160 132px,#de726f 136px,#f4a376 140px,#f5d67f 144px,#e6ef8a 148px,#b4f694 152px,#7af39c 156px,#3ed5a4 160px,#27b4a8 164px,#21a1a6 168px,#209ea6 172px,#22a9a7 176px,#2cbca7 180px,#3cd3a5 184px,#58e3a1 188px,#71ef9d 192px,#83f49b 196px,#91f599 200px,#a0f598 204px,#b0f695 208px,#c3f591 212px,#d7f48d 216px,#e2f28b 220px,#e7ee89 224px,#e9ed89 228px,#e8ee89 232px,#e4f18a 236px,#dbf48d 240px,#c8f590 244px,#b5f694 248px,#a5f697 252px) -62px 0/252px 2px no-repeat"></div><div style="left:410px;top:316px;width:186px;height:2px;background:linear-gradient(90deg,#82f49b 0px,#84f49b 4px,#86f49b 8px,#8af59a 12px,#8ef59a 16px,#93f599 20px,#99f598 24px,#a0f697 28px,#a8f696 32px,#b1f695 36px,#bcf593 40px,#c8f590 44px,#d4f48e 48px,#e0f38b 52px,#e6ef8a 56px,#eceb88 60px,#f2e685 64px,#f4dd82 68px,#f5d47e 72px,#f6c97b 76px,#f5bd7a 80px,#f5b378 84px,#f4ac77 88px,#f4a676 92px,#f3a176 96px,#f19b75 100px,#ee9074 104px,#e97e72 108px,#d2636c 112px,#b64863 116px,#9b355b 120px,#943059 124px,#a53c5e 128px,#ca5a6a 132px,#ec8873 136px,#f5b779 140px,#f3e183 144px,#def48c 148px,#a3f697 152px,#6aeb9e 156px,#39cea5 160px,#26b2a8 164px,#22a6a7 168px,#22a7a7 172px,#27b4a8 176px,#35c8a6 180px,#48dca3 184px,#62e89f 188px,#77f29d 192px,#85f49b 196px,#91f599 200px,#9ef598 204px,#acf696 208px,#bcf593 212px,#ccf590 216px,#dbf48d 220px,#e1f28b 224px,#e3f18b 228px,#e2f28b 232px,#def48c 236px,#d0f58f 240px,#c0f592 244px,#b0f695 248px,#a2f697 252px) -64px 0/252px 2px no-repeat"></div><div style="left:410px;top:318px;width:186px;height:2px;background:linear-gradient(90deg,#81f49b 0px,#83f49b 4px,#86f49b 8px,#89f59a 12px,#8df59a 16px,#92f599 20px,#98f599 24px,#9ff598 28px,#a6f697 32px,#aff695 36px,#b9f593 40px,#c4f591 44px,#cff58f 48px,#dcf48c 52px,#e3f18b 56px,#e8ee89 60px,#eeea87 64px,#f2e585 68px,#f4de82 72px,#f5d77f 76px,#f6d17d 80px,#f6cb7c 84px,#f6c67b 88px,#f5c27a 92px,#f5bd7a 96px,#f5b578 100px,#f4a877 104px,#f09674 108px,#ea8072 112px,#d3646c 116px,#c04f67 120px,#b84964 124px,#c65569 128px,#e0746f 132px,#f19a75 136px,#f6ca7b 140px,#f0e987 144px,#cef58f 148px,#96f599 152px,#5fe7a0 156px,#38cca5 160px,#29b6a7 164px,#24afa8 168px,#27b4a8 172px,#31c3a6 176px,#3ed5a4 180px,#56e2a1 184px,#6cec9e 188px,#7cf49c 192px,#87f49b 196px,#91f599 200px,#9bf598 204px,#a7f697 208px,#b5f694 212px,#c3f591 216px,#d0f58f 220px,#d9f48d 224px,#dcf48c 228px,#daf48d 232px,#d2f48e 236px,#c7f591 240px,#b9f593 244px,#abf696 248px,#9ff598 252px) -64px 0/252px 2px no-repeat"></div><div style="left:412px;top:320px;width:184px;height:2px;background:linear-gradient(90deg,#81f49b 0px,#83f49b 4px,#86f49b 8px,#89f59a 12px,#8cf59a 16px,#91f599 20px,#97f599 24px,#9df598 28px,#a4f697 32px,#acf696 36px,#b5f694 40px,#bff592 44px,#caf590 48px,#d5f48e 52px,#dff38c 56px,#e4f08a 60px,#e9ee89 64px,#edeb87 68px,#f2e886 72px,#f3e384 76px,#f3de82 80px,#f4db81 84px,#f4d980 88px,#f5d67f 92px,#f5d37e 96px,#f6ce7c 100px,#f5c17a 104px,#f4ac77 108px,#f09574 112px,#e97f72 116px,#d7696d 120px,#d1626c 124px,#db6d6e 128px,#ec8873 132px,#f4ab77 136px,#f5d57f 140px,#e9ed89 144px,#c1f592 148px,#8ef59a 152px,#5ce5a0 156px,#3acfa5 160px,#2fc0a6 164px,#2dbca7 168px,#32c4a6 172px,#3bd1a5 176px,#4ddea2 180px,#62e89f 184px,#72ef9d 188px,#7ef49c 192px,#87f49b 196px,#8ff59a 200px,#99f598 204px,#a4f697 208px,#b0f695 212px,#bcf593 216px,#c7f591 220px,#cef58f 224px,#d1f58f 228px,#cff58f 232px,#c9f590 236px,#bff592 240px,#b3f695 244px,#a7f697 248px,#9cf598 252px) -66px 0/252px 2px no-repeat"></div><div style="left:414px;top:322px;width:182px;height:2px;background:linear-gradient(90deg,#81f49b 0px,#83f49b 4px,#85f49b 8px,#88f49b 12px,#8bf59a 16px,#90f59a 20px,#95f599 24px,#9bf598 28px,#a2f697 32px,#a9f696 36px,#b2f695 40px,#bbf593 44px,#c4f591 48px,#cef58f 52px,#d8f48d 56px,#e0f38c 60px,#e4f18a 64px,#e7ee89 68px,#ebec88 72px,#eeeb87 76px,#f0e987 80px,#f2e886 84px,#f2e785 88px,#f3e585 92px,#f3e284 96px,#f4dc82 100px,#f5d37e 104px,#f5c17a 108px,#f4a776 112px,#ef9074 116px,#e97f72 120px,#e27770 124px,#ea8172 128px,#f09674 132px,#f5ba79 136px,#f4dd82 140px,#e4f08a 144px,#b9f593 148px,#8af59a 152px,#5fe6a0 156px,#3fd7a4 160px,#37cca5 164px,#37cba5 168px,#3cd3a5 172px,#4adda3 176px,#5be5a0 180px,#6aec9e 184px,#76f19d 188px,#7ef49c 192px,#85f49b 196px,#8df59a 200px,#96f599 204px,#a0f598 208px,#abf696 212px,#b6f694 216px,#bff592 220px,#c6f591 224px,#c9f590 228px,#c7f591 232px,#c1f592 236px,#b9f593 240px,#aef696 244px,#a4f697 248px,#9af598 252px) -68px 0/252px 2px no-repeat"></div><div style="left:414px;top:324px;width:182px;height:2px;background:linear-gradient(90deg,#81f49b 0px,#82f49b 4px,#84f49b 8px,#87f49b 12px,#8af59a 16px,#8ef59a 20px,#93f599 24px,#99f598 28px,#9ff598 32px,#a6f697 36px,#adf696 40px,#b6f694 44px,#bef592 48px,#c7f591 52px,#cff58f 56px,#d8f48d 60px,#dff48c 64px,#e2f28b 68px,#e4f08a 72px,#e6ef8a 76px,#e8ee89 80px,#e9ed89 84px,#eaed88 88px,#ebec88 92px,#edeb87 96px,#f2e886 100px,#f3df82 104px,#f6d17d 108px,#f5b879 112px,#f29e75 116px,#ed8c73 120px,#eb8573 124px,#ed8d73 128px,#f3a176 132px,#f6c57b 136px,#f3e384 140px,#e1f28b 144px,#b4f694 148px,#8bf59a 152px,#67ea9f 156px,#4ddea2 160px,#41d9a4 164px,#43d9a4 168px,#4ddea2 172px,#59e4a1 176px,#65e99f 180px,#6eed9e 184px,#75f19d 188px,#7bf39c 192px,#81f49b 196px,#88f59a 200px,#91f599 204px,#9bf598 208px,#a6f697 212px,#b0f695 216px,#b9f593 220px,#bff592 224px,#c1f592 228px,#c0f592 232px,#bbf593 236px,#b4f694 240px,#aaf696 244px,#a1f697 248px,#98f598 252px) -68px 0/252px 2px no-repeat"></div><div style="left:416px;top:326px;width:180px;height:2px;background:linear-gradient(90deg,#80f49b 0px,#82f49b 4px,#84f49b 8px,#86f49b 12px,#89f59a 16px,#8df59a 20px,#91f599 24px,#97f599 28px,#9cf598 32px,#a3f697 36px,#a9f696 40px,#b1f695 44px,#b8f694 48px,#c0f592 52px,#c7f591 56px,#cef58f 60px,#d5f48e 64px,#daf48d 68px,#def48c 72px,#e0f38b 76px,#e1f28b 80px,#e2f28b 84px,#e2f18b 88px,#e3f18a 92px,#e6ef8a 96px,#eaed88 100px,#f2e886 104px,#f4d980 108px,#f6c57b 112px,#f4a977 116px,#f09775 120px,#ee9074 124px,#f09674 128px,#f4ac77 132px,#f6ce7c 136px,#f2e886 140px,#def48c 144px,#b2f695 148px,#8ef59a 152px,#71ef9d 156px,#5de5a0 160px,#55e2a1 164px,#56e2a1 168px,#5ce5a0 172px,#63e89f 176px,#69eb9f 180px,#6cec9e 184px,#6eed9e 188px,#72ef9d 192px,#78f29d 196px,#81f49b 200px,#8bf59a 204px,#96f599 208px,#a1f697 212px,#abf696 216px,#b3f695 220px,#b9f593 224px,#bbf593 228px,#baf593 232px,#b6f694 236px,#aff695 240px,#a7f697 244px,#9ef598 248px,#96f599 252px) -70px 0/252px 2px no-repeat"></div><div style="left:424px;top:328px;width:172px;height:2px;background:linear-gradient(90deg,#80f49c 0px,#81f49b 4px,#83f49b 8px,#85f49b 12px,#88f59a 16px,#8cf59a 20px,#90f59a 24px,#94f599 28px,#99f598 32px,#9ff598 36px,#a5f697 40px,#acf696 44px,#b2f695 48px,#b9f593 52px,#c0f592 56px,#c5f591 60px,#cbf590 64px,#cff58f 68px,#d3f48e 72px,#d5f48e 76px,#d7f48d 80px,#d7f48d 84px,#d9f48d 88px,#dbf48d 92px,#dff38c 96px,#e4f08a 100px,#eceb88 104px,#f3e183 108px,#f6d07d 112px,#f5b679 116px,#f3a176 120px,#f19a75 124px,#f3a076 128px,#f5b679 132px,#f5d47e 136px,#efea87 140px,#daf48d 144px,#b2f695 148px,#92f599 152px,#7cf49c 156px,#6cec9e 160px,#65e99f 164px,#65e99f 168px,#67ea9f 172px,#68ea9f 176px,#66ea9f 180px,#63e89f 184px,#61e7a0 188px,#62e89f 192px,#68eb9f 196px,#74f09d 200px,#81f49b 204px,#8ef59a 208px,#9bf598 212px,#a5f697 216px,#aef696 220px,#b4f694 224px,#b6f694 228px,#b5f694 232px,#b1f695 236px,#abf696 240px,#a4f697 244px,#9cf598 248px,#94f599 252px) -78px 0/252px 2px no-repeat"></div><div style="left:432px;top:330px;width:162px;height:2px;background:linear-gradient(90deg,#7ff49c 0px,#81f49b 4px,#82f49b 8px,#84f49b 12px,#87f49b 16px,#8af59a 20px,#8ef59a 24px,#92f599 28px,#97f599 32px,#9cf598 36px,#a1f697 40px,#a7f697 44px,#adf696 48px,#b3f695 52px,#b8f694 56px,#bdf593 60px,#c2f592 64px,#c5f591 68px,#c8f590 72px,#c9f590 76px,#caf590 80px,#cbf590 84px,#ccf590 88px,#cef58f 92px,#d4f48e 96px,#dff38c 100px,#e7ef89 104px,#f2e886 108px,#f4d880 112px,#f5c37a 116px,#f5af78 120px,#f4a776 124px,#f4ae77 128px,#f5c37a 132px,#f4da81 136px,#ecec88 140px,#d6f48e 144px,#b1f695 148px,#96f599 152px,#84f49b 156px,#78f29d 160px,#72ef9d 164px,#6fee9e 168px,#6cec9e 172px,#66ea9f 176px,#5ee6a0 180px,#54e1a1 184px,#4ddea2 188px,#4cdea2 192px,#53e1a2 196px,#60e7a0 200px,#73f09d 204px,#85f49b 208px,#93f599 212px,#9ff598 216px,#a8f696 220px,#aef696 224px,#b1f695 228px,#b0f695 232px,#adf696 236px,#a7f697 240px,#a0f697 244px,#99f598 248px,#92f599 252px) -86px 0/252px 2px no-repeat"></div><div style="left:440px;top:332px;width:152px;height:2px;background:linear-gradient(90deg,#7ff49c 0px,#80f49b 4px,#82f49b 8px,#84f49b 12px,#86f49b 16px,#89f59a 20px,#8cf59a 24px,#90f59a 28px,#94f599 32px,#98f598 36px,#9df598 40px,#a2f697 44px,#a7f697 48px,#acf696 52px,#b1f695 56px,#b6f694 60px,#b9f593 64px,#bcf593 68px,#bef592 72px,#bff592 76px,#c0f592 80px,#c0f592 84px,#c1f592 88px,#c3f591 92px,#c9f590 96px,#d4f48e 100px,#e1f28b 104px,#ecec88 108px,#f3e183 112px,#f5d27d 116px,#f5c17a 120px,#f5b979 124px,#f5bf7a 128px,#f6d17d 132px,#f3e284 136px,#e7ee89 140px,#d0f58f 144px,#b1f695 148px,#99f598 152px,#8af59a 156px,#80f49b 160px,#7af39c 164px,#74f09d 168px,#6ced9e 172px,#60e7a0 176px,#51e0a2 180px,#41d8a4 184px,#3bd0a5 188px,#39cea5 192px,#3cd3a5 196px,#49dca3 200px,#60e7a0 204px,#79f29c 208px,#8bf59a 212px,#99f598 216px,#a3f697 220px,#a9f696 224px,#acf696 228px,#abf696 232px,#a8f696 236px,#a3f697 240px,#9df598 244px,#97f599 248px,#91f599 252px) -94px 0/252px 2px no-repeat"></div><div style="left:448px;top:334px;width:136px;height:2px;background:linear-gradient(90deg,#7ff49c 0px,#80f49c 4px,#81f49b 8px,#83f49b 12px,#85f49b 16px,#87f49b 20px,#8af59a 24px,#8df59a 28px,#91f599 32px,#95f599 36px,#9af598 40px,#9ef598 44px,#a2f697 48px,#a7f697 52px,#abf696 56px,#aef696 60px,#b2f695 64px,#b4f694 68px,#b5f694 72px,#b6f694 76px,#b7f694 80px,#b7f694 84px,#b7f694 88px,#b9f593 92px,#bff592 96px,#c9f590 100px,#d9f48d 104px,#e5f08a 108px,#f0e987 112px,#f4de82 116px,#f5d37e 120px,#f6cf7c 124px,#f5d27e 128px,#f4dc82 132px,#efea87 136px,#e2f18b 140px,#c9f590 144px,#aef696 148px,#9bf598 152px,#8ef59a 156px,#85f49b 160px,#7ff49c 164px,#77f19d 168px,#6aec9e 172px,#58e3a1 176px,#42d9a4 180px,#37cba5 184px,#2fbfa6 188px,#2cbba7 192px,#30c1a6 196px,#39cea5 200px,#4ddea2 204px,#6aec9e 208px,#83f49b 212px,#93f599 216px,#9ef598 220px,#a4f697 224px,#a7f697 228px,#a7f697 232px,#a4f697 236px,#a0f598 240px,#9af598 244px,#94f599 248px,#8ff59a 252px) -102px 0/252px 2px no-repeat"></div><div style="left:456px;top:336px;width:120px;height:2px;background:linear-gradient(90deg,#7ef49c 0px,#7ff49c 4px,#80f49b 8px,#82f49b 12px,#84f49b 16px,#86f49b 20px,#88f59a 24px,#8bf59a 28px,#8ff59a 32px,#92f599 36px,#96f599 40px,#9af598 44px,#9ef598 48px,#a1f697 52px,#a5f697 56px,#a8f696 60px,#abf696 64px,#acf696 68px,#aef696 72px,#aef696 76px,#aff695 80px,#aff695 84px,#aff695 88px,#b1f695 92px,#b5f694 96px,#bef592 100px,#ccf590 104px,#def48c 108px,#e7ef89 112px,#f0e987 116px,#f3e284 120px,#f3df82 124px,#f3e183 128px,#f1e986 132px,#e7ee89 136px,#daf48d 140px,#c0f592 144px,#abf696 148px,#9bf598 152px,#90f59a 156px,#88f49b 160px,#81f49b 164px,#77f29d 168px,#67ea9f 172px,#51e0a2 176px,#3bd1a5 180px,#2ebfa7 184px,#24b1a8 188px,#23aca8 192px,#25b1a8 196px,#30c0a6 200px,#3ed6a4 204px,#5ee6a0 208px,#7bf39c 212px,#8df59a 216px,#98f598 220px,#9ff598 224px,#a2f697 228px,#a2f697 232px,#a0f598 236px,#9cf598 240px,#97f599 244px,#92f599 248px,#8df59a 252px) -110px 0/252px 2px no-repeat"></div><div style="left:464px;top:338px;width:104px;height:2px;background:linear-gradient(90deg,#7ef49c 0px,#7ff49c 4px,#80f49c 8px,#81f49b 12px,#83f49b 16px,#85f49b 20px,#87f49b 24px,#89f59a 28px,#8cf59a 32px,#8ff59a 36px,#93f599 40px,#96f599 44px,#99f598 48px,#9df598 52px,#a0f598 56px,#a2f697 60px,#a4f697 64px,#a6f697 68px,#a7f697 72px,#a7f697 76px,#a8f697 80px,#a8f697 84px,#a8f697 88px,#a9f696 92px,#adf696 96px,#b4f694 100px,#bef592 104px,#cef58f 108px,#def48c 112px,#e5f08a 116px,#ebec88 120px,#edeb88 124px,#ecec88 128px,#e7ef89 132px,#dff38c 136px,#cbf590 140px,#b7f694 144px,#a6f697 148px,#9af598 152px,#90f599 156px,#89f59a 160px,#82f49b 164px,#77f29d 168px,#65e99f 172px,#4cdea2 176px,#38cca5 180px,#29b8a7 184px,#22a8a7 188px,#21a3a7 192px,#22a8a7 196px,#2ab8a7 200px,#3acfa5 204px,#55e2a1 208px,#74f09d 212px,#88f49b 216px,#94f599 220px,#9bf598 224px,#9ef598 228px,#9ef598 232px,#9cf598 236px,#99f598 240px,#94f599 244px,#8ff59a 248px,#8bf59a 252px) -118px 0/252px 2px no-repeat"></div><div style="left:472px;top:340px;width:88px;height:2px;background:linear-gradient(90deg,#7ef49c 0px,#7ef49c 4px,#7ff49c 8px,#80f49b 12px,#82f49b 16px,#83f49b 20px,#85f49b 24px,#87f49b 28px,#8af59a 32px,#8df59a 36px,#8ff59a 40px,#92f599 44px,#95f599 48px,#98f599 52px,#9bf598 56px,#9df598 60px,#9ff598 64px,#a0f697 68px,#a1f697 72px,#a1f697 76px,#a1f697 80px,#a1f697 84px,#a2f697 88px,#a3f697 92px,#a5f697 96px,#aaf696 100px,#b2f695 104px,#bef592 108px,#cbf590 112px,#d8f48d 116px,#e0f38b 120px,#e2f28b 124px,#e0f38b 128px,#dbf48d 132px,#cdf58f 136px,#bdf593 140px,#aef696 144px,#a2f697 148px,#98f599 152px,#90f59a 156px,#89f59a 160px,#82f49b 164px,#77f29d 168px,#65e99f 172px,#4cdea2 176px,#37cca5 180px,#29b7a7 184px,#22a8a7 188px,#21a2a7 192px,#22a7a7 196px,#29b7a7 200px,#39cda5 204px,#53e1a2 208px,#71ef9e 212px,#85f49b 216px,#90f599 220px,#97f599 224px,#9af598 228px,#9af598 232px,#98f598 236px,#95f599 240px,#91f599 244px,#8df59a 248px,#89f59a 252px) -126px 0/252px 2px no-repeat"></div><div style="left:480px;top:342px;width:72px;height:2px;background:linear-gradient(90deg,#7ef49c 0px,#7ef49c 4px,#7ff49c 8px,#80f49c 12px,#81f49b 16px,#82f49b 20px,#84f49b 24px,#86f49b 28px,#88f49b 32px,#8af59a 36px,#8cf59a 40px,#8ff59a 44px,#91f599 48px,#94f599 52px,#96f599 56px,#98f599 60px,#9af598 64px,#9bf598 68px,#9bf598 72px,#9cf598 76px,#9cf598 80px,#9cf598 84px,#9cf598 88px,#9df598 92px,#9ff598 96px,#a2f697 100px,#a8f697 104px,#b0f695 108px,#baf593 112px,#c3f591 116px,#cbf590 120px,#cef58f 124px,#ccf590 128px,#c6f591 132px,#bcf593 136px,#b1f695 140px,#a6f697 144px,#9df598 148px,#95f599 152px,#8ff59a 156px,#89f59a 160px,#82f49b 164px,#78f29d 168px,#67ea9f 172px,#50e0a2 176px,#3bd1a5 180px,#2ebea7 184px,#24b0a8 188px,#23aaa7 192px,#24afa8 196px,#2dbda7 200px,#3cd2a5 204px,#56e2a1 208px,#71ef9e 212px,#83f49b 216px,#8df59a 220px,#93f599 224px,#96f599 228px,#96f599 232px,#95f599 236px,#92f599 240px,#8ff59a 244px,#8bf59a 248px,#88f49b 252px) -134px 0/252px 2px no-repeat"></div><div style="left:490px;top:344px;width:46px;height:2px;background:linear-gradient(90deg,#7df49c 0px,#7ef49c 4px,#7ef49c 8px,#7ff49c 12px,#80f49b 16px,#81f49b 20px,#83f49b 24px,#84f49b 28px,#86f49b 32px,#88f49b 36px,#8af59a 40px,#8cf59a 44px,#8ef59a 48px,#90f599 52px,#92f599 56px,#94f599 60px,#95f599 64px,#96f599 68px,#97f599 72px,#97f599 76px,#97f599 80px,#97f599 84px,#97f599 88px,#98f599 92px,#99f598 96px,#9bf598 100px,#9ff598 104px,#a5f697 108px,#abf696 112px,#b2f695 116px,#b7f694 120px,#baf593 124px,#b9f593 128px,#b5f694 132px,#aef696 136px,#a7f697 140px,#9ff598 144px,#98f598 148px,#93f599 152px,#8df59a 156px,#88f59a 160px,#82f49b 164px,#7af39c 168px,#6cec9e 172px,#59e3a1 176px,#42d9a4 180px,#36c9a5 184px,#2dbea7 188px,#2ab9a7 192px,#2dbda7 196px,#36c9a5 200px,#43d9a4 204px,#5de6a0 208px,#73f09d 212px,#83f49b 216px,#8bf59a 220px,#90f599 224px,#92f599 228px,#93f599 232px,#91f599 236px,#8ff59a 240px,#8cf59a 244px,#89f59a 248px,#86f49b 252px) -144px 0/252px 2px no-repeat"></div><div style="left:498px;top:346px;width:16px;height:2px;background:linear-gradient(90deg,#7df49c 0px,#7df49c 4px,#7ef49c 8px,#7ff49c 12px,#7ff49c 16px,#80f49b 20px,#82f49b 24px,#83f49b 28px,#84f49b 32px,#86f49b 36px,#88f49b 40px,#89f59a 44px,#8bf59a 48px,#8df59a 52px,#8ef59a 56px,#90f59a 60px,#91f599 64px,#92f599 68px,#92f599 72px,#92f599 76px,#93f599 80px,#93f599 84px,#93f599 88px,#93f599 92px,#94f599 96px,#96f599 100px,#99f598 104px,#9cf598 108px,#a1f697 112px,#a5f697 116px,#a9f696 120px,#abf696 124px,#aaf696 128px,#a8f696 132px,#a4f697 136px,#9ff598 140px,#9af598 144px,#95f599 148px,#90f599 152px,#8cf59a 156px,#88f49b 160px,#83f49b 164px,#7cf49c 168px,#71ef9d 172px,#62e89f 176px,#51e0a2 180px,#40d7a4 184px,#39cea5 188px,#37cba5 192px,#39cea5 196px,#40d7a4 200px,#52e1a2 204px,#66ea9f 208px,#78f29d 212px,#83f49b 216px,#8af59a 220px,#8ef59a 224px,#8ff59a 228px,#8ff59a 232px,#8ef59a 236px,#8cf59a 240px,#8af59a 244px,#87f49b 248px,#85f49b 252px) -152px 0/252px 2px no-repeat"></div><div style="left:370px;top:67px;width:0;height:287px;border-left:1px dotted rgba(235,235,235,.22)"></div><div style="left:415px;top:67px;width:0;height:287px;border-left:1px dotted rgba(235,235,235,.22)"></div><div style="left:459px;top:67px;width:0;height:287px;border-left:1px dotted rgba(235,235,235,.22)"></div><div style="left:504px;top:67px;width:0;height:287px;border-left:1px dotted rgba(235,235,235,.22)"></div><div style="left:549px;top:67px;width:0;height:287px;border-left:1px dotted rgba(235,235,235,.22)"></div><div style="left:593px;top:67px;width:0;height:287px;border-left:1px dotted rgba(235,235,235,.22)"></div><div style="left:326px;top:320px;width:287px;height:0;border-top:1px dotted rgba(235,235,235,.22)"></div><div style="left:326px;top:287px;width:287px;height:0;border-top:1px dotted rgba(235,235,235,.22)"></div><div style="left:326px;top:253px;width:287px;height:0;border-top:1px dotted rgba(235,235,235,.22)"></div><div style="left:326px;top:220px;width:287px;height:0;border-top:1px dotted rgba(235,235,235,.22)"></div><div style="left:326px;top:186px;width:287px;height:0;border-top:1px dotted rgba(235,235,235,.22)"></div><div style="left:326px;top:153px;width:287px;height:0;border-top:1px dotted rgba(235,235,235,.22)"></div><div style="left:326px;top:120px;width:287px;height:0;border-top:1px dotted rgba(235,235,235,.22)"></div><div style="left:326px;top:86px;width:287px;height:0;border-top:1px dotted rgba(235,235,235,.22)"></div><div style="left:482px;top:67px;width:2px;height:287px;background:#1fa01f"></div><div style="left:326px;top:196px;width:287px;height:2px;background:#a020a0"></div><div style="left:325px;top:66px;width:289px;height:2px;background:#3a9c9c"></div><div style="left:325px;top:352px;width:289px;height:2px;background:#3a9c9c"></div><div style="left:325px;top:66px;width:2px;height:288px;background:#3a9c9c"></div><div style="left:612px;top:66px;width:2px;height:288px;background:#3a9c9c"></div><div style="left:326px;top:62px;width:1px;height:4px;background:#ccc"></div><div style="left:326px;top:354px;width:1px;height:3px;background:#ccc"></div><div class="t" style="left:226.5px;width:200px;text-align:center;top:56.84px;font-size:5.6px;line-height:6.72px;color:#e4e4e4;letter-spacing:-0.30px;font-weight:400;-webkit-text-stroke:0.1px currentColor;">0</div><div class="t" style="left:226.5px;width:200px;text-align:center;top:357.84px;font-size:5.6px;line-height:6.72px;color:#e4e4e4;letter-spacing:-0.30px;font-weight:400;-webkit-text-stroke:0.1px currentColor;">0</div><div style="left:370px;top:62px;width:1px;height:4px;background:#ccc"></div><div style="left:370px;top:354px;width:1px;height:3px;background:#ccc"></div><div class="t" style="left:270.5px;width:200px;text-align:center;top:56.84px;font-size:5.6px;line-height:6.72px;color:#e4e4e4;letter-spacing:-0.30px;font-weight:400;-webkit-text-stroke:0.1px currentColor;">50</div><div class="t" style="left:270.5px;width:200px;text-align:center;top:357.84px;font-size:5.6px;line-height:6.72px;color:#e4e4e4;letter-spacing:-0.30px;font-weight:400;-webkit-text-stroke:0.1px currentColor;">50</div><div style="left:415px;top:62px;width:1px;height:4px;background:#ccc"></div><div style="left:415px;top:354px;width:1px;height:3px;background:#ccc"></div><div class="t" style="left:315.5px;width:200px;text-align:center;top:56.84px;font-size:5.6px;line-height:6.72px;color:#e4e4e4;letter-spacing:-0.30px;font-weight:400;-webkit-text-stroke:0.1px currentColor;">100</div><div class="t" style="left:315.5px;width:200px;text-align:center;top:357.84px;font-size:5.6px;line-height:6.72px;color:#e4e4e4;letter-spacing:-0.30px;font-weight:400;-webkit-text-stroke:0.1px currentColor;">100</div><div style="left:459px;top:62px;width:1px;height:4px;background:#ccc"></div><div style="left:459px;top:354px;width:1px;height:3px;background:#ccc"></div><div class="t" style="left:359.5px;width:200px;text-align:center;top:56.84px;font-size:5.6px;line-height:6.72px;color:#e4e4e4;letter-spacing:-0.30px;font-weight:400;-webkit-text-stroke:0.1px currentColor;">150</div><div class="t" style="left:359.5px;width:200px;text-align:center;top:357.84px;font-size:5.6px;line-height:6.72px;color:#e4e4e4;letter-spacing:-0.30px;font-weight:400;-webkit-text-stroke:0.1px currentColor;">150</div><div style="left:504px;top:62px;width:1px;height:4px;background:#ccc"></div><div style="left:504px;top:354px;width:1px;height:3px;background:#ccc"></div><div class="t" style="left:404.5px;width:200px;text-align:center;top:56.84px;font-size:5.6px;line-height:6.72px;color:#e4e4e4;letter-spacing:-0.30px;font-weight:400;-webkit-text-stroke:0.1px currentColor;">200</div><div class="t" style="left:404.5px;width:200px;text-align:center;top:357.84px;font-size:5.6px;line-height:6.72px;color:#e4e4e4;letter-spacing:-0.30px;font-weight:400;-webkit-text-stroke:0.1px currentColor;">200</div><div style="left:549px;top:62px;width:1px;height:4px;background:#ccc"></div><div style="left:549px;top:354px;width:1px;height:3px;background:#ccc"></div><div class="t" style="left:449.5px;width:200px;text-align:center;top:56.84px;font-size:5.6px;line-height:6.72px;color:#e4e4e4;letter-spacing:-0.30px;font-weight:400;-webkit-text-stroke:0.1px currentColor;">250</div><div class="t" style="left:449.5px;width:200px;text-align:center;top:357.84px;font-size:5.6px;line-height:6.72px;color:#e4e4e4;letter-spacing:-0.30px;font-weight:400;-webkit-text-stroke:0.1px currentColor;">250</div><div style="left:593px;top:62px;width:1px;height:4px;background:#ccc"></div><div style="left:593px;top:354px;width:1px;height:3px;background:#ccc"></div><div class="t" style="left:493.5px;width:200px;text-align:center;top:56.48px;font-size:6.2px;line-height:7.44px;color:#e4e4e4;letter-spacing:-0.33px;font-weight:400;transform:scaleX(0.903);-webkit-text-stroke:0.1px currentColor;">300</div><div class="t" style="left:493.5px;width:200px;text-align:center;top:357.48px;font-size:6.2px;line-height:7.44px;color:#e4e4e4;letter-spacing:-0.33px;font-weight:400;transform:scaleX(0.903);-webkit-text-stroke:0.1px currentColor;">300</div><div style="left:321px;top:353px;width:4px;height:1px;background:#ccc"></div><div style="left:613px;top:353px;width:2px;height:1px;background:#ccc"></div><div class="t" style="left:120.80000000000001px;width:200px;text-align:right;top:350.34px;font-size:5.6px;line-height:6.72px;color:#e4e4e4;letter-spacing:-0.30px;font-weight:400;-webkit-text-stroke:0.1px currentColor;">0</div><div class="t" style="left:615.4px;top:350.34px;font-size:5.6px;line-height:6.72px;color:#e4e4e4;letter-spacing:-0.30px;font-weight:400;-webkit-text-stroke:0.1px currentColor;">0</div><div style="left:321px;top:320px;width:4px;height:1px;background:#ccc"></div><div style="left:613px;top:320px;width:2px;height:1px;background:#ccc"></div><div class="t" style="left:120.80000000000001px;width:200px;text-align:right;top:317.34px;font-size:5.6px;line-height:6.72px;color:#e4e4e4;letter-spacing:-0.30px;font-weight:400;-webkit-text-stroke:0.1px currentColor;">50</div><div class="t" style="left:615.4px;top:317.34px;font-size:5.6px;line-height:6.72px;color:#e4e4e4;letter-spacing:-0.30px;font-weight:400;-webkit-text-stroke:0.1px currentColor;">50</div><div style="left:321px;top:287px;width:4px;height:1px;background:#ccc"></div><div style="left:613px;top:287px;width:2px;height:1px;background:#ccc"></div><div class="t" style="left:120.80000000000001px;width:200px;text-align:right;top:284.34px;font-size:5.6px;line-height:6.72px;color:#e4e4e4;letter-spacing:-0.30px;font-weight:400;-webkit-text-stroke:0.1px currentColor;">100</div><div class="t" style="left:615.4px;top:284.34px;font-size:5.6px;line-height:6.72px;color:#e4e4e4;letter-spacing:-0.30px;font-weight:400;-webkit-text-stroke:0.1px currentColor;">100</div><div style="left:321px;top:253px;width:4px;height:1px;background:#ccc"></div><div style="left:613px;top:253px;width:2px;height:1px;background:#ccc"></div><div class="t" style="left:120.80000000000001px;width:200px;text-align:right;top:250.34px;font-size:5.6px;line-height:6.72px;color:#e4e4e4;letter-spacing:-0.30px;font-weight:400;-webkit-text-stroke:0.1px currentColor;">150</div><div class="t" style="left:615.4px;top:250.34px;font-size:5.6px;line-height:6.72px;color:#e4e4e4;letter-spacing:-0.30px;font-weight:400;-webkit-text-stroke:0.1px currentColor;">150</div><div style="left:321px;top:220px;width:4px;height:1px;background:#ccc"></div><div style="left:613px;top:220px;width:2px;height:1px;background:#ccc"></div><div class="t" style="left:120.80000000000001px;width:200px;text-align:right;top:217.34px;font-size:5.6px;line-height:6.72px;color:#e4e4e4;letter-spacing:-0.30px;font-weight:400;-webkit-text-stroke:0.1px currentColor;">200</div><div class="t" style="left:615.4px;top:217.34px;font-size:5.6px;line-height:6.72px;color:#e4e4e4;letter-spacing:-0.30px;font-weight:400;-webkit-text-stroke:0.1px currentColor;">200</div><div style="left:321px;top:186px;width:4px;height:1px;background:#ccc"></div><div style="left:613px;top:186px;width:2px;height:1px;background:#ccc"></div><div class="t" style="left:120.80000000000001px;width:200px;text-align:right;top:183.34px;font-size:5.6px;line-height:6.72px;color:#e4e4e4;letter-spacing:-0.30px;font-weight:400;-webkit-text-stroke:0.1px currentColor;">250</div><div class="t" style="left:615.4px;top:183.34px;font-size:5.6px;line-height:6.72px;color:#e4e4e4;letter-spacing:-0.30px;font-weight:400;-webkit-text-stroke:0.1px currentColor;">250</div><div style="left:321px;top:153px;width:4px;height:1px;background:#ccc"></div><div style="left:613px;top:153px;width:2px;height:1px;background:#ccc"></div><div class="t" style="left:120.80000000000001px;width:200px;text-align:right;transform-origin:100% 50%;top:149.98px;font-size:6.2px;line-height:7.44px;color:#e4e4e4;letter-spacing:-0.33px;font-weight:400;transform:scaleX(0.903);-webkit-text-stroke:0.1px currentColor;">300</div><div class="t" style="left:615.4px;transform-origin:0 50%;top:149.98px;font-size:6.2px;line-height:7.44px;color:#e4e4e4;letter-spacing:-0.33px;font-weight:400;transform:scaleX(0.903);-webkit-text-stroke:0.1px currentColor;">300</div><div style="left:321px;top:120px;width:4px;height:1px;background:#ccc"></div><div style="left:613px;top:120px;width:2px;height:1px;background:#ccc"></div><div class="t" style="left:120.80000000000001px;width:200px;text-align:right;transform-origin:100% 50%;top:116.98px;font-size:6.2px;line-height:7.44px;color:#e4e4e4;letter-spacing:-0.33px;font-weight:400;transform:scaleX(0.903);-webkit-text-stroke:0.1px currentColor;">350</div><div class="t" style="left:615.4px;transform-origin:0 50%;top:116.98px;font-size:6.2px;line-height:7.44px;color:#e4e4e4;letter-spacing:-0.33px;font-weight:400;transform:scaleX(0.903);-webkit-text-stroke:0.1px currentColor;">350</div><div style="left:321px;top:86px;width:4px;height:1px;background:#ccc"></div><div style="left:613px;top:86px;width:2px;height:1px;background:#ccc"></div><div class="t" style="left:120.80000000000001px;width:200px;text-align:right;top:83.34px;font-size:5.6px;line-height:6.72px;color:#e4e4e4;letter-spacing:-0.30px;font-weight:400;-webkit-text-stroke:0.1px currentColor;">400</div><div class="t" style="left:615.4px;top:83.34px;font-size:5.6px;line-height:6.72px;color:#e4e4e4;letter-spacing:-0.30px;font-weight:400;-webkit-text-stroke:0.1px currentColor;">400</div><div class="t" style="left:367.8px;width:200px;text-align:center;top:364.72px;font-size:5.8px;line-height:6.96px;color:#d8d8d8;letter-spacing:0.00px;font-weight:400;">X,m</div><div class="t" style="left:530.2px;width:200px;text-align:center;top:206.72px;font-size:5.8px;line-height:6.96px;color:#d8d8d8;letter-spacing:0.00px;font-weight:400;transform:rotate(-90deg);">Y, m</div><div class="t" style="left:367px;width:200px;text-align:center;top:40.58px;font-size:5.7px;line-height:6.84px;color:#dcdcdc;letter-spacing:0.00px;font-weight:400;">Attribute: Q-factor</div><div class="t" style="left:368px;width:200px;text-align:center;top:46.98px;font-size:6.2px;line-height:7.44px;color:#dcdcdc;letter-spacing:0.00px;font-weight:400;transform:scaleX(0.919);">Position on Z-axis: 3 m</div><div style="left:0px;top:387px;width:900px;height:6px;background:#4a4a4a;box-shadow:inset 0 1px 0 #8e8e8e,inset 0 -1px 0 #8e8e8e"></div><div style="left:0px;top:393px;width:900px;height:103px;background:#474747"></div><div style="left:6px;top:393px;width:894px;height:12px;background:#494949"></div><div style="left:6px;top:405px;width:892px;height:2px;background:#858585"></div><div style="left:8px;top:395px;width:15px;height:11px;background:#fbfbfb"></div><div style="left:23px;top:396px;width:12px;height:9px;background:#e6e6e6"></div><div class="t" style="left:-84.5px;width:200px;text-align:center;top:396.90px;font-size:6px;line-height:7.20px;color:#222;letter-spacing:0.00px;font-weight:400;-webkit-text-stroke:0;">1</div><div class="t" style="left:-71px;width:200px;text-align:center;top:396.90px;font-size:6px;line-height:7.20px;color:#222;letter-spacing:0.00px;font-weight:400;-webkit-text-stroke:0;">2</div><div style="left:0px;top:496px;width:900px;height:11px;background:linear-gradient(#0a0a0a,#202020 35%,#4e4e4e)"></div><div style="left:852px;top:496px;width:48px;height:11px;background:linear-gradient(#6a6a6a,#4a4a4a);clip-path:polygon(7px 0,48px 0,48px 11px,0 11px)"></div><div class="t" style="left:782px;width:200px;text-align:center;top:497.10px;font-size:7.5px;line-height:9.00px;color:#e8e8e8;letter-spacing:0.60px;font-weight:700;text-shadow:1px 1px 1px #000;">V 2.2</div><div style="left:851px;top:407px;width:48px;height:88px;background:#4a4a4a"></div><div style="left:852px;top:409px;width:46px;height:2px;background:#262626"></div><div style="left:852px;top:416px;width:46px;height:2px;background:#262626"></div><div style="left:852px;top:423px;width:46px;height:2px;background:#262626"></div><div style="left:852px;top:430px;width:46px;height:2px;background:#262626"></div><div style="left:852px;top:437px;width:46px;height:2px;background:#262626"></div><div style="left:852px;top:444px;width:46px;height:2px;background:#262626"></div><div style="left:852px;top:451px;width:46px;height:2px;background:#262626"></div><div style="left:852px;top:458px;width:46px;height:2px;background:#262626"></div><div style="left:852px;top:465px;width:46px;height:2px;background:#262626"></div><div style="left:852px;top:472px;width:46px;height:2px;background:#262626"></div><div style="left:852px;top:479px;width:46px;height:2px;background:#262626"></div><div style="left:852px;top:486px;width:46px;height:2px;background:#262626"></div><div style="left:852px;top:493px;width:46px;height:2px;background:#262626"></div>
<div style="left:8px;top:412px;width:72px;height:77px;border:2px solid #2aa0a0"></div><div class="t" style="left:14px;top:409.3px;font-size:5.6px;line-height:6.7px;color:#2aa0a0;letter-spacing:-0.28px;background:#474747;padding:0 1px">Section X-Y on Z-axis</div><div style="left:12px;top:418px;width:69px;height:10px;background:#262626"></div><div class="t" style="left:-53.7px;width:200px;text-align:center;top:419.28px;font-size:6.2px;line-height:7.44px;color:#22b0b0;letter-spacing:0.00px;font-weight:400;">3 m</div><div class="t" style="left:12px;top:430.94px;font-size:5.6px;line-height:6.72px;color:#e8e8e8;letter-spacing:-0.28px;font-weight:400;">Z-axis range averaging</div><div style="left:69px;top:431px;width:9px;height:9px;background:#565656"></div><div style="left:71px;top:433px;width:5px;height:5px;background:#f4f4f4"></div><div class="t" style="left:12px;top:442.64px;font-size:5.6px;line-height:6.72px;color:#e8e8e8;letter-spacing:-0.28px;font-weight:400;">Range limit 1</div><div class="t" style="left:12px;top:455.64px;font-size:5.6px;line-height:6.72px;color:#e8e8e8;letter-spacing:-0.28px;font-weight:400;">Range limit 2</div><div class="t" style="left:12px;top:468.64px;font-size:5.6px;line-height:6.72px;color:#e8e8e8;letter-spacing:-0.28px;font-weight:400;">Position, m</div><div style="left:47px;top:443px;width:9px;height:22px;background:#676767;box-shadow:inset 1px 1px 0 #e0e0e0,inset -1px -1px 0 #bdbdbd"></div><div class="t" style="left:-48.5px;width:200px;text-align:center;top:450.70px;font-size:5.5px;line-height:6.60px;color:#eaeaea;letter-spacing:-0.20px;font-weight:400;">ok</div><div style="left:58px;top:443px;width:20px;height:8px;background:#262626;border:1px solid #7c7c7c"></div><div style="left:58px;top:456px;width:20px;height:8px;background:#262626;border:1px solid #7c7c7c"></div><div style="left:47px;top:469px;width:9px;height:9px;background:#676767;box-shadow:inset 1px 1px 0 #e0e0e0,inset -1px -1px 0 #bdbdbd"></div><div class="t" style="left:-48.5px;width:200px;text-align:center;top:470.20px;font-size:5.5px;line-height:6.60px;color:#eaeaea;letter-spacing:-0.20px;font-weight:400;">ok</div><div style="left:58px;top:469px;width:20px;height:7px;background:#262626;border:1px solid #7c7c7c"></div><div class="t" style="left:-31.0px;width:200px;text-align:center;top:469.78px;font-size:6.2px;line-height:7.44px;color:#e08420;letter-spacing:0.00px;font-weight:400;transform:scaleX(0.806);">3</div><div style="left:12px;top:481px;width:9px;height:10px;background:#676767;box-shadow:inset 1px 1px 0 #e0e0e0,inset -1px -1px 0 #bdbdbd"></div><div class="t" style="left:-83.5px;width:200px;text-align:center;top:483.30px;font-size:4.5px;line-height:5.40px;color:#eaeaea;letter-spacing:-0.20px;font-weight:400;">⇞</div><div style="left:23px;top:481px;width:10px;height:10px;background:#676767;box-shadow:inset 1px 1px 0 #e0e0e0,inset -1px -1px 0 #bdbdbd"></div><div class="t" style="left:-72.0px;width:200px;text-align:center;top:483.30px;font-size:4.5px;line-height:5.40px;color:#eaeaea;letter-spacing:-0.20px;font-weight:400;">‒</div><div style="left:35px;top:481px;width:10px;height:10px;background:#676767;box-shadow:inset 1px 1px 0 #e0e0e0,inset -1px -1px 0 #bdbdbd"></div><div class="t" style="left:-60.0px;width:200px;text-align:center;top:483.30px;font-size:4.5px;line-height:5.40px;color:#eaeaea;letter-spacing:-0.20px;font-weight:400;">▸</div><div style="left:47px;top:481px;width:9px;height:10px;background:#676767;box-shadow:inset 1px 1px 0 #e0e0e0,inset -1px -1px 0 #bdbdbd"></div><div class="t" style="left:-48.5px;width:200px;text-align:center;top:483.30px;font-size:4.5px;line-height:5.40px;color:#eaeaea;letter-spacing:-0.20px;font-weight:400;">⇟</div><div style="left:58px;top:481px;width:20px;height:8px;background:#262626;border:1px solid #7c7c7c"></div><div class="t" style="left:-31.0px;width:200px;text-align:center;top:482.52px;font-size:5.8px;line-height:6.96px;color:#e08420;letter-spacing:0.00px;font-weight:400;">2</div><div style="left:87px;top:412px;width:70px;height:77px;border:2px solid #a02ca8"></div><div class="t" style="left:92.6px;top:409.3px;font-size:5.6px;line-height:6.7px;color:#a02ca8;letter-spacing:-0.28px;background:#474747;padding:0 1px">Section X-Z on Y-axis</div><div style="left:90px;top:418px;width:69px;height:10px;background:#262626"></div><div class="t" style="left:24.89999999999999px;width:200px;text-align:center;top:419.28px;font-size:6.2px;line-height:7.44px;color:#a02ca8;letter-spacing:0.00px;font-weight:400;">234.026 m</div><div class="t" style="left:90.6px;top:430.94px;font-size:5.6px;line-height:6.72px;color:#e8e8e8;letter-spacing:-0.28px;font-weight:400;">Y-axis range averaging</div><div style="left:148px;top:431px;width:9px;height:9px;background:#565656"></div><div style="left:150px;top:433px;width:5px;height:5px;background:#f4f4f4"></div><div class="t" style="left:90.6px;top:442.64px;font-size:5.6px;line-height:6.72px;color:#e8e8e8;letter-spacing:-0.28px;font-weight:400;">Range limit 1</div><div class="t" style="left:90.6px;top:455.64px;font-size:5.6px;line-height:6.72px;color:#e8e8e8;letter-spacing:-0.28px;font-weight:400;">Range limit 2</div><div class="t" style="left:90.6px;top:468.64px;font-size:5.6px;line-height:6.72px;color:#e8e8e8;letter-spacing:-0.28px;font-weight:400;">Position, m</div><div style="left:126px;top:443px;width:9px;height:22px;background:#676767;box-shadow:inset 1px 1px 0 #e0e0e0,inset -1px -1px 0 #bdbdbd"></div><div class="t" style="left:30.5px;width:200px;text-align:center;top:450.70px;font-size:5.5px;line-height:6.60px;color:#eaeaea;letter-spacing:-0.20px;font-weight:400;">ok</div><div style="left:137px;top:443px;width:20px;height:8px;background:#262626;border:1px solid #7c7c7c"></div><div style="left:137px;top:456px;width:20px;height:8px;background:#262626;border:1px solid #7c7c7c"></div><div style="left:126px;top:469px;width:9px;height:9px;background:#676767;box-shadow:inset 1px 1px 0 #e0e0e0,inset -1px -1px 0 #bdbdbd"></div><div class="t" style="left:30.5px;width:200px;text-align:center;top:470.20px;font-size:5.5px;line-height:6.60px;color:#eaeaea;letter-spacing:-0.20px;font-weight:400;">ok</div><div style="left:137px;top:469px;width:20px;height:7px;background:#262626;border:1px solid #7c7c7c"></div><div class="t" style="left:48.0px;width:200px;text-align:center;top:469.78px;font-size:6.2px;line-height:7.44px;color:#e08420;letter-spacing:0.00px;font-weight:400;transform:scaleX(0.806);">234.026</div><div style="left:90px;top:481px;width:10px;height:10px;background:#676767;box-shadow:inset 1px 1px 0 #e0e0e0,inset -1px -1px 0 #bdbdbd"></div><div class="t" style="left:-5.0px;width:200px;text-align:center;top:483.30px;font-size:4.5px;line-height:5.40px;color:#eaeaea;letter-spacing:-0.20px;font-weight:400;">◂◂</div><div style="left:102px;top:481px;width:10px;height:10px;background:#676767;box-shadow:inset 1px 1px 0 #e0e0e0,inset -1px -1px 0 #bdbdbd"></div><div class="t" style="left:7.0px;width:200px;text-align:center;top:483.30px;font-size:4.5px;line-height:5.40px;color:#eaeaea;letter-spacing:-0.20px;font-weight:400;">‒</div><div style="left:114px;top:481px;width:9px;height:10px;background:#676767;box-shadow:inset 1px 1px 0 #e0e0e0,inset -1px -1px 0 #bdbdbd"></div><div class="t" style="left:18.5px;width:200px;text-align:center;top:483.30px;font-size:4.5px;line-height:5.40px;color:#eaeaea;letter-spacing:-0.20px;font-weight:400;">▸</div><div style="left:126px;top:481px;width:9px;height:10px;background:#676767;box-shadow:inset 1px 1px 0 #e0e0e0,inset -1px -1px 0 #bdbdbd"></div><div class="t" style="left:30.5px;width:200px;text-align:center;top:483.30px;font-size:4.5px;line-height:5.40px;color:#eaeaea;letter-spacing:-0.20px;font-weight:400;">▸▸</div><div style="left:137px;top:481px;width:20px;height:8px;background:#262626;border:1px solid #7c7c7c"></div><div class="t" style="left:48.0px;width:200px;text-align:center;top:482.52px;font-size:5.8px;line-height:6.96px;color:#e08420;letter-spacing:0.00px;font-weight:400;">50</div><div style="left:164px;top:412px;width:72px;height:77px;border:2px solid #2aa03a"></div><div class="t" style="left:170px;top:409.3px;font-size:5.6px;line-height:6.7px;color:#2aa03a;letter-spacing:-0.28px;background:#474747;padding:0 1px">Section Y-Z on X-axis</div><div style="left:168px;top:418px;width:69px;height:10px;background:#262626"></div><div class="t" style="left:102.30000000000001px;width:200px;text-align:center;top:419.28px;font-size:6.2px;line-height:7.44px;color:#2aa03a;letter-spacing:0.00px;font-weight:400;">176.388 m</div><div class="t" style="left:168px;top:430.94px;font-size:5.6px;line-height:6.72px;color:#e8e8e8;letter-spacing:-0.28px;font-weight:400;">X-axis range averaging</div><div style="left:225px;top:431px;width:9px;height:9px;background:#565656"></div><div style="left:227px;top:433px;width:5px;height:5px;background:#f4f4f4"></div><div class="t" style="left:168px;top:442.64px;font-size:5.6px;line-height:6.72px;color:#e8e8e8;letter-spacing:-0.28px;font-weight:400;">Range limit 1</div><div class="t" style="left:168px;top:455.64px;font-size:5.6px;line-height:6.72px;color:#e8e8e8;letter-spacing:-0.28px;font-weight:400;">Range limit 2</div><div class="t" style="left:168px;top:468.64px;font-size:5.6px;line-height:6.72px;color:#e8e8e8;letter-spacing:-0.28px;font-weight:400;">Position, m</div><div style="left:203px;top:443px;width:9px;height:22px;background:#676767;box-shadow:inset 1px 1px 0 #e0e0e0,inset -1px -1px 0 #bdbdbd"></div><div class="t" style="left:107.5px;width:200px;text-align:center;top:450.70px;font-size:5.5px;line-height:6.60px;color:#eaeaea;letter-spacing:-0.20px;font-weight:400;">ok</div><div style="left:214px;top:443px;width:20px;height:8px;background:#262626;border:1px solid #7c7c7c"></div><div style="left:214px;top:456px;width:20px;height:8px;background:#262626;border:1px solid #7c7c7c"></div><div style="left:203px;top:469px;width:9px;height:9px;background:#676767;box-shadow:inset 1px 1px 0 #e0e0e0,inset -1px -1px 0 #bdbdbd"></div><div class="t" style="left:107.5px;width:200px;text-align:center;top:470.20px;font-size:5.5px;line-height:6.60px;color:#eaeaea;letter-spacing:-0.20px;font-weight:400;">ok</div><div style="left:214px;top:469px;width:20px;height:7px;background:#262626;border:1px solid #7c7c7c"></div><div class="t" style="left:125.0px;width:200px;text-align:center;top:469.78px;font-size:6.2px;line-height:7.44px;color:#e08420;letter-spacing:0.00px;font-weight:400;transform:scaleX(0.806);">176.388</div><div style="left:168px;top:481px;width:9px;height:10px;background:#676767;box-shadow:inset 1px 1px 0 #e0e0e0,inset -1px -1px 0 #bdbdbd"></div><div class="t" style="left:72.5px;width:200px;text-align:center;top:483.30px;font-size:4.5px;line-height:5.40px;color:#eaeaea;letter-spacing:-0.20px;font-weight:400;">◂◂</div><div style="left:179px;top:481px;width:10px;height:10px;background:#676767;box-shadow:inset 1px 1px 0 #e0e0e0,inset -1px -1px 0 #bdbdbd"></div><div class="t" style="left:84.0px;width:200px;text-align:center;top:483.30px;font-size:4.5px;line-height:5.40px;color:#eaeaea;letter-spacing:-0.20px;font-weight:400;">‒</div><div style="left:191px;top:481px;width:10px;height:10px;background:#676767;box-shadow:inset 1px 1px 0 #e0e0e0,inset -1px -1px 0 #bdbdbd"></div><div class="t" style="left:96.0px;width:200px;text-align:center;top:483.30px;font-size:4.5px;line-height:5.40px;color:#eaeaea;letter-spacing:-0.20px;font-weight:400;">▸</div><div style="left:203px;top:481px;width:9px;height:10px;background:#676767;box-shadow:inset 1px 1px 0 #e0e0e0,inset -1px -1px 0 #bdbdbd"></div><div class="t" style="left:107.5px;width:200px;text-align:center;top:483.30px;font-size:4.5px;line-height:5.40px;color:#eaeaea;letter-spacing:-0.20px;font-weight:400;">▸▸</div><div style="left:214px;top:481px;width:20px;height:8px;background:#262626;border:1px solid #7c7c7c"></div><div class="t" style="left:125.0px;width:200px;text-align:center;top:482.52px;font-size:5.8px;line-height:6.96px;color:#e08420;letter-spacing:0.00px;font-weight:400;">50</div><div style="left:242px;top:412px;width:100px;height:79px;border:1px solid #b4b4b4"></div><div class="t" style="left:247.5px;top:408.1px;font-size:5.6px;line-height:6.7px;color:#e6e6e6;letter-spacing:-0.28px;background:#474747;padding:0 1px">Cube Components Display</div><div class="t" style="left:246px;top:418.14px;font-size:5.6px;line-height:6.72px;color:#e8e8e8;letter-spacing:-0.28px;font-weight:400;">X-Y frame</div><div style="left:275px;top:418px;width:9px;height:9px;background:#565656"></div><div style="left:277px;top:420px;width:5px;height:5px;background:#f4f4f4"></div><div style="left:278px;top:420.5px;width:1.6px;height:2.4px;border-right:1px solid #555;border-bottom:1px solid #555;transform:rotate(40deg) translate(0.6px,-0.3px)"></div><div class="t" style="left:292.5px;top:418.14px;font-size:5.6px;line-height:6.72px;color:#e8e8e8;letter-spacing:-0.28px;font-weight:400;">All frames</div><div style="left:326px;top:418px;width:9px;height:9px;background:#565656"></div><div style="left:328px;top:420px;width:5px;height:5px;background:#f4f4f4"></div><div style="left:329px;top:420.5px;width:1.6px;height:2.4px;border-right:1px solid #555;border-bottom:1px solid #555;transform:rotate(40deg) translate(0.6px,-0.3px)"></div><div class="t" style="left:246px;top:430.74px;font-size:5.6px;line-height:6.72px;color:#e8e8e8;letter-spacing:-0.28px;font-weight:400;">X-Z frame</div><div style="left:275px;top:431px;width:9px;height:9px;background:#565656"></div><div style="left:277px;top:433px;width:5px;height:5px;background:#f4f4f4"></div><div style="left:278px;top:433.5px;width:1.6px;height:2.4px;border-right:1px solid #555;border-bottom:1px solid #555;transform:rotate(40deg) translate(0.6px,-0.3px)"></div><div class="t" style="left:292.5px;top:430.74px;font-size:5.6px;line-height:6.72px;color:#e8e8e8;letter-spacing:-0.28px;font-weight:400;">All sections</div><div style="left:326px;top:431px;width:9px;height:9px;background:#565656"></div><div style="left:328px;top:433px;width:5px;height:5px;background:#f4f4f4"></div><div style="left:329px;top:433.5px;width:1.6px;height:2.4px;border-right:1px solid #555;border-bottom:1px solid #555;transform:rotate(40deg) translate(0.6px,-0.3px)"></div><div class="t" style="left:246px;top:443.34px;font-size:5.6px;line-height:6.72px;color:#e8e8e8;letter-spacing:-0.28px;font-weight:400;">Y-Z frame</div><div style="left:275px;top:443px;width:9px;height:9px;background:#565656"></div><div style="left:277px;top:445px;width:5px;height:5px;background:#f4f4f4"></div><div style="left:278px;top:445.5px;width:1.6px;height:2.4px;border-right:1px solid #555;border-bottom:1px solid #555;transform:rotate(40deg) translate(0.6px,-0.3px)"></div><div class="t" style="left:292.5px;top:443.34px;font-size:5.6px;line-height:6.72px;color:#e8e8e8;letter-spacing:-0.28px;font-weight:400;">User section</div><div style="left:326px;top:443px;width:9px;height:9px;background:#565656"></div><div style="left:328px;top:445px;width:5px;height:5px;background:#f4f4f4"></div><div class="t" style="left:246px;top:455.94px;font-size:5.6px;line-height:6.72px;color:#e8e8e8;letter-spacing:-0.28px;font-weight:400;">X-Y section</div><div style="left:275px;top:456px;width:9px;height:9px;background:#565656"></div><div style="left:277px;top:458px;width:5px;height:5px;background:#f4f4f4"></div><div style="left:278px;top:458.5px;width:1.6px;height:2.4px;border-right:1px solid #555;border-bottom:1px solid #555;transform:rotate(40deg) translate(0.6px,-0.3px)"></div><div class="t" style="left:292.5px;top:455.94px;font-size:5.6px;line-height:6.72px;color:#e8e8e8;letter-spacing:-0.28px;font-weight:400;">Profile location</div><div style="left:326px;top:456px;width:9px;height:9px;background:#565656"></div><div style="left:328px;top:458px;width:5px;height:5px;background:#f4f4f4"></div><div class="t" style="left:246px;top:468.54px;font-size:5.6px;line-height:6.72px;color:#e8e8e8;letter-spacing:-0.28px;font-weight:400;">X-Z section</div><div style="left:275px;top:468px;width:9px;height:9px;background:#565656"></div><div style="left:277px;top:470px;width:5px;height:5px;background:#f4f4f4"></div><div style="left:278px;top:470.5px;width:1.6px;height:2.4px;border-right:1px solid #555;border-bottom:1px solid #555;transform:rotate(40deg) translate(0.6px,-0.3px)"></div><div class="t" style="left:292.5px;top:468.54px;font-size:5.6px;line-height:6.72px;color:#e8e8e8;letter-spacing:-0.28px;font-weight:400;">Profile section</div><div style="left:326px;top:468px;width:9px;height:9px;background:#565656"></div><div style="left:328px;top:470px;width:5px;height:5px;background:#f4f4f4"></div><div class="t" style="left:246px;top:481.14px;font-size:5.6px;line-height:6.72px;color:#e8e8e8;letter-spacing:-0.28px;font-weight:400;">Y-Z section</div><div style="left:275px;top:481px;width:9px;height:9px;background:#565656"></div><div style="left:277px;top:483px;width:5px;height:5px;background:#f4f4f4"></div><div style="left:278px;top:483.5px;width:1.6px;height:2.4px;border-right:1px solid #555;border-bottom:1px solid #555;transform:rotate(40deg) translate(0.6px,-0.3px)"></div><div class="t" style="left:292.5px;top:481.14px;font-size:5.6px;line-height:6.72px;color:#e8e8e8;letter-spacing:-0.28px;font-weight:400;">Skeleton</div><div style="left:326px;top:481px;width:9px;height:9px;background:#565656"></div><div style="left:328px;top:483px;width:5px;height:5px;background:#f4f4f4"></div><div style="left:329px;top:483.5px;width:1.6px;height:2.4px;border-right:1px solid #555;border-bottom:1px solid #555;transform:rotate(40deg) translate(0.6px,-0.3px)"></div><div style="left:346px;top:412px;width:56px;height:30px;border:1px solid #b4b4b4"></div><div class="t" style="left:351.5px;top:408.1px;font-size:5.6px;line-height:6.7px;color:#e6e6e6;letter-spacing:-0.28px;background:#474747;padding:0 1px">Rounding</div><div class="t" style="left:349.5px;top:418.64px;font-size:5.6px;line-height:6.72px;color:#e8e8e8;letter-spacing:-0.28px;font-weight:400;">Enable rounding</div><div style="left:389px;top:419px;width:9px;height:9px;background:#565656"></div><div style="left:391px;top:421px;width:5px;height:5px;background:#f4f4f4"></div><div class="t" style="left:349.5px;top:430.14px;font-size:5.6px;line-height:6.72px;color:#e8e8e8;letter-spacing:-0.28px;font-weight:400;">Rate</div><div style="left:367px;top:431px;width:9px;height:9px;background:#676767;box-shadow:inset 1px 1px 0 #e0e0e0,inset -1px -1px 0 #bdbdbd"></div><div class="t" style="left:271.5px;width:200px;text-align:center;top:432.20px;font-size:5.5px;line-height:6.60px;color:#eaeaea;letter-spacing:-0.20px;font-weight:400;">ok</div><div style="left:379px;top:431px;width:19px;height:7px;background:#262626;border:1px solid #7c7c7c"></div><div style="left:346px;top:449px;width:56px;height:43px;border:1px solid #b4b4b4"></div><div class="t" style="left:351.5px;top:445.1px;font-size:5.6px;line-height:6.7px;color:#e6e6e6;letter-spacing:-0.28px;background:#474747;padding:0 1px">Smoothing</div><div class="t" style="left:349px;top:457.64px;font-size:5.6px;line-height:6.72px;color:#e8e8e8;letter-spacing:-0.28px;font-weight:400;">X, m</div><div class="t" style="left:349px;top:470.24px;font-size:5.6px;line-height:6.72px;color:#e8e8e8;letter-spacing:-0.28px;font-weight:400;">Y, m</div><div class="t" style="left:349px;top:481.04px;font-size:5.6px;line-height:6.72px;color:#e8e8e8;letter-spacing:-0.28px;font-weight:400;">Z, m</div><div style="left:366px;top:458px;width:9px;height:32px;background:#676767;box-shadow:inset 1px 1px 0 #e0e0e0,inset -1px -1px 0 #bdbdbd"></div><div class="t" style="left:270.5px;width:200px;text-align:center;top:470.70px;font-size:5.5px;line-height:6.60px;color:#eaeaea;letter-spacing:-0.20px;font-weight:400;">ok</div><div style="left:378px;top:458px;width:19px;height:7px;background:#262626;border:1px solid #7c7c7c"></div><div class="t" style="left:288.5px;width:200px;text-align:center;top:459.02px;font-size:5.8px;line-height:6.96px;color:#e08420;letter-spacing:0.00px;font-weight:400;">25</div><div style="left:378px;top:470px;width:19px;height:8px;background:#262626;border:1px solid #7c7c7c"></div><div class="t" style="left:288.5px;width:200px;text-align:center;top:471.52px;font-size:5.8px;line-height:6.96px;color:#e08420;letter-spacing:0.00px;font-weight:400;">25</div><div style="left:378px;top:482px;width:19px;height:7px;background:#262626;border:1px solid #7c7c7c"></div><div class="t" style="left:288.5px;width:200px;text-align:center;top:483.02px;font-size:5.8px;line-height:6.96px;color:#e08420;letter-spacing:0.00px;font-weight:400;">1</div><div style="left:406px;top:412px;width:93px;height:79px;border:1px solid #b4b4b4"></div><div class="t" style="left:411.5px;top:408.1px;font-size:5.6px;line-height:6.7px;color:#e6e6e6;letter-spacing:-0.28px;background:#474747;padding:0 1px">Axes Labels, Grid and Limits</div><div class="t" style="left:409.5px;top:417.94px;font-size:5.6px;line-height:6.72px;color:#e8e8e8;letter-spacing:-0.28px;font-weight:400;">X step</div><div style="left:428px;top:417px;width:8px;height:9px;background:#676767;box-shadow:inset 1px 1px 0 #e0e0e0,inset -1px -1px 0 #bdbdbd"></div><div class="t" style="left:332.0px;width:200px;text-align:center;top:418.50px;font-size:5px;line-height:6.00px;color:#eaeaea;letter-spacing:-0.20px;font-weight:400;">off</div><div style="left:439px;top:417px;width:9px;height:9px;background:#676767;box-shadow:inset 1px 1px 0 #e0e0e0,inset -1px -1px 0 #bdbdbd"></div><div class="t" style="left:343.5px;width:200px;text-align:center;top:418.50px;font-size:5px;line-height:6.00px;color:#eaeaea;letter-spacing:-0.20px;font-weight:400;">ok</div><div style="left:451px;top:417px;width:9px;height:9px;background:#676767;box-shadow:inset 1px 1px 0 #e0e0e0,inset -1px -1px 0 #bdbdbd"></div><div class="t" style="left:355.5px;width:200px;text-align:center;top:418.50px;font-size:5px;line-height:6.00px;color:#eaeaea;letter-spacing:-0.20px;font-weight:400;">...</div><div style="left:462px;top:417px;width:10px;height:9px;background:#565656"></div><div style="left:464px;top:419px;width:5px;height:5px;background:#f4f4f4"></div><div style="left:475px;top:417px;width:19px;height:7px;background:#262626;border:1px solid #7c7c7c"></div><div class="t" style="left:385.5px;width:200px;text-align:center;top:418.02px;font-size:5.8px;line-height:6.96px;color:#e08420;letter-spacing:0.00px;font-weight:400;">50</div><div class="t" style="left:409.5px;top:430.64px;font-size:5.6px;line-height:6.72px;color:#e8e8e8;letter-spacing:-0.28px;font-weight:400;">Y step</div><div style="left:428px;top:430px;width:8px;height:8px;background:#676767;box-shadow:inset 1px 1px 0 #e0e0e0,inset -1px -1px 0 #bdbdbd"></div><div class="t" style="left:332.0px;width:200px;text-align:center;top:431.00px;font-size:5px;line-height:6.00px;color:#eaeaea;letter-spacing:-0.20px;font-weight:400;">off</div><div style="left:439px;top:430px;width:9px;height:8px;background:#676767;box-shadow:inset 1px 1px 0 #e0e0e0,inset -1px -1px 0 #bdbdbd"></div><div class="t" style="left:343.5px;width:200px;text-align:center;top:431.00px;font-size:5px;line-height:6.00px;color:#eaeaea;letter-spacing:-0.20px;font-weight:400;">ok</div><div style="left:451px;top:430px;width:9px;height:8px;background:#676767;box-shadow:inset 1px 1px 0 #e0e0e0,inset -1px -1px 0 #bdbdbd"></div><div class="t" style="left:355.5px;width:200px;text-align:center;top:431.00px;font-size:5px;line-height:6.00px;color:#eaeaea;letter-spacing:-0.20px;font-weight:400;">...</div><div style="left:462px;top:430px;width:10px;height:9px;background:#565656"></div><div style="left:464px;top:432px;width:5px;height:5px;background:#f4f4f4"></div><div style="left:475px;top:430px;width:19px;height:7px;background:#262626;border:1px solid #7c7c7c"></div><div class="t" style="left:385.5px;width:200px;text-align:center;top:431.02px;font-size:5.8px;line-height:6.96px;color:#e08420;letter-spacing:0.00px;font-weight:400;">50</div><div class="t" style="left:409.5px;top:443.34px;font-size:5.6px;line-height:6.72px;color:#e8e8e8;letter-spacing:-0.28px;font-weight:400;">Z step</div><div style="left:428px;top:442px;width:8px;height:9px;background:#676767;box-shadow:inset 1px 1px 0 #e0e0e0,inset -1px -1px 0 #bdbdbd"></div><div class="t" style="left:332.0px;width:200px;text-align:center;top:443.50px;font-size:5px;line-height:6.00px;color:#eaeaea;letter-spacing:-0.20px;font-weight:400;">off</div><div style="left:439px;top:442px;width:9px;height:9px;background:#676767;box-shadow:inset 1px 1px 0 #e0e0e0,inset -1px -1px 0 #bdbdbd"></div><div class="t" style="left:343.5px;width:200px;text-align:center;top:443.50px;font-size:5px;line-height:6.00px;color:#eaeaea;letter-spacing:-0.20px;font-weight:400;">ok</div><div style="left:451px;top:442px;width:9px;height:9px;background:#676767;box-shadow:inset 1px 1px 0 #e0e0e0,inset -1px -1px 0 #bdbdbd"></div><div class="t" style="left:355.5px;width:200px;text-align:center;top:443.50px;font-size:5px;line-height:6.00px;color:#eaeaea;letter-spacing:-0.20px;font-weight:400;">...</div><div style="left:462px;top:443px;width:10px;height:9px;background:#565656"></div><div style="left:464px;top:444px;width:5px;height:5px;background:#f4f4f4"></div><div style="left:475px;top:442px;width:19px;height:7px;background:#262626;border:1px solid #7c7c7c"></div><div class="t" style="left:385.5px;width:200px;text-align:center;top:443.02px;font-size:5.8px;line-height:6.96px;color:#e08420;letter-spacing:0.00px;font-weight:400;">2</div><div class="t" style="left:409.5px;top:455.84px;font-size:5.6px;line-height:6.72px;color:#e8e8e8;letter-spacing:-0.28px;font-weight:400;">X limit</div><div style="left:428px;top:455px;width:8px;height:9px;background:#676767;box-shadow:inset 1px 1px 0 #e0e0e0,inset -1px -1px 0 #bdbdbd"></div><div class="t" style="left:332.0px;width:200px;text-align:center;top:456.50px;font-size:5px;line-height:6.00px;color:#eaeaea;letter-spacing:-0.20px;font-weight:400;">off</div><div style="left:439px;top:455px;width:9px;height:9px;background:#676767;box-shadow:inset 1px 1px 0 #e0e0e0,inset -1px -1px 0 #bdbdbd"></div><div class="t" style="left:343.5px;width:200px;text-align:center;top:456.50px;font-size:5px;line-height:6.00px;color:#eaeaea;letter-spacing:-0.20px;font-weight:400;">ok</div><div style="left:452px;top:455px;width:18px;height:7px;background:#262626;border:1px solid #7c7c7c"></div><div class="t" style="left:362.0px;width:200px;text-align:center;top:456.02px;font-size:5.8px;line-height:6.96px;color:#e08420;letter-spacing:0.00px;font-weight:400;">0</div><div style="left:475px;top:455px;width:19px;height:7px;background:#262626;border:1px solid #7c7c7c"></div><div class="t" style="left:385.5px;width:200px;text-align:center;top:455.78px;font-size:6.2px;line-height:7.44px;color:#e08420;letter-spacing:0.00px;font-weight:400;transform:scaleX(0.935);">320.6</div><div class="t" style="left:409.5px;top:468.64px;font-size:5.6px;line-height:6.72px;color:#e8e8e8;letter-spacing:-0.28px;font-weight:400;">Y limit</div><div style="left:428px;top:468px;width:8px;height:8px;background:#676767;box-shadow:inset 1px 1px 0 #e0e0e0,inset -1px -1px 0 #bdbdbd"></div><div class="t" style="left:332.0px;width:200px;text-align:center;top:469.00px;font-size:5px;line-height:6.00px;color:#eaeaea;letter-spacing:-0.20px;font-weight:400;">off</div><div style="left:439px;top:468px;width:9px;height:8px;background:#676767;box-shadow:inset 1px 1px 0 #e0e0e0,inset -1px -1px 0 #bdbdbd"></div><div class="t" style="left:343.5px;width:200px;text-align:center;top:469.00px;font-size:5px;line-height:6.00px;color:#eaeaea;letter-spacing:-0.20px;font-weight:400;">ok</div><div style="left:452px;top:468px;width:18px;height:7px;background:#262626;border:1px solid #7c7c7c"></div><div class="t" style="left:362.0px;width:200px;text-align:center;top:469.02px;font-size:5.8px;line-height:6.96px;color:#e08420;letter-spacing:0.00px;font-weight:400;">0</div><div style="left:475px;top:468px;width:19px;height:7px;background:#262626;border:1px solid #7c7c7c"></div><div class="t" style="left:385.5px;width:200px;text-align:center;top:469.02px;font-size:5.8px;line-height:6.96px;color:#e08420;letter-spacing:0.00px;font-weight:400;">429.9</div><div class="t" style="left:409.5px;top:481.84px;font-size:5.6px;line-height:6.72px;color:#e8e8e8;letter-spacing:-0.28px;font-weight:400;">Z limit</div><div style="left:428px;top:481px;width:8px;height:9px;background:#676767;box-shadow:inset 1px 1px 0 #e0e0e0,inset -1px -1px 0 #bdbdbd"></div><div class="t" style="left:332.0px;width:200px;text-align:center;top:482.50px;font-size:5px;line-height:6.00px;color:#eaeaea;letter-spacing:-0.20px;font-weight:400;">off</div><div style="left:439px;top:481px;width:9px;height:9px;background:#676767;box-shadow:inset 1px 1px 0 #e0e0e0,inset -1px -1px 0 #bdbdbd"></div><div class="t" style="left:343.5px;width:200px;text-align:center;top:482.50px;font-size:5px;line-height:6.00px;color:#eaeaea;letter-spacing:-0.20px;font-weight:400;">ok</div><div style="left:452px;top:481px;width:18px;height:7px;background:#262626;border:1px solid #7c7c7c"></div><div class="t" style="left:362.0px;width:200px;text-align:center;top:482.02px;font-size:5.8px;line-height:6.96px;color:#e08420;letter-spacing:0.00px;font-weight:400;">0</div><div style="left:475px;top:481px;width:19px;height:7px;background:#262626;border:1px solid #7c7c7c"></div><div class="t" style="left:385.5px;width:200px;text-align:center;top:482.02px;font-size:5.8px;line-height:6.96px;color:#e08420;letter-spacing:0.00px;font-weight:400;">14</div><div style="left:503px;top:412px;width:32px;height:79px;border:1px solid #b4b4b4"></div><div class="t" style="left:508.5px;top:408.1px;font-size:5.6px;line-height:6.7px;color:#e6e6e6;letter-spacing:-0.28px;background:#474747;padding:0 1px">Axis Ratio</div><div class="t" style="left:506px;top:417.94px;font-size:5.6px;line-height:6.72px;color:#e8e8e8;letter-spacing:-0.28px;font-weight:400;">X</div><div style="left:511px;top:417px;width:19px;height:7px;background:#262626;border:1px solid #7c7c7c"></div><div class="t" style="left:421.5px;width:200px;text-align:center;top:418.02px;font-size:5.8px;line-height:6.96px;color:#e08420;letter-spacing:0.00px;font-weight:400;">1</div><div class="t" style="left:506px;top:430.64px;font-size:5.6px;line-height:6.72px;color:#e8e8e8;letter-spacing:-0.28px;font-weight:400;">Y</div><div style="left:511px;top:430px;width:19px;height:7px;background:#262626;border:1px solid #7c7c7c"></div><div class="t" style="left:421.5px;width:200px;text-align:center;top:431.02px;font-size:5.8px;line-height:6.96px;color:#e08420;letter-spacing:0.00px;font-weight:400;">1</div><div class="t" style="left:506px;top:443.34px;font-size:5.6px;line-height:6.72px;color:#e8e8e8;letter-spacing:-0.28px;font-weight:400;">Z</div><div style="left:511px;top:442px;width:19px;height:7px;background:#262626;border:1px solid #7c7c7c"></div><div class="t" style="left:421.5px;width:200px;text-align:center;top:443.02px;font-size:5.8px;line-height:6.96px;color:#e08420;letter-spacing:0.00px;font-weight:400;">1</div><div style="left:506px;top:456px;width:26px;height:9px;background:#676767;box-shadow:inset 1px 1px 0 #e0e0e0,inset -1px -1px 0 #bdbdbd"></div><div class="t" style="left:419.0px;width:200px;text-align:center;top:457.20px;font-size:5.5px;line-height:6.60px;color:#eaeaea;letter-spacing:-0.20px;font-weight:400;">Equal</div><div style="left:506px;top:469px;width:26px;height:9px;background:#676767;box-shadow:inset 1px 1px 0 #e0e0e0,inset -1px -1px 0 #bdbdbd"></div><div class="t" style="left:419.0px;width:200px;text-align:center;top:470.20px;font-size:5.5px;line-height:6.60px;color:#eaeaea;letter-spacing:-0.20px;font-weight:400;">Real</div><div style="left:506px;top:481px;width:26px;height:9px;background:#676767;box-shadow:inset 1px 1px 0 #e0e0e0,inset -1px -1px 0 #bdbdbd"></div><div class="t" style="left:419.0px;width:200px;text-align:center;top:482.20px;font-size:5.5px;line-height:6.60px;color:#eaeaea;letter-spacing:-0.20px;font-weight:400;">Apply</div><div style="left:541px;top:412px;width:58px;height:79px;border:1px solid #b4b4b4"></div><div class="t" style="left:546.5px;top:408.1px;font-size:5.6px;line-height:6.7px;color:#e6e6e6;letter-spacing:-0.28px;background:#474747;padding:0 1px">Cube View</div><div class="t" style="left:542.4px;top:417.64px;font-size:5.6px;line-height:6.72px;color:#e8e8e8;letter-spacing:-0.28px;font-weight:400;">Axes color</div><div style="left:574px;top:418px;width:9px;height:9px;background:#565656"></div><div style="left:576px;top:420px;width:5px;height:5px;background:#f4f4f4"></div><div style="left:577px;top:420.5px;width:1.6px;height:2.4px;border-right:1px solid #555;border-bottom:1px solid #555;transform:rotate(40deg) translate(0.6px,-0.3px)"></div><div style="left:586px;top:418px;width:9px;height:9px;background:#2a2a2a;box-shadow:inset 0 0 0 1px #888"></div><div class="t" style="left:542.4px;top:430.64px;font-size:5.6px;line-height:6.72px;color:#e8e8e8;letter-spacing:-0.28px;font-weight:400;">Elevation, deg</div><div style="left:576px;top:430px;width:18px;height:7px;background:#262626;border:1px solid #7c7c7c"></div><div class="t" style="left:486.0px;width:200px;text-align:center;top:430.78px;font-size:6.2px;line-height:7.44px;color:#e08420;letter-spacing:0.00px;font-weight:400;transform:scaleX(0.935);">37</div><div class="t" style="left:542.4px;top:443.24px;font-size:5.6px;line-height:6.72px;color:#e8e8e8;letter-spacing:-0.28px;font-weight:400;">Azimuth, deg</div><div style="left:576px;top:442px;width:18px;height:7px;background:#262626;border:1px solid #7c7c7c"></div><div class="t" style="left:486.0px;width:200px;text-align:center;top:443.02px;font-size:5.8px;line-height:6.96px;color:#e08420;letter-spacing:0.00px;font-weight:400;">-45</div><div style="left:542px;top:456px;width:26px;height:8px;background:#676767;box-shadow:inset 1px 1px 0 #e0e0e0,inset -1px -1px 0 #bdbdbd"></div><div class="t" style="left:455.0px;width:200px;text-align:center;top:456.70px;font-size:5.5px;line-height:6.60px;color:#eaeaea;letter-spacing:-0.20px;font-weight:400;">Y-Z</div><div style="left:570px;top:456px;width:26px;height:8px;background:#676767;box-shadow:inset 1px 1px 0 #e0e0e0,inset -1px -1px 0 #bdbdbd"></div><div class="t" style="left:483.0px;width:200px;text-align:center;top:456.70px;font-size:5.5px;line-height:6.60px;color:#eaeaea;letter-spacing:-0.20px;font-weight:400;">Apply</div><div style="left:542px;top:469px;width:26px;height:9px;background:#676767;box-shadow:inset 1px 1px 0 #e0e0e0,inset -1px -1px 0 #bdbdbd"></div><div class="t" style="left:455.0px;width:200px;text-align:center;top:470.20px;font-size:5.5px;line-height:6.60px;color:#eaeaea;letter-spacing:-0.20px;font-weight:400;">X-Z</div><div style="left:570px;top:469px;width:26px;height:9px;background:#676767;box-shadow:inset 1px 1px 0 #e0e0e0,inset -1px -1px 0 #bdbdbd"></div><div class="t" style="left:483.0px;width:200px;text-align:center;top:470.20px;font-size:5.5px;line-height:6.60px;color:#eaeaea;letter-spacing:-0.20px;font-weight:400;">Default</div><div style="left:542px;top:482px;width:26px;height:8px;background:#676767;box-shadow:inset 1px 1px 0 #e0e0e0,inset -1px -1px 0 #bdbdbd"></div><div class="t" style="left:455.0px;width:200px;text-align:center;top:482.70px;font-size:5.5px;line-height:6.60px;color:#eaeaea;letter-spacing:-0.20px;font-weight:400;">X-Y</div><div style="left:570px;top:482px;width:26px;height:8px;background:#676767;box-shadow:inset 1px 1px 0 #e0e0e0,inset -1px -1px 0 #bdbdbd"></div><div class="t" style="left:483.0px;width:200px;text-align:center;top:482.70px;font-size:5.5px;line-height:6.60px;color:#eaeaea;letter-spacing:-0.20px;font-weight:400;">Full</div><div style="left:602px;top:412px;width:55px;height:79px;border:1px solid #b4b4b4"></div><div class="t" style="left:607.5px;top:408.1px;font-size:5.6px;line-height:6.7px;color:#e6e6e6;letter-spacing:-0.28px;background:#474747;padding:0 1px">Cube Cut and Alpha</div><div class="t" style="left:606.4px;top:417.64px;font-size:5.6px;line-height:6.72px;color:#e8e8e8;letter-spacing:-0.28px;font-weight:400;">Vol</div><div style="left:619px;top:416px;width:9px;height:10px;background:#676767;box-shadow:inset 1px 1px 0 #e0e0e0,inset -1px -1px 0 #bdbdbd"></div><div class="t" style="left:523.5px;width:200px;text-align:center;top:417.70px;font-size:5.5px;line-height:6.60px;color:#eaeaea;letter-spacing:-0.20px;font-weight:400;">ok</div><div style="left:632px;top:416px;width:20px;height:8px;background:#262626;border:1px solid #7c7c7c"></div><div class="t" style="left:543.0px;width:200px;text-align:center;top:417.52px;font-size:5.8px;line-height:6.96px;color:#e08420;letter-spacing:0.00px;font-weight:400;">0</div><div class="t" style="left:606.4px;top:430.64px;font-size:5.6px;line-height:6.72px;color:#e8e8e8;letter-spacing:-0.28px;font-weight:400;">Sect</div><div style="left:619px;top:430px;width:9px;height:8px;background:#676767;box-shadow:inset 1px 1px 0 #e0e0e0,inset -1px -1px 0 #bdbdbd"></div><div class="t" style="left:523.5px;width:200px;text-align:center;top:430.70px;font-size:5.5px;line-height:6.60px;color:#eaeaea;letter-spacing:-0.20px;font-weight:400;">ok</div><div style="left:632px;top:430px;width:20px;height:7px;background:#262626;border:1px solid #7c7c7c"></div><div class="t" style="left:543.0px;width:200px;text-align:center;top:431.02px;font-size:5.8px;line-height:6.96px;color:#e08420;letter-spacing:0.00px;font-weight:400;">1</div><div class="t" style="left:606.4px;top:443.24px;font-size:5.6px;line-height:6.72px;color:#e8e8e8;letter-spacing:-0.28px;font-weight:400;">Surf</div><div style="left:619px;top:442px;width:9px;height:9px;background:#676767;box-shadow:inset 1px 1px 0 #e0e0e0,inset -1px -1px 0 #bdbdbd"></div><div class="t" style="left:523.5px;width:200px;text-align:center;top:443.20px;font-size:5.5px;line-height:6.60px;color:#eaeaea;letter-spacing:-0.20px;font-weight:400;">ok</div><div style="left:632px;top:442px;width:20px;height:7px;background:#262626;border:1px solid #7c7c7c"></div><div class="t" style="left:543.0px;width:200px;text-align:center;top:443.02px;font-size:5.8px;line-height:6.96px;color:#e08420;letter-spacing:0.00px;font-weight:400;">1</div><div style="left:606px;top:456px;width:10px;height:8px;background:#676767;box-shadow:inset 1px 1px 0 #e0e0e0,inset -1px -1px 0 #bdbdbd"></div><div class="t" style="left:511.0px;width:200px;text-align:center;top:457.12px;font-size:4.8px;line-height:5.76px;color:#eaeaea;letter-spacing:-0.20px;font-weight:400;">I</div><div style="left:619px;top:456px;width:9px;height:8px;background:#676767;box-shadow:inset 1px 1px 0 #e0e0e0,inset -1px -1px 0 #bdbdbd"></div><div class="t" style="left:523.5px;width:200px;text-align:center;top:457.12px;font-size:4.8px;line-height:5.76px;color:#eaeaea;letter-spacing:-0.20px;font-weight:400;">II</div><div style="left:631px;top:456px;width:10px;height:8px;background:#676767;box-shadow:inset 1px 1px 0 #e0e0e0,inset -1px -1px 0 #bdbdbd"></div><div class="t" style="left:536.0px;width:200px;text-align:center;top:457.12px;font-size:4.8px;line-height:5.76px;color:#eaeaea;letter-spacing:-0.20px;font-weight:400;">III</div><div style="left:644px;top:456px;width:10px;height:8px;background:#676767;box-shadow:inset 1px 1px 0 #e0e0e0,inset -1px -1px 0 #bdbdbd"></div><div class="t" style="left:549.0px;width:200px;text-align:center;top:457.12px;font-size:4.8px;line-height:5.76px;color:#eaeaea;letter-spacing:-0.20px;font-weight:400;">IV</div><div style="left:606px;top:468px;width:10px;height:10px;background:#676767;box-shadow:inset 1px 1px 0 #e0e0e0,inset -1px -1px 0 #bdbdbd"></div><div class="t" style="left:511.0px;width:200px;text-align:center;top:470.12px;font-size:4.8px;line-height:5.76px;color:#eaeaea;letter-spacing:-0.20px;font-weight:400;">I</div><div style="left:619px;top:468px;width:9px;height:10px;background:#676767;box-shadow:inset 1px 1px 0 #e0e0e0,inset -1px -1px 0 #bdbdbd"></div><div class="t" style="left:523.5px;width:200px;text-align:center;top:470.12px;font-size:4.8px;line-height:5.76px;color:#eaeaea;letter-spacing:-0.20px;font-weight:400;">II</div><div style="left:631px;top:468px;width:10px;height:10px;background:#676767;box-shadow:inset 1px 1px 0 #e0e0e0,inset -1px -1px 0 #bdbdbd"></div><div class="t" style="left:536.0px;width:200px;text-align:center;top:470.12px;font-size:4.8px;line-height:5.76px;color:#eaeaea;letter-spacing:-0.20px;font-weight:400;">III</div><div style="left:644px;top:468px;width:10px;height:10px;background:#676767;box-shadow:inset 1px 1px 0 #e0e0e0,inset -1px -1px 0 #bdbdbd"></div><div class="t" style="left:549.0px;width:200px;text-align:center;top:470.12px;font-size:4.8px;line-height:5.76px;color:#eaeaea;letter-spacing:-0.20px;font-weight:400;">IV</div><div style="left:606px;top:482px;width:22px;height:8px;background:#676767;box-shadow:inset 1px 1px 0 #e0e0e0,inset -1px -1px 0 #bdbdbd"></div><div class="t" style="left:517.0px;width:200px;text-align:center;top:482.70px;font-size:5.5px;line-height:6.60px;color:#eaeaea;letter-spacing:-0.20px;font-weight:400;">Cut</div><div style="left:632px;top:482px;width:22px;height:8px;background:#676767;box-shadow:inset 1px 1px 0 #e0e0e0,inset -1px -1px 0 #bdbdbd"></div><div class="t" style="left:543.0px;width:200px;text-align:center;top:482.70px;font-size:5.5px;line-height:6.60px;color:#eaeaea;letter-spacing:-0.20px;font-weight:400;">UnCut</div><div style="left:660px;top:412px;width:53px;height:79px;border:1px solid #b4b4b4"></div><div class="t" style="left:665.5px;top:408.1px;font-size:5.6px;line-height:6.7px;color:#e6e6e6;letter-spacing:-0.28px;background:#474747;padding:0 1px">Light Source</div><div class="t" style="left:664px;top:417.64px;font-size:5.6px;line-height:6.72px;color:#e8e8e8;letter-spacing:-0.28px;font-weight:400;">Light color</div><div style="left:698px;top:418px;width:9px;height:9px;background:#f8f8f8"></div><div class="t" style="left:664px;top:430.64px;font-size:5.6px;line-height:6.72px;color:#e8e8e8;letter-spacing:-0.28px;font-weight:400;">El</div><div style="left:677px;top:430px;width:10px;height:9px;background:#676767;box-shadow:inset 1px 1px 0 #e0e0e0,inset -1px -1px 0 #bdbdbd"></div><div class="t" style="left:582.0px;width:200px;text-align:center;top:431.20px;font-size:5.5px;line-height:6.60px;color:#eaeaea;letter-spacing:-0.20px;font-weight:400;">ok</div><div style="left:690px;top:430px;width:18px;height:7px;background:#262626;border:1px solid #7c7c7c"></div><div class="t" style="left:600.0px;width:200px;text-align:center;top:431.02px;font-size:5.8px;line-height:6.96px;color:#e08420;letter-spacing:0.00px;font-weight:400;">60</div><div class="t" style="left:664px;top:450.24px;font-size:5.6px;line-height:6.72px;color:#e8e8e8;letter-spacing:-0.28px;font-weight:400;">Az</div><div style="left:677px;top:449px;width:10px;height:9px;background:#676767;box-shadow:inset 1px 1px 0 #e0e0e0,inset -1px -1px 0 #bdbdbd"></div><div class="t" style="left:582.0px;width:200px;text-align:center;top:450.20px;font-size:5.5px;line-height:6.60px;color:#eaeaea;letter-spacing:-0.20px;font-weight:400;">ok</div><div style="left:690px;top:449px;width:18px;height:7px;background:#262626;border:1px solid #7c7c7c"></div><div class="t" style="left:600.0px;width:200px;text-align:center;top:450.02px;font-size:5.8px;line-height:6.96px;color:#e08420;letter-spacing:0.00px;font-weight:400;">160</div><div style="left:664px;top:442px;width:46px;height:4px;background:#5a5a5a"></div><div style="left:664px;top:442px;width:7px;height:4px;background:#dcdcdc"></div><div style="left:703px;top:442px;width:7px;height:4px;background:#dcdcdc"></div><div style="left:666px;top:443px;width:3px;height:1px;background:#666"></div><div style="left:705px;top:443px;width:3px;height:1px;background:#666"></div><div style="left:691px;top:441px;width:3px;height:5px;background:#f0f0f0"></div><div style="left:664px;top:461px;width:46px;height:4px;background:#5a5a5a"></div><div style="left:664px;top:461px;width:7px;height:4px;background:#dcdcdc"></div><div style="left:703px;top:461px;width:7px;height:4px;background:#dcdcdc"></div><div style="left:666px;top:462px;width:3px;height:1px;background:#666"></div><div style="left:705px;top:462px;width:3px;height:1px;background:#666"></div><div style="left:685px;top:460px;width:3px;height:5px;background:#f0f0f0"></div><div style="left:664px;top:468px;width:22px;height:10px;background:#676767;box-shadow:inset 1px 1px 0 #e0e0e0,inset -1px -1px 0 #bdbdbd"></div><div class="t" style="left:575.0px;width:200px;text-align:center;top:469.70px;font-size:5.5px;line-height:6.60px;color:#eaeaea;letter-spacing:-0.20px;font-weight:400;">Save</div><div style="left:688px;top:468px;width:22px;height:10px;background:#676767;box-shadow:inset 1px 1px 0 #e0e0e0,inset -1px -1px 0 #bdbdbd"></div><div class="t" style="left:599.0px;width:200px;text-align:center;top:469.70px;font-size:5.5px;line-height:6.60px;color:#eaeaea;letter-spacing:-0.20px;font-weight:400;">Load</div><div style="left:664px;top:482px;width:46px;height:8px;background:#676767;box-shadow:inset 1px 1px 0 #e0e0e0,inset -1px -1px 0 #bdbdbd"></div><div class="t" style="left:587.0px;width:200px;text-align:center;top:482.70px;font-size:5.5px;line-height:6.60px;color:#eaeaea;letter-spacing:-0.20px;font-weight:400;">Default</div><div style="left:717px;top:412px;width:42px;height:79px;border:1px solid #b4b4b4"></div><div class="t" style="left:722.5px;top:408.1px;font-size:5.6px;line-height:6.7px;color:#e6e6e6;letter-spacing:-0.28px;background:#474747;padding:0 1px">Visible Range</div><div class="t" style="left:721px;top:418.34px;font-size:5.6px;line-height:6.72px;color:#e8e8e8;letter-spacing:-0.28px;font-weight:400;">Isosurf</div><div style="left:745px;top:418px;width:9px;height:9px;background:#565656"></div><div style="left:747px;top:420px;width:5px;height:5px;background:#f4f4f4"></div><div class="t" style="left:721px;top:430.14px;font-size:5.6px;line-height:6.72px;color:#e8e8e8;letter-spacing:-0.28px;font-weight:400;">Cut inside</div><div style="left:745px;top:431px;width:9px;height:9px;background:#565656"></div><div style="left:747px;top:433px;width:5px;height:5px;background:#f4f4f4"></div><div class="t" style="left:721px;top:442.64px;font-size:5.6px;line-height:6.72px;color:#e8e8e8;letter-spacing:-0.28px;font-weight:400;">Max</div><div style="left:735px;top:444px;width:18px;height:6px;background:#262626;border:1px solid #7c7c7c"></div><div class="t" style="left:645.0px;width:200px;text-align:center;top:445.12px;font-size:4.8px;line-height:5.76px;color:#e08420;letter-spacing:0.00px;font-weight:400;">4.41621</div><div class="t" style="left:721px;top:456.04px;font-size:5.6px;line-height:6.72px;color:#e8e8e8;letter-spacing:-0.28px;font-weight:400;">Min</div><div style="left:735px;top:457px;width:18px;height:6px;background:#262626;border:1px solid #7c7c7c"></div><div class="t" style="left:645.0px;width:200px;text-align:center;top:458.12px;font-size:4.8px;line-height:5.76px;color:#e08420;letter-spacing:0.00px;font-weight:400;">1.91407</div><div style="left:720px;top:469px;width:36px;height:9px;background:#676767;box-shadow:inset 1px 1px 0 #e0e0e0,inset -1px -1px 0 #bdbdbd"></div><div class="t" style="left:638.0px;width:200px;text-align:center;top:470.20px;font-size:5.5px;line-height:6.60px;color:#eaeaea;letter-spacing:-0.20px;font-weight:400;">Max Range</div><div style="left:720px;top:481px;width:36px;height:9px;background:#676767;box-shadow:inset 1px 1px 0 #e0e0e0,inset -1px -1px 0 #bdbdbd"></div><div class="t" style="left:638.0px;width:200px;text-align:center;top:482.20px;font-size:5.5px;line-height:6.60px;color:#eaeaea;letter-spacing:-0.20px;font-weight:400;">Apply</div><div style="left:763px;top:412px;width:41px;height:79px;border:1px solid #b4b4b4"></div><div class="t" style="left:768.5px;top:408.1px;font-size:5.6px;line-height:6.7px;color:#e6e6e6;letter-spacing:-0.28px;background:#474747;padding:0 1px">Isosurface</div><div class="t" style="left:766.6px;top:417.64px;font-size:5.6px;line-height:6.72px;color:#e8e8e8;letter-spacing:-0.28px;font-weight:400;">As mesh</div><div style="left:790px;top:419px;width:9px;height:9px;background:#565656"></div><div style="left:792px;top:421px;width:5px;height:5px;background:#f4f4f4"></div><div class="t" style="left:766.6px;top:430.44px;font-size:5.6px;line-height:6.72px;color:#e8e8e8;letter-spacing:-0.28px;font-weight:400;">Val</div><div style="left:781px;top:431px;width:17px;height:6px;background:#262626;border:1px solid #7c7c7c"></div><div style="left:766px;top:443px;width:35px;height:9px;background:#f000f0;box-shadow:inset 1px 1px 0 #e0e0e0,inset -1px -1px 0 #bdbdbd"></div><div class="t" style="left:683.5px;width:200px;text-align:center;top:444.20px;font-size:5.5px;line-height:6.60px;color:#eaeaea;letter-spacing:-0.20px;font-weight:400;">Color</div><div style="left:766px;top:456px;width:35px;height:8px;background:#676767;box-shadow:inset 1px 1px 0 #e0e0e0,inset -1px -1px 0 #bdbdbd"></div><div class="t" style="left:683.5px;width:200px;text-align:center;top:456.70px;font-size:5.5px;line-height:6.60px;color:#eaeaea;letter-spacing:-0.20px;font-weight:400;">Delete All</div><div style="left:766px;top:469px;width:35px;height:9px;background:#676767;box-shadow:inset 1px 1px 0 #e0e0e0,inset -1px -1px 0 #bdbdbd"></div><div class="t" style="left:683.5px;width:200px;text-align:center;top:470.20px;font-size:5.5px;line-height:6.60px;color:#eaeaea;letter-spacing:-0.20px;font-weight:400;">Delete Last</div><div style="left:766px;top:481px;width:35px;height:9px;background:#676767;box-shadow:inset 1px 1px 0 #e0e0e0,inset -1px -1px 0 #bdbdbd"></div><div class="t" style="left:683.5px;width:200px;text-align:center;top:482.20px;font-size:5.5px;line-height:6.60px;color:#eaeaea;letter-spacing:-0.20px;font-weight:400;">Create</div><div style="left:808px;top:412px;width:39px;height:79px;border:1px solid #b4b4b4"></div><div class="t" style="left:813.5px;top:408.1px;font-size:5.6px;line-height:6.7px;color:#e6e6e6;letter-spacing:-0.28px;background:#474747;padding:0 1px">Cut Area</div><div class="t" style="left:812px;top:417.64px;font-size:5.6px;line-height:6.72px;color:#e8e8e8;letter-spacing:-0.28px;font-weight:400;">Outer</div><div style="left:834px;top:419px;width:9px;height:9px;background:#565656"></div><div style="left:836px;top:421px;width:5px;height:5px;background:#f4f4f4"></div><div style="left:837px;top:421.5px;width:1.6px;height:2.4px;border-right:1px solid #555;border-bottom:1px solid #555;transform:rotate(40deg) translate(0.6px,-0.3px)"></div><div class="t" style="left:812px;top:430.44px;font-size:5.6px;line-height:6.72px;color:#e8e8e8;letter-spacing:-0.28px;font-weight:400;">Inner</div><div style="left:834px;top:431px;width:9px;height:9px;background:#565656"></div><div style="left:836px;top:433px;width:5px;height:5px;background:#f4f4f4"></div><div style="left:811px;top:443px;width:33px;height:9px;background:#676767;box-shadow:inset 1px 1px 0 #e0e0e0,inset -1px -1px 0 #bdbdbd"></div><div class="t" style="left:727.5px;width:200px;text-align:center;top:444.20px;font-size:5.5px;line-height:6.60px;color:#eaeaea;letter-spacing:-0.20px;font-weight:400;">Restore</div><div style="left:811px;top:456px;width:33px;height:9px;background:#676767;box-shadow:inset 1px 1px 0 #e0e0e0,inset -1px -1px 0 #bdbdbd"></div><div class="t" style="left:727.5px;width:200px;text-align:center;top:457.20px;font-size:5.5px;line-height:6.60px;color:#eaeaea;letter-spacing:-0.20px;font-weight:400;">Cut</div><div style="left:811px;top:469px;width:33px;height:9px;background:#676767;box-shadow:inset 1px 1px 0 #e0e0e0,inset -1px -1px 0 #bdbdbd"></div><div class="t" style="left:727.5px;width:200px;text-align:center;top:470.20px;font-size:5.5px;line-height:6.60px;color:#eaeaea;letter-spacing:-0.20px;font-weight:400;">Delete</div><div style="left:811px;top:482px;width:33px;height:9px;background:#676767;box-shadow:inset 1px 1px 0 #e0e0e0,inset -1px -1px 0 #bdbdbd"></div><div class="t" style="left:727.5px;width:200px;text-align:center;top:483.20px;font-size:5.5px;line-height:6.60px;color:#eaeaea;letter-spacing:-0.20px;font-weight:400;">Path</div>
</body></html>
